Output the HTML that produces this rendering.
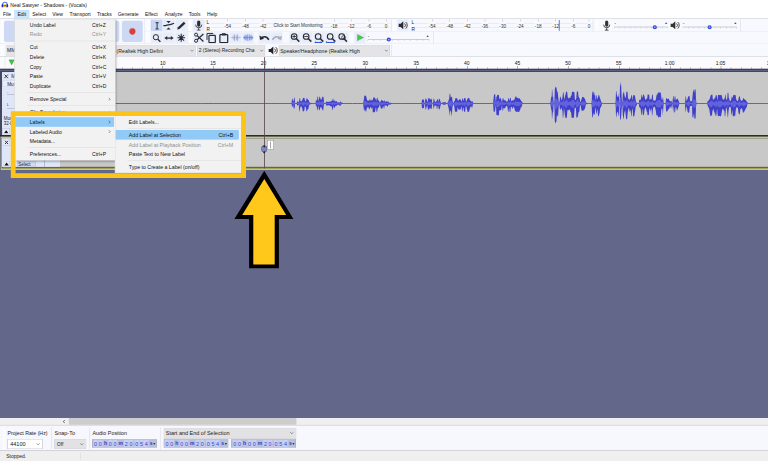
<!DOCTYPE html>
<html><head><meta charset="utf-8"><title>Audacity</title>
<style>
html,body{margin:0;padding:0;width:768px;height:461px;overflow:hidden;background:#636789;}
#a{position:absolute;left:0;top:0;width:1920px;height:1153px;transform:scale(.4);transform-origin:0 0;font-family:"Liberation Sans",sans-serif;overflow:hidden;}
#a div,#a svg{position:absolute;}
</style></head><body><div id="a">
<div style="left:0px;top:0px;width:1920px;height:46.5px;background:#fff;"></div>
<div style="left:0px;top:46.5px;width:1920px;height:95px;background:#F8F9FE;"></div>
<div style="left:0px;top:46px;width:1920px;height:1.25px;background:#d9d9de;"></div>
<div style="left:360px;top:77.75px;width:1560px;height:1.5px;background:#e4e5ec;"></div>
<div style="left:0px;top:108.5px;width:1920px;height:1.75px;background:#e4e5ec;"></div>
<div style="left:0px;top:140.75px;width:1920px;height:1px;background:#d5d6de;"></div>
<div style="left:0px;top:141.75px;width:1920px;height:30.25px;background:#fbfbfe;"></div>
<div style="left:0px;top:171.75px;width:1920px;height:3.5px;background:#3f415b;"></div>
<div style="left:0px;top:175.25px;width:1920px;height:869.5px;background:#636789;"></div>
<svg style="left:1.5px;top:1.5px;" width="20.5" height="19" viewBox="0 0 9.4 8.7"><path d="M2 5V4.4A2.7 2.7 0 0 1 7.4 4.4V5" fill="none" stroke="#5a7ae8" stroke-width="1.3"/><rect x=".9" y="3.9" width="2.3" height="3.6" rx="1" fill="#2222c8"/><rect x="6.2" y="3.9" width="2.3" height="3.6" rx="1" fill="#2222c8"/><rect x="3.2" y="3.9" width="3" height="3.4" fill="#ffd21e"/><rect x="3.2" y="5" width="3" height="1.2" fill="#e03a1c"/></svg>
<div style="left:25.75px;top:7.12px;font-size:12.64px;line-height:15.17px;color:#111;white-space:nowrap;">Neal Sawyer - Shadows - (Vocals)</div>
<div style="left:35.5px;top:25px;width:37.25px;height:21px;background:#cce6fa;border:1px solid #b5d9f5;box-sizing:border-box;"></div>
<div style="left:7.43px;top:30.45px;font-size:12.50px;line-height:15.00px;color:#111;white-space:nowrap;">File</div>
<div style="left:43.6px;top:30.45px;font-size:12.50px;line-height:15.00px;color:#111;white-space:nowrap;">Edit</div>
<div style="left:80.5px;top:30.45px;font-size:12.50px;line-height:15.00px;color:#111;white-space:nowrap;">Select</div>
<div style="left:130.57px;top:30.45px;font-size:12.50px;line-height:15.00px;color:#111;white-space:nowrap;">View</div>
<div style="left:173.86px;top:30.45px;font-size:12.50px;line-height:15.00px;color:#111;white-space:nowrap;">Transport</div>
<div style="left:242.48px;top:30.45px;font-size:12.50px;line-height:15.00px;color:#111;white-space:nowrap;">Tracks</div>
<div style="left:294.32px;top:30.45px;font-size:12.50px;line-height:15.00px;color:#111;white-space:nowrap;">Generate</div>
<div style="left:362.51px;top:30.45px;font-size:12.50px;line-height:15.00px;color:#111;white-space:nowrap;">Effect</div>
<div style="left:412.01px;top:30.45px;font-size:12.50px;line-height:15.00px;color:#111;white-space:nowrap;">Analyze</div>
<div style="left:472.03px;top:30.45px;font-size:12.50px;line-height:15.00px;color:#111;white-space:nowrap;">Tools</div>
<div style="left:517.65px;top:30.45px;font-size:12.50px;line-height:15.00px;color:#111;white-space:nowrap;">Help</div>
<div style="left:1.5px;top:51.25px;width:7.5px;height:55px;background-image:linear-gradient(#fff 0 1.2px,#d9dbe6 1.2px 2px,transparent 2px);background-size:100% 4px;opacity:.95"></div>
<div style="left:304.75px;top:52px;width:52.5px;height:53px;background:#cdd8f4;border-radius:5px;"></div>
<div style="left:245.75px;top:52px;width:52.5px;height:53px;background:#cdd8f4;border-radius:5px;"></div>
<div style="left:186.75px;top:52px;width:52.5px;height:53px;background:#cdd8f4;border-radius:5px;"></div>
<div style="left:127.75px;top:52px;width:52.5px;height:53px;background:#cdd8f4;border-radius:5px;"></div>
<div style="left:68.75px;top:52px;width:52.5px;height:53px;background:#cdd8f4;border-radius:5px;"></div>
<div style="left:9.75px;top:52px;width:52.5px;height:53px;background:#cdd8f4;border-radius:5px;"></div>
<div style="left:323.75px;top:71px;width:14.5px;height:14.5px;background:#e23b3b;border-radius:50%;box-shadow:0 0 0 0.8px #b98a6a;"></div>
<div style="left:360.75px;top:47.5px;width:1px;height:62px;background:#dcdde6;"></div>
<div style="left:366.5px;top:51.25px;width:7.5px;height:55.75px;background-image:linear-gradient(#fff 0 1.2px,#d9dbe6 1.2px 2px,transparent 2px);background-size:100% 4px;opacity:.95"></div>
<div style="left:376.5px;top:48.75px;width:29px;height:28.25px;background:#c9d6f4;box-shadow:inset 0 0 0 1px #aebde6;"></div>
<div style="left:407.12px;top:48.75px;width:29px;height:28.25px;background:#e7ecfb;box-shadow:inset 0 0 0 1px #f3f5fd;"></div>
<div style="left:437.75px;top:48.75px;width:29px;height:28.25px;background:#e7ecfb;box-shadow:inset 0 0 0 1px #f3f5fd;"></div>
<div style="left:376.5px;top:80px;width:29px;height:27.75px;background:#e7ecfb;box-shadow:inset 0 0 0 1px #f3f5fd;"></div>
<div style="left:407.12px;top:80px;width:29px;height:27.75px;background:#e7ecfb;box-shadow:inset 0 0 0 1px #f3f5fd;"></div>
<div style="left:437.75px;top:80px;width:29px;height:27.75px;background:#e7ecfb;box-shadow:inset 0 0 0 1px #f3f5fd;"></div>
<svg style="left:375px;top:47.5px;" width="95" height="62.5" viewBox="150 19 38 25"><path d="M155.5 22.5H158.7M155.5 28.8H158.7M157.1 22.5V28.8" stroke="#2b2b2f" stroke-width=".95" fill="none"/><path d="M166.4 20.9H170.7L168.55 23.1Z M166.4 29.3H170.7L168.55 27.2Z" fill="#2b2b2f"/><path d="M163.3 25.5C166 25.7 167.3 24.6 168.6 24.6S172 24 174.1 23.1" stroke="#2b2b2f" stroke-width="1.25" fill="none"/><path d="M177.2 29.2L177.9 27L183.8 21.5L185.5 23.2L179.5 28.7Z" fill="#2b2b2f"/><circle cx="155.9" cy="37" r="2.6" stroke="#2b2b2f" stroke-width="1" fill="none"/><path d="M157.8 39L160.4 41.5" stroke="#2b2b2f" stroke-width="1.3"/><path d="M166 37.9H172" stroke="#2b2b2f" stroke-width="1.3"/><path d="M164.4 37.9L167.2 35.9V39.9Z M173.6 37.9L170.8 35.9V39.9Z" fill="#2b2b2f"/><path d="M181.2 33.6V41.6M177.4 37.6H185M178.4 34.8L184 40.4M184 34.8L178.4 40.4" stroke="#2b2b2f" stroke-width="1.05"/></svg>
<div style="left:468.25px;top:47.5px;width:1px;height:62px;background:#dcdde6;"></div>
<div style="left:472px;top:50.75px;width:7.5px;height:25.75px;background-image:linear-gradient(#fff 0 1.2px,#d9dbe6 1.2px 2px,transparent 2px);background-size:100% 4px;opacity:.95"></div>
<div style="left:482px;top:48.75px;width:29.5px;height:28.5px;background:#e7ecfb;box-shadow:inset 0 0 0 1px #f3f5fd;"></div>
<svg style="left:482px;top:48.75px;" width="29.5" height="28.5" viewBox="1.06 1.03 9.68 9.35"><rect x="4.6" y="1.8" width="2.6" height="5" rx="1.3" fill="#2b2b2f"/><path d="M3.4 5.2A2.5 2.5 0 0 0 8.4 5.2M5.9 7.8V9.6M4.4 9.7H7.4" stroke="#2b2b2f" stroke-width=".7" fill="none"/></svg>
<div style="left:516.5px;top:49.24px;font-size:12.00px;line-height:14.40px;color:#222;white-space:nowrap;">L</div>
<div style="left:516.5px;top:65.74px;font-size:12.00px;line-height:14.40px;color:#222;white-space:nowrap;">R</div>
<div style="left:527.5px;top:58px;width:447.5px;height:1px;background:#d8dae4;"></div>
<div style="left:527.5px;top:68.25px;width:447.5px;height:1px;background:#d8dae4;"></div>
<div style="left:560.87px;top:58.22px;font-size:11.60px;line-height:13.92px;color:#333;white-space:nowrap;background:#F8F9FE;">-54</div>
<div style="left:568.75px;top:48.5px;width:1px;height:4px;background:#888;"></div>
<div style="left:605.37px;top:58.22px;font-size:11.60px;line-height:13.92px;color:#333;white-space:nowrap;background:#F8F9FE;">-48</div>
<div style="left:613.25px;top:48.5px;width:1px;height:4px;background:#888;"></div>
<div style="left:649.12px;top:58.22px;font-size:11.60px;line-height:13.92px;color:#333;white-space:nowrap;background:#F8F9FE;">-42</div>
<div style="left:657px;top:48.5px;width:1px;height:4px;background:#888;"></div>
<div style="left:826.62px;top:58.22px;font-size:11.60px;line-height:13.92px;color:#333;white-space:nowrap;background:#F8F9FE;">-18</div>
<div style="left:834.5px;top:48.5px;width:1px;height:4px;background:#888;"></div>
<div style="left:869.87px;top:58.22px;font-size:11.60px;line-height:13.92px;color:#333;white-space:nowrap;background:#F8F9FE;">-12</div>
<div style="left:877.75px;top:48.5px;width:1px;height:4px;background:#888;"></div>
<div style="left:917.34px;top:58.22px;font-size:11.60px;line-height:13.92px;color:#333;white-space:nowrap;background:#F8F9FE;">-6</div>
<div style="left:922px;top:48.5px;width:1px;height:4px;background:#888;"></div>
<div style="left:961.77px;top:58.22px;font-size:11.60px;line-height:13.92px;color:#333;white-space:nowrap;background:#F8F9FE;">0</div>
<div style="left:964.5px;top:48.5px;width:1px;height:4px;background:#888;"></div>
<div style="left:683.75px;top:58.23px;font-size:11.59px;line-height:13.90px;color:#333;white-space:nowrap;background:#F8F9FE;">Click to Start Monitoring</div>
<div style="left:978px;top:47.5px;width:1px;height:30.75px;background:#cfd0da;"></div>
<div style="left:981.5px;top:50.75px;width:7.5px;height:25.75px;background-image:linear-gradient(#fff 0 1.2px,#d9dbe6 1.2px 2px,transparent 2px);background-size:100% 4px;opacity:.95"></div>
<div style="left:992.5px;top:48.75px;width:28.25px;height:28.5px;background:#e7ecfb;box-shadow:inset 0 0 0 1px #f3f5fd;"></div>
<svg style="left:992px;top:48.75px;" width="29.5" height="28.5" viewBox="1.06 1.03 9.68 9.35"><path d="M2.6 4.4H4.2L6.4 2.4V9H6.4L4.2 7H2.6Z" fill="#2b2b2f"/><path d="M7.4 4.2A2 2 0 0 1 7.4 7.2M8.4 3A3.6 3.6 0 0 1 8.4 8.4" stroke="#2b2b2f" stroke-width=".7" fill="none"/></svg>
<div style="left:1028.5px;top:49.24px;font-size:12.00px;line-height:14.40px;color:#222;white-space:nowrap;">L</div>
<div style="left:1028.5px;top:65.74px;font-size:12.00px;line-height:14.40px;color:#222;white-space:nowrap;">R</div>
<div style="left:1037.5px;top:58px;width:440px;height:1px;background:#d8dae4;"></div>
<div style="left:1037.5px;top:68.25px;width:440px;height:1px;background:#d8dae4;"></div>
<div style="left:1072.37px;top:58.22px;font-size:11.60px;line-height:13.92px;color:#333;white-space:nowrap;background:#F8F9FE;">-54</div>
<div style="left:1080.25px;top:48.5px;width:1px;height:4px;background:#888;"></div>
<div style="left:1116.12px;top:58.22px;font-size:11.60px;line-height:13.92px;color:#333;white-space:nowrap;background:#F8F9FE;">-48</div>
<div style="left:1124px;top:48.5px;width:1px;height:4px;background:#888;"></div>
<div style="left:1159.87px;top:58.22px;font-size:11.60px;line-height:13.92px;color:#333;white-space:nowrap;background:#F8F9FE;">-42</div>
<div style="left:1167.75px;top:48.5px;width:1px;height:4px;background:#888;"></div>
<div style="left:1203.62px;top:58.22px;font-size:11.60px;line-height:13.92px;color:#333;white-space:nowrap;background:#F8F9FE;">-36</div>
<div style="left:1211.5px;top:48.5px;width:1px;height:4px;background:#888;"></div>
<div style="left:1248.37px;top:58.22px;font-size:11.60px;line-height:13.92px;color:#333;white-space:nowrap;background:#F8F9FE;">-30</div>
<div style="left:1256.25px;top:48.5px;width:1px;height:4px;background:#888;"></div>
<div style="left:1292.37px;top:58.22px;font-size:11.60px;line-height:13.92px;color:#333;white-space:nowrap;background:#F8F9FE;">-24</div>
<div style="left:1300.25px;top:48.5px;width:1px;height:4px;background:#888;"></div>
<div style="left:1337.12px;top:58.22px;font-size:11.60px;line-height:13.92px;color:#333;white-space:nowrap;background:#F8F9FE;">-18</div>
<div style="left:1345px;top:48.5px;width:1px;height:4px;background:#888;"></div>
<div style="left:1380.87px;top:58.22px;font-size:11.60px;line-height:13.92px;color:#333;white-space:nowrap;background:#F8F9FE;">-12</div>
<div style="left:1388.75px;top:48.5px;width:1px;height:4px;background:#888;"></div>
<div style="left:1427.84px;top:58.22px;font-size:11.60px;line-height:13.92px;color:#333;white-space:nowrap;background:#F8F9FE;">-6</div>
<div style="left:1432.5px;top:48.5px;width:1px;height:4px;background:#888;"></div>
<div style="left:1469.27px;top:58.22px;font-size:11.60px;line-height:13.92px;color:#333;white-space:nowrap;background:#F8F9FE;">0</div>
<div style="left:1472px;top:48.5px;width:1px;height:4px;background:#888;"></div>
<div style="left:1397.25px;top:49.5px;width:1.5px;height:27.5px;background:#3a55d8;"></div>
<div style="left:1481.5px;top:47.5px;width:1px;height:30.75px;background:#cfd0da;"></div>
<div style="left:1489px;top:50.75px;width:7.5px;height:25.75px;background-image:linear-gradient(#fff 0 1.2px,#d9dbe6 1.2px 2px,transparent 2px);background-size:100% 4px;opacity:.95"></div>
<svg style="left:1502px;top:49px;" width="29.5" height="28.5" viewBox="1.06 1.03 9.68 9.35"><rect x="4.6" y="1.8" width="2.6" height="5" rx="1.3" fill="#333"/><path d="M3.4 5.2A2.5 2.5 0 0 0 8.4 5.2M5.9 7.8V9.6M4.4 9.7H7.4" stroke="#333" stroke-width=".7" fill="none"/></svg>
<div style="left:1536.25px;top:67px;width:132.5px;height:1.12px;background:#8a8c98;"></div>
<div style="left:1535.88px;top:67.5px;width:0.75px;height:3.25px;background:#a5a7b2;"></div>
<div style="left:1549.12px;top:67.5px;width:0.75px;height:3.25px;background:#a5a7b2;"></div>
<div style="left:1562.38px;top:67.5px;width:0.75px;height:3.25px;background:#a5a7b2;"></div>
<div style="left:1575.62px;top:67.5px;width:0.75px;height:3.25px;background:#a5a7b2;"></div>
<div style="left:1588.88px;top:67.5px;width:0.75px;height:3.25px;background:#a5a7b2;"></div>
<div style="left:1602.12px;top:67.5px;width:0.75px;height:3.25px;background:#a5a7b2;"></div>
<div style="left:1615.38px;top:67.5px;width:0.75px;height:3.25px;background:#a5a7b2;"></div>
<div style="left:1628.62px;top:67.5px;width:0.75px;height:3.25px;background:#a5a7b2;"></div>
<div style="left:1641.88px;top:67.5px;width:0.75px;height:3.25px;background:#a5a7b2;"></div>
<div style="left:1655.13px;top:67.5px;width:0.75px;height:3.25px;background:#a5a7b2;"></div>
<div style="left:1668.38px;top:67.5px;width:0.75px;height:3.25px;background:#a5a7b2;"></div>
<div style="left:1536.25px;top:52.40px;font-size:10.00px;line-height:12.00px;color:#000;white-space:nowrap;font-weight:bold;">-</div>
<div style="left:1662.75px;top:52.98px;font-size:9.00px;line-height:10.80px;color:#000;white-space:nowrap;font-weight:bold;">+</div>
<div style="left:1631.75px;top:62.75px;width:10px;height:10px;background:#8e9af2;border-radius:50%;box-shadow:inset 0 0 0 2.6px #3444d8;"></div>
<svg style="left:1672px;top:49px;" width="29.5" height="28.5" viewBox="1.06 1.03 9.68 9.35"><path d="M2.6 4.4H4.2L6.4 2.4V9H6.4L4.2 7H2.6Z" fill="#333"/><path d="M7.4 4.2A2 2 0 0 1 7.4 7.2M8.4 3A3.6 3.6 0 0 1 8.4 8.4" stroke="#333" stroke-width=".7" fill="none"/></svg>
<div style="left:1707.5px;top:67px;width:134.25px;height:1.12px;background:#8a8c98;"></div>
<div style="left:1707.12px;top:67.5px;width:0.75px;height:3.25px;background:#a5a7b2;"></div>
<div style="left:1720.55px;top:67.5px;width:0.75px;height:3.25px;background:#a5a7b2;"></div>
<div style="left:1733.98px;top:67.5px;width:0.75px;height:3.25px;background:#a5a7b2;"></div>
<div style="left:1747.4px;top:67.5px;width:0.75px;height:3.25px;background:#a5a7b2;"></div>
<div style="left:1760.83px;top:67.5px;width:0.75px;height:3.25px;background:#a5a7b2;"></div>
<div style="left:1774.25px;top:67.5px;width:0.75px;height:3.25px;background:#a5a7b2;"></div>
<div style="left:1787.68px;top:67.5px;width:0.75px;height:3.25px;background:#a5a7b2;"></div>
<div style="left:1801.1px;top:67.5px;width:0.75px;height:3.25px;background:#a5a7b2;"></div>
<div style="left:1814.53px;top:67.5px;width:0.75px;height:3.25px;background:#a5a7b2;"></div>
<div style="left:1827.95px;top:67.5px;width:0.75px;height:3.25px;background:#a5a7b2;"></div>
<div style="left:1841.38px;top:67.5px;width:0.75px;height:3.25px;background:#a5a7b2;"></div>
<div style="left:1707.5px;top:52.40px;font-size:10.00px;line-height:12.00px;color:#000;white-space:nowrap;font-weight:bold;">-</div>
<div style="left:1835.75px;top:52.98px;font-size:9.00px;line-height:10.80px;color:#000;white-space:nowrap;font-weight:bold;">+</div>
<div style="left:1769.25px;top:62.75px;width:10px;height:10px;background:#8e9af2;border-radius:50%;box-shadow:inset 0 0 0 2.6px #3444d8;"></div>
<div style="left:1849.5px;top:47.5px;width:1px;height:30.75px;background:#cfd0da;"></div>
<div style="left:472px;top:82.5px;width:7.5px;height:25px;background-image:linear-gradient(#fff 0 1.2px,#d9dbe6 1.2px 2px,transparent 2px);background-size:100% 4px;opacity:.95"></div>
<div style="left:482.5px;top:80.25px;width:29px;height:28px;background:#e7ecfb;box-shadow:inset 0 0 0 1px #f3f5fd;"></div>
<div style="left:513.5px;top:80.25px;width:29px;height:28px;background:#e7ecfb;box-shadow:inset 0 0 0 1px #f3f5fd;"></div>
<div style="left:544.5px;top:80.25px;width:29px;height:28px;background:#e7ecfb;box-shadow:inset 0 0 0 1px #f3f5fd;"></div>
<div style="left:575.25px;top:80.25px;width:29px;height:28px;background:#e7ecfb;box-shadow:inset 0 0 0 1px #f3f5fd;"></div>
<div style="left:605.75px;top:80.25px;width:29px;height:28px;background:#e7ecfb;box-shadow:inset 0 0 0 1px #f3f5fd;"></div>
<svg style="left:482.5px;top:80.25px;" width="29" height="28" viewBox="1.04 1.01 9.51 9.18"><circle cx="3.4" cy="8.2" r="1.25" stroke="#2b2b2f" stroke-width=".8" fill="none"/><circle cx="3.4" cy="3.2" r="1.25" stroke="#2b2b2f" stroke-width=".8" fill="none"/><path d="M4.3 7.4L9.4 2.6M4.3 4L9.4 8.8" stroke="#2b2b2f" stroke-width="1"/></svg>
<svg style="left:513.5px;top:80.25px;" width="29" height="28" viewBox="1.04 1.01 9.51 9.18"><path d="M2.2 7.5V2.2H7.2" stroke="#2b2b2f" stroke-width=".8" fill="none"/><rect x="3.8" y="3.8" width="5.2" height="6" rx=".6" stroke="#2b2b2f" stroke-width="1" fill="none"/></svg>
<svg style="left:544.5px;top:80.25px;" width="29" height="28" viewBox="1.04 1.01 9.51 9.18"><rect x="2.6" y="3.2" width="6.4" height="6.6" rx=".6" stroke="#2b2b2f" stroke-width="1" fill="none"/><rect x="4.3" y="2" width="3" height="1.8" fill="#2b2b2f"/></svg>
<svg style="left:575.25px;top:80.25px;" width="29" height="28" viewBox="1.04 1.01 9.51 9.18"><path d="M1.6 5.6H10M3.2 4.6V6.6M4.2 3.8V7.4M5.2 4.4V6.8M6.4 3.6V7.6M7.4 4.2V7M8.4 4.8V6.4" stroke="#9fb2e6" stroke-width=".5"/><path d="M4.6 3V8.2M7 3V8.2" stroke="#8c94ad" stroke-width=".6"/></svg>
<svg style="left:605.75px;top:80.25px;" width="29" height="28" viewBox="1.04 1.01 9.51 9.18"><path d="M1.6 5.6H10M2.6 4.2V7M3.4 3.4V7.8M4.2 4.2V7M7.4 4.2V7M8.2 3.4V7.8M9 4.2V7" stroke="#5f86ea" stroke-width=".6"/><path d="M5 3V8.2M6.6 3V8.2" stroke="#6a7cc0" stroke-width=".7"/></svg>
<div style="left:646.5px;top:80.25px;width:29.25px;height:28px;background:#e7ecfb;box-shadow:inset 0 0 0 1px #f3f5fd;"></div>
<div style="left:677px;top:80.25px;width:29.25px;height:28px;background:#e7ecfb;box-shadow:inset 0 0 0 1px #f3f5fd;"></div>
<svg style="left:646.5px;top:80.25px;" width="29.25" height="28" viewBox="1.05 1.01 9.59 9.18"><path d="M2.6 6.4C4 4.4 7.6 4 9.2 7.4" stroke="#2b2b2f" stroke-width="1.3" fill="none"/><path d="M1.6 3.8L2 7.6L5.4 6.6Z" fill="#2b2b2f"/></svg>
<svg style="left:677px;top:80.25px;" width="29.25" height="28" viewBox="1.05 1.01 9.59 9.18"><path d="M9.1 6.4C7.7 4.4 4.1 4 2.5 7.4" stroke="#a9adb8" stroke-width="1.3" fill="none"/><path d="M10.1 3.8L9.7 7.6L6.3 6.6Z" fill="#a9adb8"/></svg>
<div style="left:723px;top:80.25px;width:28.75px;height:28px;background:#e7ecfb;box-shadow:inset 0 0 0 1px #f3f5fd;"></div>
<svg style="left:723px;top:80.25px;" width="28.75" height="28" viewBox="1.04 1.01 9.43 9.18"><circle cx="5.1" cy="4.7" r="2.3" stroke="#2b2b2f" stroke-width=".9" fill="none"/><path d="M6.8 6.4L9.3 8.9" stroke="#2b2b2f" stroke-width="1.2"/><path d="M3.6 4.7H6.6M5.1 3.2V6.2" stroke="#2b2b2f" stroke-width=".7"/></svg>
<div style="left:753px;top:80.25px;width:28.75px;height:28px;background:#e7ecfb;box-shadow:inset 0 0 0 1px #f3f5fd;"></div>
<svg style="left:753px;top:80.25px;" width="28.75" height="28" viewBox="1.04 1.01 9.43 9.18"><circle cx="5.1" cy="4.7" r="2.3" stroke="#2b2b2f" stroke-width=".9" fill="none"/><path d="M6.8 6.4L9.3 8.9" stroke="#2b2b2f" stroke-width="1.2"/><path d="M3.6 4.7H6.6" stroke="#2b2b2f" stroke-width=".7"/></svg>
<div style="left:782.75px;top:80.25px;width:28.75px;height:28px;background:#e7ecfb;box-shadow:inset 0 0 0 1px #f3f5fd;"></div>
<svg style="left:782.75px;top:80.25px;" width="28.75" height="28" viewBox="1.04 1.01 9.43 9.18"><circle cx="5.1" cy="4.7" r="2.3" stroke="#2b2b2f" stroke-width=".9" fill="none"/><path d="M6.8 6.4L9.3 8.9" stroke="#2b2b2f" stroke-width="1.2"/><path d="M2.6 9.6H8" stroke="#2c50e0" stroke-width=".8"/><path d="M2 9.6L3.4 8.6V10.6ZM8.6 9.6L7.2 8.6V10.6Z" fill="#2c50e0"/></svg>
<div style="left:812.5px;top:80.25px;width:28.75px;height:28px;background:#e7ecfb;box-shadow:inset 0 0 0 1px #f3f5fd;"></div>
<svg style="left:812.5px;top:80.25px;" width="28.75" height="28" viewBox="1.04 1.01 9.43 9.18"><circle cx="5.1" cy="4.7" r="2.3" stroke="#2b2b2f" stroke-width=".9" fill="none"/><path d="M6.8 6.4L9.3 8.9" stroke="#2b2b2f" stroke-width="1.2"/><path d="M2.2 9.6H8.4" stroke="#2c50e0" stroke-width=".8"/><path d="M2 8.4V10.8M8.6 8.4V10.8" stroke="#2c50e0" stroke-width=".6"/></svg>
<div style="left:842.25px;top:80.25px;width:28.75px;height:28px;background:#e7ecfb;box-shadow:inset 0 0 0 1px #f3f5fd;"></div>
<svg style="left:842.25px;top:80.25px;" width="28.75" height="28" viewBox="1.04 1.01 9.43 9.18"><circle cx="5.1" cy="4.7" r="2.3" stroke="#2b2b2f" stroke-width=".9" fill="none"/><path d="M6.8 6.4L9.3 8.9" stroke="#2b2b2f" stroke-width="1.2"/><circle cx="6.6" cy="5.6" r="1.6" stroke="#2b2b2f" stroke-width=".6" fill="none"/></svg>
<div style="left:875px;top:82.5px;width:7.5px;height:25px;background-image:linear-gradient(#fff 0 1.2px,#d9dbe6 1.2px 2px,transparent 2px);background-size:100% 4px;opacity:.95"></div>
<div style="left:885.5px;top:80.25px;width:28px;height:28px;background:#e7ecfb;box-shadow:inset 0 0 0 1px #f3f5fd;"></div>
<svg style="left:885.5px;top:80.25px;" width="28" height="28" viewBox="0 0 11.2 11.2"><path d="M3 2.4L9.2 5.6L3 8.8Z" fill="#48c848" stroke="#2f9e2f" stroke-width=".3"/></svg>
<div style="left:919.5px;top:98.5px;width:153px;height:1.13px;background:#8a8c98;"></div>
<div style="left:919.13px;top:99px;width:0.75px;height:3.25px;background:#a5a7b2;"></div>
<div style="left:934.43px;top:99px;width:0.75px;height:3.25px;background:#a5a7b2;"></div>
<div style="left:949.73px;top:99px;width:0.75px;height:3.25px;background:#a5a7b2;"></div>
<div style="left:965.03px;top:99px;width:0.75px;height:3.25px;background:#a5a7b2;"></div>
<div style="left:980.33px;top:99px;width:0.75px;height:3.25px;background:#a5a7b2;"></div>
<div style="left:995.62px;top:99px;width:0.75px;height:3.25px;background:#a5a7b2;"></div>
<div style="left:1010.92px;top:99px;width:0.75px;height:3.25px;background:#a5a7b2;"></div>
<div style="left:1026.22px;top:99px;width:0.75px;height:3.25px;background:#a5a7b2;"></div>
<div style="left:1041.53px;top:99px;width:0.75px;height:3.25px;background:#a5a7b2;"></div>
<div style="left:1056.83px;top:99px;width:0.75px;height:3.25px;background:#a5a7b2;"></div>
<div style="left:1072.12px;top:99px;width:0.75px;height:3.25px;background:#a5a7b2;"></div>
<div style="left:919.5px;top:83.90px;font-size:10.00px;line-height:12.00px;color:#000;white-space:nowrap;font-weight:bold;">-</div>
<div style="left:1066.5px;top:84.48px;font-size:9.00px;line-height:10.80px;color:#000;white-space:nowrap;font-weight:bold;">+</div>
<div style="left:966.5px;top:94.25px;width:10px;height:10px;background:#8e9af2;border-radius:50%;box-shadow:inset 0 0 0 2.6px #3444d8;"></div>
<div style="left:1082.5px;top:79.25px;width:1px;height:30.25px;background:#cfd0da;"></div>
<div style="left:1.5px;top:113.75px;width:7.5px;height:25px;background-image:linear-gradient(#fff 0 1.2px,#d9dbe6 1.2px 2px,transparent 2px);background-size:100% 4px;opacity:.95"></div>
<div style="left:13.5px;top:112.5px;width:61.5px;height:26.5px;background:#e4e4e6;box-shadow:inset 0 0 0 1px #c3c4cc;"></div>
<svg style="left:61px;top:121.5px;" width="10" height="9.5" viewBox="0 0 4 3.8"><path d="M.6 1L2 2.5L3.4 1" stroke="#444" stroke-width=".5" fill="none"/></svg>
<div style="left:17.75px;top:119.95px;font-size:12.50px;line-height:15.00px;color:#222;white-space:nowrap;">MME</div>
<svg style="left:77.5px;top:111.75px;" width="29.5" height="28.5" viewBox="1.06 1.03 9.68 9.35"><rect x="4.6" y="1.8" width="2.6" height="5" rx="1.3" fill="#333"/><path d="M3.4 5.2A2.5 2.5 0 0 0 8.4 5.2M5.9 7.8V9.6M4.4 9.7H7.4" stroke="#333" stroke-width=".7" fill="none"/></svg>
<div style="left:107.5px;top:112.5px;width:381.5px;height:26.5px;background:#e4e4e6;box-shadow:inset 0 0 0 1px #c3c4cc;"></div>
<svg style="left:475px;top:121.5px;" width="10" height="9.5" viewBox="0 0 4 3.8"><path d="M.6 1L2 2.5L3.4 1" stroke="#444" stroke-width=".5" fill="none"/></svg>
<div style="left:219.62px;top:119.65px;font-size:13.02px;line-height:15.62px;color:#222;white-space:nowrap;">Microphone (Realtek High Defini</div>
<div style="left:493px;top:112.5px;width:169.5px;height:26.5px;background:#e4e4e6;box-shadow:inset 0 0 0 1px #c3c4cc;"></div>
<div style="left:497px;top:120.12px;font-size:12.20px;line-height:14.64px;color:#222;white-space:nowrap;">2 (Stereo) Recording Cha</div>
<svg style="left:648.5px;top:121.5px;" width="10" height="9.5" viewBox="0 0 4 3.8"><path d="M.6 1L2 2.5L3.4 1" stroke="#444" stroke-width=".5" fill="none"/></svg>
<svg style="left:666.5px;top:111.75px;" width="29.5" height="28.5" viewBox="1.06 1.03 9.68 9.35"><path d="M2.6 4.4H4.2L6.4 2.4V9H6.4L4.2 7H2.6Z" fill="#222"/><path d="M7.4 4.2A2 2 0 0 1 7.4 7.2M8.4 3A3.6 3.6 0 0 1 8.4 8.4" stroke="#222" stroke-width=".7" fill="none"/></svg>
<div style="left:696.5px;top:112.5px;width:278px;height:26.5px;background:#e4e4e6;box-shadow:inset 0 0 0 1px #c3c4cc;"></div>
<div style="left:700.5px;top:119.76px;font-size:12.83px;line-height:15.40px;color:#222;white-space:nowrap;">Speaker/Headphone (Realtek High</div>
<svg style="left:960.5px;top:121.5px;" width="10" height="9.5" viewBox="0 0 4 3.8"><path d="M.6 1L2 2.5L3.4 1" stroke="#444" stroke-width=".5" fill="none"/></svg>
<div style="left:977.5px;top:111px;width:1px;height:29.75px;background:#cfd0da;"></div>
<div style="left:11.75px;top:142.5px;width:1px;height:28px;background:#d0d1da;"></div>
<svg style="left:20.5px;top:147px;" width="16" height="18.5" viewBox="0 0 6 7"><path d="M.4 1H5.6L3 5.8Z" fill="#3fc24a" stroke="#2a9434" stroke-width=".3"/></svg>
<div style="left:152.5px;top:165px;width:1px;height:7px;background:#444;"></div>
<div style="left:177.87px;top:168.25px;width:1px;height:3.75px;background:#666;"></div>
<div style="left:203.25px;top:168.25px;width:1px;height:3.75px;background:#666;"></div>
<div style="left:228.62px;top:168.25px;width:1px;height:3.75px;background:#666;"></div>
<div style="left:254px;top:168.25px;width:1px;height:3.75px;background:#666;"></div>
<div style="left:279.37px;top:165px;width:1px;height:7px;background:#444;"></div>
<div style="left:304.75px;top:168.25px;width:1px;height:3.75px;background:#666;"></div>
<div style="left:330.12px;top:168.25px;width:1px;height:3.75px;background:#666;"></div>
<div style="left:355.5px;top:168.25px;width:1px;height:3.75px;background:#666;"></div>
<div style="left:380.88px;top:168.25px;width:1px;height:3.75px;background:#666;"></div>
<div style="left:406.25px;top:165px;width:1px;height:7px;background:#444;"></div>
<div style="left:431.62px;top:168.25px;width:1px;height:3.75px;background:#666;"></div>
<div style="left:457px;top:168.25px;width:1px;height:3.75px;background:#666;"></div>
<div style="left:482.38px;top:168.25px;width:1px;height:3.75px;background:#666;"></div>
<div style="left:507.75px;top:168.25px;width:1px;height:3.75px;background:#666;"></div>
<div style="left:533.12px;top:165px;width:1px;height:7px;background:#444;"></div>
<div style="left:558.5px;top:168.25px;width:1px;height:3.75px;background:#666;"></div>
<div style="left:583.88px;top:168.25px;width:1px;height:3.75px;background:#666;"></div>
<div style="left:609.25px;top:168.25px;width:1px;height:3.75px;background:#666;"></div>
<div style="left:634.62px;top:168.25px;width:1px;height:3.75px;background:#666;"></div>
<div style="left:660px;top:165px;width:1px;height:7px;background:#444;"></div>
<div style="left:685.38px;top:168.25px;width:1px;height:3.75px;background:#666;"></div>
<div style="left:710.75px;top:168.25px;width:1px;height:3.75px;background:#666;"></div>
<div style="left:736.12px;top:168.25px;width:1px;height:3.75px;background:#666;"></div>
<div style="left:761.5px;top:168.25px;width:1px;height:3.75px;background:#666;"></div>
<div style="left:786.88px;top:165px;width:1px;height:7px;background:#444;"></div>
<div style="left:812.25px;top:168.25px;width:1px;height:3.75px;background:#666;"></div>
<div style="left:837.62px;top:168.25px;width:1px;height:3.75px;background:#666;"></div>
<div style="left:863px;top:168.25px;width:1px;height:3.75px;background:#666;"></div>
<div style="left:888.37px;top:168.25px;width:1px;height:3.75px;background:#666;"></div>
<div style="left:913.75px;top:165px;width:1px;height:7px;background:#444;"></div>
<div style="left:939.13px;top:168.25px;width:1px;height:3.75px;background:#666;"></div>
<div style="left:964.5px;top:168.25px;width:1px;height:3.75px;background:#666;"></div>
<div style="left:989.88px;top:168.25px;width:1px;height:3.75px;background:#666;"></div>
<div style="left:1015.25px;top:168.25px;width:1px;height:3.75px;background:#666;"></div>
<div style="left:1040.62px;top:165px;width:1px;height:7px;background:#444;"></div>
<div style="left:1066px;top:168.25px;width:1px;height:3.75px;background:#666;"></div>
<div style="left:1091.38px;top:168.25px;width:1px;height:3.75px;background:#666;"></div>
<div style="left:1116.75px;top:168.25px;width:1px;height:3.75px;background:#666;"></div>
<div style="left:1142.12px;top:168.25px;width:1px;height:3.75px;background:#666;"></div>
<div style="left:1167.5px;top:165px;width:1px;height:7px;background:#444;"></div>
<div style="left:1192.88px;top:168.25px;width:1px;height:3.75px;background:#666;"></div>
<div style="left:1218.25px;top:168.25px;width:1px;height:3.75px;background:#666;"></div>
<div style="left:1243.62px;top:168.25px;width:1px;height:3.75px;background:#666;"></div>
<div style="left:1269px;top:168.25px;width:1px;height:3.75px;background:#666;"></div>
<div style="left:1294.38px;top:165px;width:1px;height:7px;background:#444;"></div>
<div style="left:1319.75px;top:168.25px;width:1px;height:3.75px;background:#666;"></div>
<div style="left:1345.12px;top:168.25px;width:1px;height:3.75px;background:#666;"></div>
<div style="left:1370.5px;top:168.25px;width:1px;height:3.75px;background:#666;"></div>
<div style="left:1395.87px;top:168.25px;width:1px;height:3.75px;background:#666;"></div>
<div style="left:1421.25px;top:165px;width:1px;height:7px;background:#444;"></div>
<div style="left:1446.62px;top:168.25px;width:1px;height:3.75px;background:#666;"></div>
<div style="left:1472px;top:168.25px;width:1px;height:3.75px;background:#666;"></div>
<div style="left:1497.37px;top:168.25px;width:1px;height:3.75px;background:#666;"></div>
<div style="left:1522.75px;top:168.25px;width:1px;height:3.75px;background:#666;"></div>
<div style="left:1548.12px;top:165px;width:1px;height:7px;background:#444;"></div>
<div style="left:1573.5px;top:168.25px;width:1px;height:3.75px;background:#666;"></div>
<div style="left:1598.88px;top:168.25px;width:1px;height:3.75px;background:#666;"></div>
<div style="left:1624.25px;top:168.25px;width:1px;height:3.75px;background:#666;"></div>
<div style="left:1649.62px;top:168.25px;width:1px;height:3.75px;background:#666;"></div>
<div style="left:1675px;top:165px;width:1px;height:7px;background:#444;"></div>
<div style="left:1700.37px;top:168.25px;width:1px;height:3.75px;background:#666;"></div>
<div style="left:1725.75px;top:168.25px;width:1px;height:3.75px;background:#666;"></div>
<div style="left:1751.12px;top:168.25px;width:1px;height:3.75px;background:#666;"></div>
<div style="left:1776.5px;top:168.25px;width:1px;height:3.75px;background:#666;"></div>
<div style="left:1801.88px;top:165px;width:1px;height:7px;background:#444;"></div>
<div style="left:1827.25px;top:168.25px;width:1px;height:3.75px;background:#666;"></div>
<div style="left:1852.62px;top:168.25px;width:1px;height:3.75px;background:#666;"></div>
<div style="left:1878px;top:168.25px;width:1px;height:3.75px;background:#666;"></div>
<div style="left:1903.37px;top:168.25px;width:1px;height:3.75px;background:#666;"></div>
<div style="left:399.85px;top:151.51px;font-size:12.40px;line-height:14.88px;color:#111;white-space:nowrap;">10</div>
<div style="left:525.6px;top:151.51px;font-size:12.40px;line-height:14.88px;color:#111;white-space:nowrap;">15</div>
<div style="left:651.85px;top:151.51px;font-size:12.40px;line-height:14.88px;color:#111;white-space:nowrap;">20</div>
<div style="left:778.85px;top:151.51px;font-size:12.40px;line-height:14.88px;color:#111;white-space:nowrap;">25</div>
<div style="left:906.1px;top:151.51px;font-size:12.40px;line-height:14.88px;color:#111;white-space:nowrap;">30</div>
<div style="left:1033.6px;top:151.51px;font-size:12.40px;line-height:14.88px;color:#111;white-space:nowrap;">35</div>
<div style="left:1160.1px;top:151.51px;font-size:12.40px;line-height:14.88px;color:#111;white-space:nowrap;">40</div>
<div style="left:1286.85px;top:151.51px;font-size:12.40px;line-height:14.88px;color:#111;white-space:nowrap;">45</div>
<div style="left:1413.1px;top:151.51px;font-size:12.40px;line-height:14.88px;color:#111;white-space:nowrap;">50</div>
<div style="left:1539.85px;top:151.51px;font-size:12.40px;line-height:14.88px;color:#111;white-space:nowrap;">55</div>
<div style="left:1662.18px;top:151.51px;font-size:12.40px;line-height:14.88px;color:#111;white-space:nowrap;">1:00</div>
<div style="left:1789.18px;top:151.51px;font-size:12.40px;line-height:14.88px;color:#111;white-space:nowrap;">1:05</div>
<div style="left:1916.68px;top:151.51px;font-size:12.40px;line-height:14.88px;color:#111;white-space:nowrap;">1:10</div>
<div style="left:0px;top:177.25px;width:1920px;height:162.5px;background:#45475f;"></div>
<div style="left:5px;top:180px;width:145px;height:158px;background:#dfe6fa;"></div>
<div style="left:150px;top:180px;width:1770px;height:158px;background:#c8c8c8;"></div>
<div style="left:110.75px;top:180px;width:1.25px;height:158px;background:#7a7e96;"></div>
<div style="left:6.5px;top:180.75px;width:16.5px;height:17.25px;background:#e6ebfb;box-shadow:inset 0 0 0 1px #b6bdd6;"></div>
<svg style="left:6px;top:181.5px;" width="17.5" height="17" viewBox="2.4 72.6 7.0 6.800000000000011"><path d="M4.6 74.4L7.8 77.8M7.8 74.4L4.6 77.8" stroke="#222" stroke-width=".9"/></svg>
<div style="left:23.5px;top:181.5px;width:86.5px;height:17px;background:#e6ebfb;box-shadow:inset 0 0 0 1px #b6bdd6;"></div>
<div style="left:28px;top:184.48px;font-size:11.59px;line-height:13.91px;color:#111;white-space:nowrap;">My Track</div>
<div style="left:6px;top:200.5px;width:50.25px;height:17px;background:#e9edfb;box-shadow:inset 0 0 0 1px #b6bdd6;"></div>
<div style="left:18px;top:203.98px;font-size:11.58px;line-height:13.90px;color:#111;white-space:nowrap;">Mute</div>
<div style="left:57.5px;top:200.5px;width:52.5px;height:17px;background:#e9edfb;box-shadow:inset 0 0 0 1px #b6bdd6;"></div>
<div style="left:70px;top:204.18px;font-size:11.24px;line-height:13.49px;color:#111;white-space:nowrap;">Solo</div>
<div style="left:17.5px;top:223.98px;font-size:9.00px;line-height:10.80px;color:#333;white-space:nowrap;">-</div>
<div style="left:17px;top:235.5px;width:83px;height:1px;background:#8d90a0;"></div>
<div style="left:17.5px;top:257.51px;font-size:8.09px;line-height:9.71px;color:#222;white-space:nowrap;">L</div>
<div style="left:17px;top:270.5px;width:83px;height:1px;background:#8d90a0;"></div>
<div style="left:9.5px;top:289.15px;font-size:11.30px;line-height:13.56px;color:#222;white-space:nowrap;">Mono, 44100Hz</div>
<div style="left:9.5px;top:302.65px;font-size:11.30px;line-height:13.56px;color:#222;white-space:nowrap;">32-bit float</div>
<div style="left:6px;top:320px;width:19px;height:16.5px;background:#e6ebfb;box-shadow:inset 0 0 0 1px #b6bdd6;"></div>
<svg style="left:9px;top:323.5px;" width="13" height="10" viewBox="0 0 5.2 4"><path d="M.4 3.6L2.6 .6L4.8 3.6Z" fill="#111"/></svg>
<div style="left:2.25px;top:340.5px;width:1917.75px;height:84px;background:#cbcb6c;"></div>
<div style="left:4.25px;top:345.25px;width:1915.75px;height:75.75px;background:#66663c;"></div>
<div style="left:5px;top:345.5px;width:1915px;height:71.75px;background:#c8c8c8;"></div>
<div style="left:5px;top:345.5px;width:145px;height:71.75px;background:#dfe6fa;"></div>
<div style="left:110.75px;top:345.5px;width:1.25px;height:71.75px;background:#7a7e96;"></div>
<div style="left:0px;top:337.5px;width:1920px;height:3px;background:#1d1d22;"></div>
<div style="left:6.5px;top:347px;width:18.5px;height:18px;background:#e6ebfb;box-shadow:inset 0 0 0 1px #b6bdd6;"></div>
<svg style="left:6.5px;top:347px;" width="18.5" height="18" viewBox="2.6 138.8 7.4 7.199999999999989"><path d="M4.8 140.8L7.8 144M7.8 140.8L4.8 144" stroke="#222" stroke-width=".9"/></svg>
<div style="left:6.5px;top:401.5px;width:18.5px;height:16px;background:#e6ebfb;box-shadow:inset 0 0 0 1px #b6bdd6;"></div>
<svg style="left:9.5px;top:404.5px;" width="13" height="10" viewBox="0 0 5.2 4"><path d="M.4 3.6L2.6 .6L4.8 3.6Z" fill="#111"/></svg>
<div style="left:43px;top:402.5px;width:46.5px;height:14px;background:#d3dbf3;box-shadow:inset 0 0 0 1px #a9b1cc;"></div>
<div style="left:45.5px;top:404.23px;font-size:11.15px;line-height:13.38px;color:#222;white-space:nowrap;">Select</div>
<svg style="left:150px;top:180px;" width="1770" height="158" viewBox="60 72 708 63.19999999999999"><polygon points="60.0,103.01 60.4,103.01 60.8,103.03 61.2,103.02 61.6,103.04 62.0,102.96 62.4,103.08 62.8,103.11 63.2,102.96 63.6,103.08 64.0,103.03 64.4,103.11 64.8,103.08 65.2,103.08 65.6,103.11 66.0,102.98 66.4,103.03 66.8,103.09 67.2,103.05 67.6,103.02 68.0,103.07 68.4,103.09 68.8,103.06 69.2,103.13 69.6,102.97 70.0,103.03 70.4,103.08 70.8,103.08 71.2,103.10 71.6,102.97 72.0,103.12 72.4,103.05 72.8,103.11 73.2,102.96 73.6,103.10 74.0,103.07 74.4,103.02 74.8,102.98 75.2,103.00 75.6,102.99 76.0,102.99 76.4,102.97 76.8,102.97 77.2,102.99 77.6,103.04 78.0,103.03 78.4,102.99 78.8,103.02 79.2,103.05 79.6,103.00 80.0,103.06 80.4,103.06 80.8,102.99 81.2,103.04 81.6,103.10 82.0,103.10 82.4,103.03 82.8,102.96 83.2,102.98 83.6,102.96 84.0,103.05 84.4,103.13 84.8,103.03 85.2,102.96 85.6,103.03 86.0,103.04 86.4,103.01 86.8,103.07 87.2,103.07 87.6,103.01 88.0,103.11 88.4,103.06 88.8,103.03 89.2,102.96 89.6,103.05 90.0,102.95 90.4,103.03 90.8,103.10 91.2,102.95 91.6,103.04 92.0,102.97 92.4,102.98 92.8,102.97 93.2,103.10 93.6,103.04 94.0,103.10 94.4,103.02 94.8,103.07 95.2,103.02 95.6,103.06 96.0,103.07 96.4,103.13 96.8,102.98 97.2,103.01 97.6,103.04 98.0,103.08 98.4,103.03 98.8,103.03 99.2,103.11 99.6,102.99 100.0,103.11 100.4,103.04 100.8,103.02 101.2,103.12 101.6,102.99 102.0,103.00 102.4,103.10 102.8,103.11 103.2,103.03 103.6,103.05 104.0,103.12 104.4,103.03 104.8,103.05 105.2,103.09 105.6,102.96 106.0,103.07 106.4,102.98 106.8,103.02 107.2,103.04 107.6,103.09 108.0,103.00 108.4,103.07 108.8,103.04 109.2,103.09 109.6,103.07 110.0,102.96 110.4,103.03 110.8,103.03 111.2,103.06 111.6,103.11 112.0,103.07 112.4,103.10 112.8,103.09 113.2,103.01 113.6,103.10 114.0,103.11 114.4,102.98 114.8,103.05 115.2,102.99 115.6,103.00 116.0,103.09 116.4,103.09 116.8,103.00 117.2,103.02 117.6,103.02 118.0,103.11 118.4,103.08 118.8,103.01 119.2,103.06 119.6,102.98 120.0,103.11 120.4,103.04 120.8,103.07 121.2,103.00 121.6,102.97 122.0,102.97 122.4,103.12 122.8,103.07 123.2,103.00 123.6,103.07 124.0,103.11 124.4,103.00 124.8,103.10 125.2,103.06 125.6,103.02 126.0,103.03 126.4,103.05 126.8,103.13 127.2,103.08 127.6,103.02 128.0,103.11 128.4,102.97 128.8,103.00 129.2,102.98 129.6,102.96 130.0,103.01 130.4,103.02 130.8,103.00 131.2,102.96 131.6,103.12 132.0,103.08 132.4,103.02 132.8,103.12 133.2,103.09 133.6,103.00 134.0,103.09 134.4,102.96 134.8,102.97 135.2,103.07 135.6,102.99 136.0,103.02 136.4,102.98 136.8,103.07 137.2,103.08 137.6,103.05 138.0,103.05 138.4,103.12 138.8,102.99 139.2,102.95 139.6,103.04 140.0,103.03 140.4,103.01 140.8,103.01 141.2,103.11 141.6,102.98 142.0,103.02 142.4,103.10 142.8,103.00 143.2,102.98 143.6,103.03 144.0,103.09 144.4,103.02 144.8,102.97 145.2,103.04 145.6,103.03 146.0,103.10 146.4,103.11 146.8,102.94 147.2,102.98 147.6,103.05 148.0,103.04 148.4,103.05 148.8,102.97 149.2,103.05 149.6,103.09 150.0,103.05 150.4,102.97 150.8,103.02 151.2,103.01 151.6,103.03 152.0,103.01 152.4,102.97 152.8,103.01 153.2,103.01 153.6,103.06 154.0,103.06 154.4,102.97 154.8,102.97 155.2,103.03 155.6,103.03 156.0,103.11 156.4,103.12 156.8,103.05 157.2,103.00 157.6,102.95 158.0,102.98 158.4,102.96 158.8,103.11 159.2,102.94 159.6,103.02 160.0,103.00 160.4,103.02 160.8,102.96 161.2,103.00 161.6,103.01 162.0,103.06 162.4,103.00 162.8,103.11 163.2,103.11 163.6,103.08 164.0,102.98 164.4,103.13 164.8,103.10 165.2,103.01 165.6,102.97 166.0,102.91 166.4,103.07 166.8,102.97 167.2,103.10 167.6,103.06 168.0,102.98 168.4,103.02 168.8,103.09 169.2,103.12 169.6,103.05 170.0,103.07 170.4,103.07 170.8,102.95 171.2,103.01 171.6,103.04 172.0,103.03 172.4,103.12 172.8,102.97 173.2,103.02 173.6,102.99 174.0,103.01 174.4,103.00 174.8,103.07 175.2,103.12 175.6,102.95 176.0,103.09 176.4,103.11 176.8,103.05 177.2,103.08 177.6,103.08 178.0,103.03 178.4,102.96 178.8,103.10 179.2,103.07 179.6,102.97 180.0,102.97 180.4,103.13 180.8,103.00 181.2,103.09 181.6,103.01 182.0,102.96 182.4,102.98 182.8,103.11 183.2,102.97 183.6,103.09 184.0,103.01 184.4,103.07 184.8,103.12 185.2,103.04 185.6,103.05 186.0,103.03 186.4,103.02 186.8,103.11 187.2,102.99 187.6,103.05 188.0,103.03 188.4,103.07 188.8,103.00 189.2,103.07 189.6,103.05 190.0,102.91 190.4,103.04 190.8,103.06 191.2,102.92 191.6,103.11 192.0,103.03 192.4,103.06 192.8,103.00 193.2,103.12 193.6,102.95 194.0,103.07 194.4,103.07 194.8,103.00 195.2,103.06 195.6,103.03 196.0,102.96 196.4,103.08 196.8,103.09 197.2,103.01 197.6,103.09 198.0,102.97 198.4,102.99 198.8,103.07 199.2,103.10 199.6,103.05 200.0,103.09 200.4,102.99 200.8,102.97 201.2,103.13 201.6,103.13 202.0,103.00 202.4,103.01 202.8,102.96 203.2,102.95 203.6,102.99 204.0,103.04 204.4,103.11 204.8,103.07 205.2,103.04 205.6,103.10 206.0,103.00 206.4,103.07 206.8,103.07 207.2,102.97 207.6,103.10 208.0,103.12 208.4,102.92 208.8,103.01 209.2,103.03 209.6,102.97 210.0,103.07 210.4,103.06 210.8,102.94 211.2,103.02 211.6,103.02 212.0,103.09 212.4,102.99 212.8,103.01 213.2,103.03 213.6,103.13 214.0,103.04 214.4,103.09 214.8,103.06 215.2,103.04 215.6,103.07 216.0,103.09 216.4,102.97 216.8,103.04 217.2,103.10 217.6,103.04 218.0,103.09 218.4,103.05 218.8,102.97 219.2,103.06 219.6,103.11 220.0,103.11 220.4,103.04 220.8,103.06 221.2,103.05 221.6,102.99 222.0,103.06 222.4,103.06 222.8,103.13 223.2,103.12 223.6,103.08 224.0,102.98 224.4,102.98 224.8,102.99 225.2,103.12 225.6,103.00 226.0,103.01 226.4,103.06 226.8,103.10 227.2,103.06 227.6,103.12 228.0,103.04 228.4,102.99 228.8,103.05 229.2,103.06 229.6,103.05 230.0,102.98 230.4,103.06 230.8,103.03 231.2,103.11 231.6,102.98 232.0,102.99 232.4,103.01 232.8,103.12 233.2,103.02 233.6,102.97 234.0,103.04 234.4,103.08 234.8,103.08 235.2,103.04 235.6,103.08 236.0,102.98 236.4,103.12 236.8,103.05 237.2,103.06 237.6,102.96 238.0,103.07 238.4,103.03 238.8,102.99 239.2,102.99 239.6,102.96 240.0,103.12 240.4,103.12 240.8,103.02 241.2,103.03 241.6,103.01 242.0,103.09 242.4,102.96 242.8,103.11 243.2,103.06 243.6,102.97 244.0,103.12 244.4,102.98 244.8,103.03 245.2,103.10 245.6,102.98 246.0,102.95 246.4,103.06 246.8,103.03 247.2,103.00 247.6,103.11 248.0,102.96 248.4,103.04 248.8,102.99 249.2,103.11 249.6,103.02 250.0,103.10 250.4,102.98 250.8,103.12 251.2,103.07 251.6,103.12 252.0,103.09 252.4,102.99 252.8,103.03 253.2,102.99 253.6,103.12 254.0,103.01 254.4,103.07 254.8,103.10 255.2,103.07 255.6,103.04 256.0,102.97 256.4,103.03 256.8,103.10 257.2,103.06 257.6,103.09 258.0,102.97 258.4,103.13 258.8,102.99 259.2,103.09 259.6,103.08 260.0,103.04 260.4,103.11 260.8,103.02 261.2,103.12 261.6,102.95 262.0,103.01 262.4,102.98 262.8,103.13 263.2,103.06 263.6,103.00 264.0,103.07 264.4,103.09 264.8,102.95 265.2,103.04 265.6,102.99 266.0,103.02 266.4,103.11 266.8,103.10 267.2,103.00 267.6,102.96 268.0,102.98 268.4,103.05 268.8,102.97 269.2,103.03 269.6,102.96 270.0,102.98 270.4,103.05 270.8,102.97 271.2,103.06 271.6,103.01 272.0,103.06 272.4,102.98 272.8,102.91 273.2,103.04 273.6,102.98 274.0,103.05 274.4,103.07 274.8,103.08 275.2,103.00 275.6,102.98 276.0,103.12 276.4,103.08 276.8,103.09 277.2,102.97 277.6,102.96 278.0,103.10 278.4,103.04 278.8,102.96 279.2,103.08 279.6,103.03 280.0,103.06 280.4,103.01 280.8,103.05 281.2,103.01 281.6,103.04 282.0,103.04 282.4,103.12 282.8,103.03 283.2,102.97 283.6,103.12 284.0,102.96 284.4,103.02 284.8,103.06 285.2,103.08 285.6,103.03 286.0,103.01 286.4,103.06 286.8,103.01 287.2,103.03 287.6,103.07 288.0,102.97 288.4,103.10 288.8,103.08 289.2,102.96 289.6,102.96 290.0,103.05 290.4,103.08 290.8,103.06 291.2,103.08 291.6,102.97 292.0,99.12 292.4,98.43 292.8,100.32 293.2,101.53 293.6,101.13 294.0,97.75 294.4,97.40 294.8,99.44 295.2,103.08 295.6,103.12 296.0,103.03 296.4,102.96 296.8,102.75 297.2,101.82 297.6,101.34 298.0,101.07 298.4,102.11 298.8,102.64 299.2,100.53 299.6,98.20 300.0,98.03 300.4,100.72 300.8,101.22 301.2,101.27 301.6,101.60 302.0,100.46 302.4,100.21 302.8,98.47 303.2,97.97 303.6,98.11 304.0,98.11 304.4,97.98 304.8,99.76 305.2,100.95 305.6,101.39 306.0,101.32 306.4,99.23 306.8,97.96 307.2,98.42 307.6,99.00 308.0,100.32 308.4,99.67 308.8,100.34 309.2,102.11 309.6,102.55 310.0,102.85 310.4,103.02 310.8,102.98 311.2,102.85 311.6,103.08 312.0,103.05 312.4,102.98 312.8,102.98 313.2,103.09 313.6,103.07 314.0,103.03 314.4,102.99 314.8,102.98 315.2,103.03 315.6,102.99 316.0,99.42 316.4,99.98 316.8,101.16 317.2,99.30 317.6,96.52 318.0,96.34 318.4,100.68 318.8,101.09 319.2,97.48 319.6,96.81 320.0,96.46 320.4,98.77 320.8,99.62 321.2,99.99 321.6,98.91 322.0,98.06 322.4,96.65 322.8,96.73 323.2,96.44 323.6,97.65 324.0,101.84 324.4,103.00 324.8,103.09 325.2,102.97 325.6,103.02 326.0,102.23 326.4,101.53 326.8,101.55 327.2,101.91 327.6,101.68 328.0,101.85 328.4,101.96 328.8,101.66 329.2,101.76 329.6,101.85 330.0,101.52 330.4,101.80 330.8,101.26 331.2,101.23 331.6,100.70 332.0,100.69 332.4,100.42 332.8,98.73 333.2,98.52 333.6,100.93 334.0,101.03 334.4,100.93 334.8,99.45 335.2,101.14 335.6,101.62 336.0,101.72 336.4,100.94 336.8,101.36 337.2,102.34 337.6,102.47 338.0,102.24 338.4,102.24 338.8,102.41 339.2,102.64 339.6,102.65 340.0,101.69 340.4,101.62 340.8,101.85 341.2,102.25 341.6,102.82 342.0,102.61 342.4,103.03 342.8,102.95 343.2,103.06 343.6,102.98 344.0,103.00 344.4,103.11 344.8,102.99 345.2,103.12 345.6,102.96 346.0,103.01 346.4,103.02 346.8,103.08 347.2,103.13 347.6,103.11 348.0,103.00 348.4,102.98 348.8,103.04 349.2,102.99 349.6,102.97 350.0,102.98 350.4,102.98 350.8,103.02 351.2,102.99 351.6,103.12 352.0,103.08 352.4,103.13 352.8,103.13 353.2,102.98 353.6,103.11 354.0,103.09 354.4,103.11 354.8,103.03 355.2,103.11 355.6,102.98 356.0,103.11 356.4,103.08 356.8,103.10 357.2,102.95 357.6,103.13 358.0,103.11 358.4,103.02 358.8,103.05 359.2,103.02 359.6,102.97 360.0,102.99 360.4,102.98 360.8,103.12 361.2,102.98 361.6,102.97 362.0,102.96 362.4,103.00 362.8,103.08 363.2,103.07 363.6,101.28 364.0,98.30 364.4,95.33 364.8,95.90 365.2,95.69 365.6,95.59 366.0,95.73 366.4,97.26 366.8,99.13 367.2,100.32 367.6,100.76 368.0,100.64 368.4,100.74 368.8,100.62 369.2,100.83 369.6,99.53 370.0,98.85 370.4,100.28 370.8,101.03 371.2,100.99 371.6,99.02 372.0,100.16 372.4,100.19 372.8,100.29 373.2,97.52 373.6,97.49 374.0,97.76 374.4,97.52 374.8,97.76 375.2,98.20 375.6,99.07 376.0,100.50 376.4,100.80 376.8,97.89 377.2,97.82 377.6,98.25 378.0,100.32 378.4,100.09 378.8,100.64 379.2,101.01 379.6,102.50 380.0,102.86 380.4,101.96 380.8,101.06 381.2,100.57 381.6,99.63 382.0,100.19 382.4,100.20 382.8,100.71 383.2,101.33 383.6,101.62 384.0,100.77 384.4,100.05 384.8,101.46 385.2,102.29 385.6,101.69 386.0,100.97 386.4,101.33 386.8,101.73 387.2,101.92 387.6,101.50 388.0,100.81 388.4,102.11 388.8,102.58 389.2,102.69 389.6,102.76 390.0,102.77 390.4,102.77 390.8,102.71 391.2,102.88 391.6,103.08 392.0,103.00 392.4,103.11 392.8,103.10 393.2,103.05 393.6,103.12 394.0,103.05 394.4,103.03 394.8,103.09 395.2,103.03 395.6,102.96 396.0,103.11 396.4,103.04 396.8,103.10 397.2,103.09 397.6,103.08 398.0,103.05 398.4,103.12 398.8,103.07 399.2,103.01 399.6,103.11 400.0,103.04 400.4,103.13 400.8,103.04 401.2,103.05 401.6,103.03 402.0,103.04 402.4,103.01 402.8,102.99 403.2,103.00 403.6,103.06 404.0,103.10 404.4,103.02 404.8,103.12 405.2,103.12 405.6,103.10 406.0,103.00 406.4,102.96 406.8,103.01 407.2,102.96 407.6,103.04 408.0,102.96 408.4,102.95 408.8,103.09 409.2,103.09 409.6,103.05 410.0,102.96 410.4,103.06 410.8,103.01 411.2,103.06 411.6,102.98 412.0,103.02 412.4,103.05 412.8,103.00 413.2,103.09 413.6,102.96 414.0,103.11 414.4,103.03 414.8,103.12 415.2,103.10 415.6,103.05 416.0,102.97 416.4,102.98 416.8,103.08 417.2,103.06 417.6,102.97 418.0,103.13 418.4,103.08 418.8,102.97 419.2,103.03 419.6,102.98 420.0,103.04 420.4,103.09 420.8,103.02 421.2,102.97 421.6,103.10 422.0,99.48 422.4,99.33 422.8,99.90 423.2,99.93 423.6,99.21 424.0,99.53 424.4,103.05 424.8,102.99 425.2,100.78 425.6,98.05 426.0,98.85 426.4,98.89 426.8,100.06 427.2,101.84 427.6,101.68 428.0,100.03 428.4,98.22 428.8,98.02 429.2,98.29 429.6,98.27 430.0,99.68 430.4,99.47 430.8,99.07 431.2,98.97 431.6,98.47 432.0,101.31 432.4,103.13 432.8,103.10 433.2,102.23 433.6,98.52 434.0,98.61 434.4,100.18 434.8,101.17 435.2,101.91 435.6,101.93 436.0,101.53 436.4,101.52 436.8,100.55 437.2,98.84 437.6,99.37 438.0,100.68 438.4,101.65 438.8,99.41 439.2,98.89 439.6,98.48 440.0,99.90 440.4,101.03 440.8,102.49 441.2,103.08 441.6,103.11 442.0,102.96 442.4,102.58 442.8,102.42 443.2,102.37 443.6,102.21 444.0,102.13 444.4,102.18 444.8,102.15 445.2,102.24 445.6,102.10 446.0,102.75 446.4,103.00 446.8,102.99 447.2,103.11 447.6,102.84 448.0,102.03 448.4,101.15 448.8,99.60 449.2,98.73 449.6,94.10 450.0,93.40 450.4,95.08 450.8,97.66 451.2,96.47 451.6,97.40 452.0,96.14 452.4,100.48 452.8,101.63 453.2,102.67 453.6,102.95 454.0,101.81 454.4,100.96 454.8,100.84 455.2,98.99 455.6,97.96 456.0,98.34 456.4,98.15 456.8,98.22 457.2,98.14 457.6,99.86 458.0,100.91 458.4,100.77 458.8,99.89 459.2,99.37 459.6,99.23 460.0,99.77 460.4,99.12 460.8,100.20 461.2,100.57 461.6,101.94 462.0,100.32 462.4,98.17 462.8,98.25 463.2,100.05 463.6,101.28 464.0,98.26 464.4,97.92 464.8,98.26 465.2,98.33 465.6,98.50 466.0,101.62 466.4,102.01 466.8,100.29 467.2,99.86 467.6,98.41 468.0,98.34 468.4,98.03 468.8,97.95 469.2,97.92 469.6,99.60 470.0,99.72 470.4,101.08 470.8,100.64 471.2,101.19 471.6,101.99 472.0,101.04 472.4,101.27 472.8,102.06 473.2,102.95 473.6,103.10 474.0,102.98 474.4,103.03 474.8,102.99 475.2,102.97 475.6,103.07 476.0,102.98 476.4,103.06 476.8,103.07 477.2,103.11 477.6,102.97 478.0,103.02 478.4,102.99 478.8,102.96 479.2,102.95 479.6,102.99 480.0,103.08 480.4,103.06 480.8,103.11 481.2,103.07 481.6,103.07 482.0,102.98 482.4,103.10 482.8,103.00 483.2,103.01 483.6,102.97 484.0,103.05 484.4,102.99 484.8,102.97 485.2,103.07 485.6,103.11 486.0,103.13 486.4,103.09 486.8,103.12 487.2,103.09 487.6,103.06 488.0,102.96 488.4,103.02 488.8,103.05 489.2,103.00 489.6,102.97 490.0,103.11 490.4,102.98 490.8,103.04 491.2,102.97 491.6,103.09 492.0,103.06 492.4,103.00 492.8,102.97 493.2,101.91 493.6,98.54 494.0,94.82 494.4,94.20 494.8,94.60 495.2,94.27 495.6,99.74 496.0,102.50 496.4,96.72 496.8,96.40 497.2,95.16 497.6,94.81 498.0,94.96 498.4,94.87 498.8,94.63 499.2,97.55 499.6,99.81 500.0,98.83 500.4,97.92 500.8,97.72 501.2,99.97 501.6,100.89 502.0,102.44 502.4,99.49 502.8,98.18 503.2,98.02 503.6,99.48 504.0,100.57 504.4,100.11 504.8,100.36 505.2,100.32 505.6,100.53 506.0,101.24 506.4,101.86 506.8,101.60 507.2,101.70 507.6,101.53 508.0,99.74 508.4,97.76 508.8,98.40 509.2,100.43 509.6,100.75 510.0,97.85 510.4,97.96 510.8,98.17 511.2,100.80 511.6,101.24 512.0,101.01 512.4,100.74 512.8,99.82 513.2,99.92 513.6,100.44 514.0,100.59 514.4,99.23 514.8,98.48 515.2,97.16 515.6,96.40 516.0,96.35 516.4,96.68 516.8,98.02 517.2,98.02 517.6,98.00 518.0,97.75 518.4,99.00 518.8,97.82 519.2,97.94 519.6,98.60 520.0,99.18 520.4,99.59 520.8,100.05 521.2,101.25 521.6,101.23 522.0,101.80 522.4,102.45 522.8,103.05 523.2,103.11 523.6,102.99 524.0,103.07 524.4,103.04 524.8,102.97 525.2,103.03 525.6,103.01 526.0,103.07 526.4,103.02 526.8,103.08 527.2,103.06 527.6,102.97 528.0,103.08 528.4,102.98 528.8,103.01 529.2,103.10 529.6,102.98 530.0,103.09 530.4,103.08 530.8,103.00 531.2,102.96 531.6,102.96 532.0,102.96 532.4,103.10 532.8,102.98 533.2,103.11 533.6,102.99 534.0,102.95 534.4,103.12 534.8,103.13 535.2,103.02 535.6,103.10 536.0,103.02 536.4,102.96 536.8,102.95 537.2,103.06 537.6,103.09 538.0,102.95 538.4,103.10 538.8,103.10 539.2,103.00 539.6,103.03 540.0,103.12 540.4,102.99 540.8,103.05 541.2,103.02 541.6,103.06 542.0,102.98 542.4,103.03 542.8,103.10 543.2,103.01 543.6,102.99 544.0,103.04 544.4,102.99 544.8,103.01 545.2,103.00 545.6,102.96 546.0,102.96 546.4,103.07 546.8,103.08 547.2,102.99 547.6,102.98 548.0,103.01 548.4,102.99 548.8,103.02 549.2,102.98 549.6,103.08 550.0,103.12 550.4,102.99 550.8,99.92 551.2,95.78 551.6,98.59 552.0,88.40 552.4,91.40 552.8,97.59 553.2,96.62 553.6,103.08 554.0,103.01 554.4,103.04 554.8,89.15 555.2,87.47 555.6,86.47 556.0,87.90 556.4,87.01 556.8,89.92 557.2,91.80 557.6,91.47 558.0,94.48 558.4,98.43 558.8,103.12 559.2,103.03 559.6,100.85 560.0,97.02 560.4,96.38 560.8,97.40 561.2,98.62 561.6,100.56 562.0,99.42 562.4,97.70 562.8,94.17 563.2,92.25 563.6,92.27 564.0,97.14 564.4,99.95 564.8,97.17 565.2,95.35 565.6,94.57 566.0,91.80 566.4,91.55 566.8,91.81 567.2,91.91 567.6,95.56 568.0,98.43 568.4,98.86 568.8,97.51 569.2,97.45 569.6,98.05 570.0,98.09 570.4,97.47 570.8,96.24 571.2,96.12 571.6,94.52 572.0,92.22 572.4,92.00 572.8,91.32 573.2,91.76 573.6,91.98 574.0,92.05 574.4,92.17 574.8,98.83 575.2,100.09 575.6,99.93 576.0,99.61 576.4,97.46 576.8,91.66 577.2,91.73 577.6,91.33 578.0,91.33 578.4,95.58 578.8,97.53 579.2,98.06 579.6,97.71 580.0,100.65 580.4,102.37 580.8,101.85 581.2,100.09 581.6,99.30 582.0,97.39 582.4,96.86 582.8,96.91 583.2,97.28 583.6,96.90 584.0,97.41 584.4,98.10 584.8,98.99 585.2,99.58 585.6,101.58 586.0,102.09 586.4,102.63 586.8,103.03 587.2,102.82 587.6,102.95 588.0,103.02 588.4,103.10 588.8,103.03 589.2,102.97 589.6,103.10 590.0,103.10 590.4,102.99 590.8,103.04 591.2,103.03 591.6,103.03 592.0,95.58 592.4,92.09 592.8,91.62 593.2,91.62 593.6,92.65 594.0,95.50 594.4,95.19 594.8,92.12 595.2,95.67 595.6,99.44 596.0,99.97 596.4,95.69 596.8,94.88 597.2,97.91 597.6,99.34 598.0,97.58 598.4,95.14 598.8,94.84 599.2,95.51 599.6,96.66 600.0,98.06 600.4,99.13 600.8,100.45 601.2,101.88 601.6,102.17 602.0,102.87 602.4,103.05 602.8,103.11 603.2,103.13 603.6,103.06 604.0,103.11 604.4,102.95 604.8,103.08 605.2,103.09 605.6,103.01 606.0,103.10 606.4,103.03 606.8,102.96 607.2,103.04 607.6,103.10 608.0,103.04 608.4,103.08 608.8,102.98 609.2,103.10 609.6,103.11 610.0,103.00 610.4,102.95 610.8,103.00 611.2,103.11 611.6,103.12 612.0,103.00 612.4,103.00 612.8,103.00 613.2,102.95 613.6,103.13 614.0,103.00 614.4,103.02 614.8,102.97 615.2,103.11 615.6,103.01 616.0,91.23 616.4,91.04 616.8,94.71 617.2,96.09 617.6,97.00 618.0,96.76 618.4,96.51 618.8,93.09 619.2,103.07 619.6,103.04 620.0,83.72 620.4,86.40 620.8,81.40 621.2,85.80 621.6,96.78 622.0,101.29 622.4,103.04 622.8,94.36 623.2,93.75 623.6,91.96 624.0,91.50 624.4,94.82 624.8,96.43 625.2,98.14 625.6,97.63 626.0,95.60 626.4,91.54 626.8,91.66 627.2,91.64 627.6,92.33 628.0,98.51 628.4,98.85 628.8,99.30 629.2,100.40 629.6,99.43 630.0,97.65 630.4,98.94 630.8,98.33 631.2,96.30 631.6,94.71 632.0,95.57 632.4,98.33 632.8,100.41 633.2,95.35 633.6,95.13 634.0,94.69 634.4,95.25 634.8,95.60 635.2,97.32 635.6,99.84 636.0,101.74 636.4,102.39 636.8,102.42 637.2,102.99 637.6,103.01 638.0,103.10 638.4,103.01 638.8,103.08 639.2,100.17 639.6,99.81 640.0,99.59 640.4,100.33 640.8,99.57 641.2,97.32 641.6,94.72 642.0,94.81 642.4,97.75 642.8,97.29 643.2,94.17 643.6,94.40 644.0,95.36 644.4,95.95 644.8,97.81 645.2,99.36 645.6,100.11 646.0,99.62 646.4,99.06 646.8,98.51 647.2,98.41 647.6,95.06 648.0,94.06 648.4,94.51 648.8,94.90 649.2,94.82 649.6,99.62 650.0,100.35 650.4,98.70 650.8,98.69 651.2,99.16 651.6,99.38 652.0,95.24 652.4,94.61 652.8,94.42 653.2,100.10 653.6,100.56 654.0,100.57 654.4,100.97 654.8,100.48 655.2,100.86 655.6,100.11 656.0,98.76 656.4,95.88 656.8,94.55 657.2,94.23 657.6,94.19 658.0,92.13 658.4,92.67 658.8,92.18 659.2,92.38 659.6,92.69 660.0,92.22 660.4,92.63 660.8,92.76 661.2,96.58 661.6,99.08 662.0,100.05 662.4,99.91 662.8,97.10 663.2,98.36 663.6,102.99 664.0,103.09 664.4,102.98 664.8,102.99 665.2,103.05 665.6,102.98 666.0,99.30 666.4,97.94 666.8,97.90 667.2,99.18 667.6,99.35 668.0,98.86 668.4,98.56 668.8,98.83 669.2,100.03 669.6,100.85 670.0,101.07 670.4,101.34 670.8,101.40 671.2,100.61 671.6,101.48 672.0,102.68 672.4,102.97 672.8,99.29 673.2,96.20 673.6,95.83 674.0,101.08 674.4,98.84 674.8,95.97 675.2,96.30 675.6,98.91 676.0,100.51 676.4,99.27 676.8,99.17 677.2,98.81 677.6,98.43 678.0,99.47 678.4,100.38 678.8,101.32 679.2,102.43 679.6,102.97 680.0,103.09 680.4,103.00 680.8,103.06 681.2,103.10 681.6,103.05 682.0,102.99 682.4,103.00 682.8,102.98 683.2,103.08 683.6,103.04 684.0,103.03 684.4,103.05 684.8,102.99 685.2,100.66 685.6,96.44 686.0,96.31 686.4,100.40 686.8,101.08 687.2,99.82 687.6,98.50 688.0,97.61 688.4,96.11 688.8,96.30 689.2,95.79 689.6,96.60 690.0,100.27 690.4,101.32 690.8,101.35 691.2,101.07 691.6,100.97 692.0,101.51 692.4,97.39 692.8,93.40 693.2,89.49 693.6,89.90 694.0,92.60 694.4,91.77 694.8,89.03 695.2,89.69 695.6,88.91 696.0,99.01 696.4,103.12 696.8,103.11 697.2,103.11 697.6,103.08 698.0,103.05 698.4,102.99 698.8,103.11 699.2,103.13 699.6,103.11 700.0,102.99 700.4,103.09 700.8,102.99 701.2,102.96 701.6,103.07 702.0,102.96 702.4,103.05 702.8,102.99 703.2,103.04 703.6,103.06 704.0,103.06 704.4,103.03 704.8,103.03 705.2,103.03 705.6,103.12 706.0,102.97 706.4,103.13 706.8,103.02 707.2,103.05 707.6,101.34 708.0,100.75 708.4,100.91 708.8,100.35 709.2,99.95 709.6,98.79 710.0,98.23 710.4,96.24 710.8,95.16 711.2,94.75 711.6,94.82 712.0,94.65 712.4,94.82 712.8,98.96 713.2,98.99 713.6,100.18 714.0,99.60 714.4,98.37 714.8,98.34 715.2,97.70 715.6,96.16 716.0,94.80 716.4,95.31 716.8,95.55 717.2,100.42 717.6,98.43 718.0,95.28 718.4,95.06 718.8,94.68 719.2,94.95 719.6,95.37 720.0,94.67 720.4,94.93 720.8,95.35 721.2,95.31 721.6,94.83 722.0,96.38 722.4,98.29 722.8,99.56 723.2,99.70 723.6,99.56 724.0,99.49 724.4,98.81 724.8,97.95 725.2,95.36 725.6,94.12 726.0,98.49 726.4,99.51 726.8,100.08 727.2,98.89 727.6,92.90 728.0,92.40 728.4,93.35 728.8,98.11 729.2,98.63 729.6,100.28 730.0,101.16 730.4,100.98 730.8,100.84 731.2,99.85 731.6,97.11 732.0,96.23 732.4,98.01 732.8,97.56 733.2,95.24 733.6,94.88 734.0,94.95 734.4,94.71 734.8,95.19 735.2,95.24 735.6,94.83 736.0,98.46 736.4,99.84 736.8,100.41 737.2,101.12 737.6,100.91 738.0,100.90 738.4,99.30 738.8,97.43 739.2,96.39 739.6,95.95 740.0,97.22 740.4,99.61 740.8,100.37 741.2,100.48 741.6,100.94 742.0,100.98 742.4,100.13 742.8,99.83 743.2,98.03 743.6,98.07 744.0,98.99 744.4,99.15 744.8,99.51 745.2,99.70 745.6,100.09 746.0,100.53 746.4,101.09 746.8,101.66 747.2,102.07 747.6,102.84 748.0,103.01 748.4,103.09 748.8,103.13 749.2,103.00 749.6,103.04 750.0,103.08 750.4,103.06 750.8,102.97 751.2,102.98 751.6,103.00 752.0,103.00 752.4,102.98 752.8,103.03 753.2,103.06 753.6,103.00 754.0,102.99 754.4,103.02 754.8,102.98 755.2,103.07 755.6,103.06 756.0,103.07 756.4,102.96 756.8,103.01 757.2,102.99 757.6,103.05 758.0,103.07 758.4,103.02 758.8,103.09 759.2,102.97 759.6,103.11 760.0,103.07 760.4,102.95 760.8,102.99 761.2,103.10 761.6,103.10 762.0,103.05 762.4,103.04 762.8,102.96 763.2,102.98 763.6,103.02 764.0,103.08 764.4,103.06 764.8,103.04 765.2,103.02 765.6,103.09 766.0,103.13 766.4,103.12 766.8,102.98 767.2,102.96 767.6,103.02 768.0,103.13 768.0,103.74 767.6,103.77 767.2,103.82 766.8,103.80 766.4,103.75 766.0,103.69 765.6,103.73 765.2,103.85 764.8,103.73 764.4,103.79 764.0,103.76 763.6,103.71 763.2,103.81 762.8,103.74 762.4,103.74 762.0,103.67 761.6,103.68 761.2,103.84 760.8,103.78 760.4,103.75 760.0,103.84 759.6,103.76 759.2,103.69 758.8,103.79 758.4,103.82 758.0,103.69 757.6,103.81 757.2,103.75 756.8,103.84 756.4,103.79 756.0,103.80 755.6,103.69 755.2,103.84 754.8,103.77 754.4,103.84 754.0,103.78 753.6,103.77 753.2,103.70 752.8,103.72 752.4,103.70 752.0,103.77 751.6,103.82 751.2,103.67 750.8,103.69 750.4,103.85 750.0,103.84 749.6,103.71 749.2,103.77 748.8,103.69 748.4,103.72 748.0,104.25 747.6,104.02 747.2,104.72 746.8,106.88 746.4,107.61 746.0,108.31 745.6,109.07 745.2,109.75 744.8,110.44 744.4,111.31 744.0,112.25 743.6,111.82 743.2,113.16 742.8,112.30 742.4,109.26 742.0,109.61 741.6,108.34 741.2,108.11 740.8,108.98 740.4,109.00 740.0,112.63 739.6,114.58 739.2,114.45 738.8,113.56 738.4,112.16 738.0,108.43 737.6,107.22 737.2,107.90 736.8,106.62 736.4,108.19 736.0,108.26 735.6,111.35 735.2,115.96 734.8,116.14 734.4,115.61 734.0,115.50 733.6,116.37 733.2,116.60 732.8,116.13 732.4,109.54 732.0,112.38 731.6,115.31 731.2,113.60 730.8,107.54 730.4,106.98 730.0,106.56 729.6,107.12 729.2,107.49 728.8,109.01 728.4,112.40 728.0,117.49 727.6,116.40 727.2,111.19 726.8,109.15 726.4,107.39 726.0,107.85 725.6,112.49 725.2,116.29 724.8,116.41 724.4,110.48 724.0,111.19 723.6,110.03 723.2,108.93 722.8,109.29 722.4,108.87 722.0,111.01 721.6,113.09 721.2,115.40 720.8,116.51 720.4,116.25 720.0,115.76 719.6,115.93 719.2,115.90 718.8,115.69 718.4,116.53 718.0,116.02 717.6,114.38 717.2,108.66 716.8,110.45 716.4,115.45 716.0,115.73 715.6,115.73 715.2,113.32 714.8,113.74 714.4,111.49 714.0,111.94 713.6,109.17 713.2,109.02 712.8,110.17 712.4,111.09 712.0,115.43 711.6,115.48 711.2,115.54 710.8,116.06 710.4,116.35 710.0,113.96 709.6,111.28 709.2,109.00 708.8,107.68 708.4,107.58 708.0,105.46 707.6,105.73 707.2,103.69 706.8,103.82 706.4,103.78 706.0,103.85 705.6,103.74 705.2,103.83 704.8,103.71 704.4,103.75 704.0,103.79 703.6,103.83 703.2,103.70 702.8,103.82 702.4,103.75 702.0,103.76 701.6,103.68 701.2,103.74 700.8,103.74 700.4,103.68 700.0,103.85 699.6,103.80 699.2,103.73 698.8,103.71 698.4,103.80 698.0,103.74 697.6,103.72 697.2,103.76 696.8,103.72 696.4,103.71 696.0,107.40 695.6,118.05 695.2,118.70 694.8,118.90 694.4,117.99 694.0,113.08 693.6,115.40 693.2,117.63 692.8,117.40 692.4,116.77 692.0,106.48 691.6,105.87 691.2,105.64 690.8,106.09 690.4,106.13 690.0,105.81 689.6,108.33 689.2,112.75 688.8,112.60 688.4,112.86 688.0,112.49 687.6,111.67 687.2,108.94 686.8,107.05 686.4,106.42 686.0,110.27 685.6,112.37 685.2,107.55 684.8,103.72 684.4,103.67 684.0,103.71 683.6,103.74 683.2,103.78 682.8,103.69 682.4,103.73 682.0,103.71 681.6,103.76 681.2,103.84 680.8,103.76 680.4,103.79 680.0,103.73 679.6,103.73 679.2,104.36 678.8,105.39 678.4,107.12 678.0,108.52 677.6,109.34 677.2,110.82 676.8,109.98 676.4,107.90 676.0,106.98 675.6,107.30 675.2,111.57 674.8,112.63 674.4,112.37 674.0,106.38 673.6,107.70 673.2,112.69 672.8,108.56 672.4,103.85 672.0,104.54 671.6,106.53 671.2,108.13 670.8,108.24 670.4,106.28 670.0,106.24 669.6,108.01 669.2,108.43 668.8,109.31 668.4,109.63 668.0,108.92 667.6,111.20 667.2,111.28 666.8,111.03 666.4,112.43 666.0,110.19 665.6,103.79 665.2,103.84 664.8,103.74 664.4,103.77 664.0,103.75 663.6,103.77 663.2,110.27 662.8,115.68 662.4,109.15 662.0,107.99 661.6,109.10 661.2,110.25 660.8,116.74 660.4,117.24 660.0,117.30 659.6,116.62 659.2,117.01 658.8,117.28 658.4,117.65 658.0,116.44 657.6,115.33 657.2,115.43 656.8,115.17 656.4,115.41 656.0,111.96 655.6,109.65 655.2,108.09 654.8,106.74 654.4,106.70 654.0,106.94 653.6,106.63 653.2,108.17 652.8,110.18 652.4,115.61 652.0,115.31 651.6,109.73 651.2,108.12 650.8,109.72 650.4,111.94 650.0,109.42 649.6,107.61 649.2,110.33 648.8,115.01 648.4,115.14 648.0,115.00 647.6,115.37 647.2,111.93 646.8,111.90 646.4,109.80 646.0,108.87 645.6,107.76 645.2,107.27 644.8,108.47 644.4,110.66 644.0,113.97 643.6,115.33 643.2,115.18 642.8,114.39 642.4,108.59 642.0,111.04 641.6,115.26 641.2,114.41 640.8,110.08 640.4,108.03 640.0,108.08 639.6,107.31 639.2,107.11 638.8,103.71 638.4,103.78 638.0,103.67 637.6,103.78 637.2,103.73 636.8,105.14 636.4,106.07 636.0,105.30 635.6,107.79 635.2,110.69 634.8,112.44 634.4,116.33 634.0,115.91 633.6,116.42 633.2,116.42 632.8,110.83 632.4,107.74 632.0,111.02 631.6,115.93 631.2,116.42 630.8,112.11 630.4,109.72 630.0,110.91 629.6,112.34 629.2,108.51 628.8,108.35 628.4,108.89 628.0,110.91 627.6,113.42 627.2,118.81 626.8,119.35 626.4,119.38 626.0,117.67 625.6,114.06 625.2,110.04 624.8,111.31 624.4,112.43 624.0,115.22 623.6,119.46 623.2,118.03 622.8,115.01 622.4,103.71 622.0,105.74 621.6,109.04 621.2,115.40 620.8,118.40 620.4,120.40 620.0,118.84 619.6,103.78 619.2,103.74 618.8,115.87 618.4,115.73 618.0,112.35 617.6,112.29 617.2,111.88 616.8,113.59 616.4,117.84 616.0,115.62 615.6,103.67 615.2,103.74 614.8,103.80 614.4,103.70 614.0,103.83 613.6,103.69 613.2,103.75 612.8,103.72 612.4,103.74 612.0,103.73 611.6,103.77 611.2,103.73 610.8,103.81 610.4,103.68 610.0,103.77 609.6,103.79 609.2,103.76 608.8,103.76 608.4,103.84 608.0,103.82 607.6,103.79 607.2,103.76 606.8,103.69 606.4,103.85 606.0,103.68 605.6,103.75 605.2,103.74 604.8,103.79 604.4,103.73 604.0,103.79 603.6,103.71 603.2,103.71 602.8,103.83 602.4,103.79 602.0,104.04 601.6,105.34 601.2,106.44 600.8,107.01 600.4,107.92 600.0,108.88 599.6,113.35 599.2,113.89 598.8,115.91 598.4,116.49 598.0,115.77 597.6,110.15 597.2,109.09 596.8,114.29 596.4,113.24 596.0,111.12 595.6,106.91 595.2,109.43 594.8,113.66 594.4,115.21 594.0,114.22 593.6,112.84 593.2,115.24 592.8,117.47 592.4,117.38 592.0,113.45 591.6,103.67 591.2,103.74 590.8,103.77 590.4,103.70 590.0,103.78 589.6,103.70 589.2,103.72 588.8,103.73 588.4,103.80 588.0,103.79 587.6,103.85 587.2,104.17 586.8,103.88 586.4,104.08 586.0,104.41 585.6,105.24 585.2,107.73 584.8,108.87 584.4,109.38 584.0,109.96 583.6,110.47 583.2,110.53 582.8,110.41 582.4,110.81 582.0,110.69 581.6,110.80 581.2,108.67 580.8,106.10 580.4,104.64 580.0,105.38 579.6,108.85 579.2,112.57 578.8,112.11 578.4,112.94 578.0,115.97 577.6,117.23 577.2,117.31 576.8,117.39 576.4,118.06 576.0,108.89 575.6,107.21 575.2,108.01 574.8,107.56 574.4,111.27 574.0,116.94 573.6,117.64 573.2,118.21 572.8,117.09 572.4,118.20 572.0,118.10 571.6,117.70 571.2,113.19 570.8,111.83 570.4,112.02 570.0,110.33 569.6,109.88 569.2,108.87 568.8,110.86 568.4,109.76 568.0,109.90 567.6,109.75 567.2,112.97 566.8,118.05 566.4,117.75 566.0,118.21 565.6,118.12 565.2,116.51 564.8,114.81 564.4,110.77 564.0,107.83 563.6,113.33 563.2,118.00 562.8,117.15 562.4,110.62 562.0,109.94 561.6,107.86 561.2,108.26 560.8,108.51 560.4,109.73 560.0,110.60 559.6,107.01 559.2,103.80 558.8,103.85 558.4,111.34 558.0,117.48 557.6,115.58 557.2,115.25 556.8,115.51 556.4,122.17 556.0,121.40 555.6,123.64 555.2,122.59 554.8,121.14 554.4,103.80 554.0,103.69 553.6,103.80 553.2,111.97 552.8,112.19 552.4,116.20 552.0,119.40 551.6,109.91 551.2,109.54 550.8,106.67 550.4,103.70 550.0,103.84 549.6,103.84 549.2,103.76 548.8,103.70 548.4,103.72 548.0,103.73 547.6,103.85 547.2,103.81 546.8,103.83 546.4,103.74 546.0,103.78 545.6,103.84 545.2,103.74 544.8,103.77 544.4,103.74 544.0,103.67 543.6,103.81 543.2,103.67 542.8,103.74 542.4,103.70 542.0,103.83 541.6,103.84 541.2,103.73 540.8,103.83 540.4,103.77 540.0,103.75 539.6,103.79 539.2,103.68 538.8,103.73 538.4,103.70 538.0,103.80 537.6,103.85 537.2,103.72 536.8,103.75 536.4,103.73 536.0,103.79 535.6,103.70 535.2,103.69 534.8,103.80 534.4,103.69 534.0,103.68 533.6,103.78 533.2,103.83 532.8,103.74 532.4,103.80 532.0,103.75 531.6,103.69 531.2,103.77 530.8,103.83 530.4,103.80 530.0,103.68 529.6,103.70 529.2,103.68 528.8,103.67 528.4,103.70 528.0,103.73 527.6,103.77 527.2,103.74 526.8,103.74 526.4,103.81 526.0,103.74 525.6,103.76 525.2,103.84 524.8,103.73 524.4,103.74 524.0,103.76 523.6,103.67 523.2,103.83 522.8,103.87 522.4,103.97 522.0,105.40 521.6,106.68 521.2,107.63 520.8,107.02 520.4,109.30 520.0,110.05 519.6,110.81 519.2,112.03 518.8,111.68 518.4,112.08 518.0,111.86 517.6,111.52 517.2,111.95 516.8,111.74 516.4,111.72 516.0,111.96 515.6,110.40 515.2,111.87 514.8,109.70 514.4,108.13 514.0,107.05 513.6,106.24 513.2,107.61 512.8,108.90 512.4,108.31 512.0,107.57 511.6,106.72 511.2,106.75 510.8,107.17 510.4,111.91 510.0,111.51 509.6,112.04 509.2,106.89 508.8,110.09 508.4,112.14 508.0,111.62 507.6,107.43 507.2,106.23 506.8,105.63 506.4,105.91 506.0,106.36 505.6,106.89 505.2,108.06 504.8,107.79 504.4,108.70 504.0,108.15 503.6,107.85 503.2,109.67 502.8,111.36 502.4,109.21 502.0,104.98 501.6,107.32 501.2,110.11 500.8,109.90 500.4,110.10 500.0,110.93 499.6,110.49 499.2,109.81 498.8,115.90 498.4,115.06 498.0,115.48 497.6,115.11 497.2,115.28 496.8,114.90 496.4,114.69 496.0,105.28 495.6,106.26 495.2,109.83 494.8,111.58 494.4,112.03 494.0,111.82 493.6,111.37 493.2,105.11 492.8,103.68 492.4,103.69 492.0,103.84 491.6,103.74 491.2,103.79 490.8,103.74 490.4,103.76 490.0,103.78 489.6,103.77 489.2,103.73 488.8,103.83 488.4,103.83 488.0,103.73 487.6,103.81 487.2,103.75 486.8,103.80 486.4,103.68 486.0,103.81 485.6,103.73 485.2,103.71 484.8,103.71 484.4,103.81 484.0,103.73 483.6,103.77 483.2,103.68 482.8,103.79 482.4,103.84 482.0,103.83 481.6,103.82 481.2,103.82 480.8,103.77 480.4,103.82 480.0,103.79 479.6,103.82 479.2,103.80 478.8,103.81 478.4,103.71 478.0,103.83 477.6,103.74 477.2,103.71 476.8,103.74 476.4,103.74 476.0,103.72 475.6,103.82 475.2,103.84 474.8,103.78 474.4,103.67 474.0,103.83 473.6,103.75 473.2,103.99 472.8,104.68 472.4,107.05 472.0,108.50 471.6,106.65 471.2,106.25 470.8,106.53 470.4,106.82 470.0,108.43 469.6,109.03 469.2,111.54 468.8,111.78 468.4,112.11 468.0,111.61 467.6,112.18 467.2,110.01 466.8,109.09 466.4,106.66 466.0,106.04 465.6,107.00 465.2,111.49 464.8,112.01 464.4,111.44 464.0,111.48 463.6,108.69 463.2,106.98 462.8,109.06 462.4,111.90 462.0,110.87 461.6,107.14 461.2,106.24 460.8,108.38 460.4,109.60 460.0,110.23 459.6,109.06 459.2,110.10 458.8,109.56 458.4,109.46 458.0,107.60 457.6,107.34 457.2,111.78 456.8,111.97 456.4,111.82 456.0,111.31 455.6,111.77 455.2,112.15 454.8,110.46 454.4,106.97 454.0,105.82 453.6,104.18 453.2,104.32 452.8,105.65 452.4,107.04 452.0,113.80 451.6,116.40 451.2,112.44 450.8,110.84 450.4,111.74 450.0,109.40 449.6,116.30 449.2,112.53 448.8,108.71 448.4,107.32 448.0,105.51 447.6,104.05 447.2,103.79 446.8,103.71 446.4,103.81 446.0,103.93 445.6,104.45 445.2,104.70 444.8,104.69 444.4,104.68 444.0,104.61 443.6,104.71 443.2,104.66 442.8,104.46 442.4,104.06 442.0,103.99 441.6,103.70 441.2,103.68 440.8,104.42 440.4,106.14 440.0,107.84 439.6,109.54 439.2,109.06 438.8,109.55 438.4,106.73 438.0,105.31 437.6,106.96 437.2,109.04 436.8,109.12 436.4,105.84 436.0,105.95 435.6,105.54 435.2,105.40 434.8,105.46 434.4,105.71 434.0,107.98 433.6,109.36 433.2,106.00 432.8,103.74 432.4,103.79 432.0,105.61 431.6,109.26 431.2,108.72 430.8,109.33 430.4,107.64 430.0,108.06 429.6,108.06 429.2,109.53 428.8,109.48 428.4,109.80 428.0,109.84 427.6,106.89 427.2,105.09 426.8,106.45 426.4,107.56 426.0,109.51 425.6,109.79 425.2,106.60 424.8,103.67 424.4,103.79 424.0,108.18 423.6,107.73 423.2,108.24 422.8,107.47 422.4,108.75 422.0,108.16 421.6,103.68 421.2,103.84 420.8,103.81 420.4,103.79 420.0,103.69 419.6,103.79 419.2,103.82 418.8,103.75 418.4,103.84 418.0,103.72 417.6,103.69 417.2,103.68 416.8,103.84 416.4,103.84 416.0,103.79 415.6,103.74 415.2,103.78 414.8,103.71 414.4,103.83 414.0,103.76 413.6,103.70 413.2,103.69 412.8,103.69 412.4,103.77 412.0,103.72 411.6,103.67 411.2,103.70 410.8,103.67 410.4,103.73 410.0,103.73 409.6,103.71 409.2,103.85 408.8,103.82 408.4,103.78 408.0,103.76 407.6,103.76 407.2,103.71 406.8,103.67 406.4,103.74 406.0,103.77 405.6,103.70 405.2,103.75 404.8,103.71 404.4,103.83 404.0,103.71 403.6,103.83 403.2,103.82 402.8,103.84 402.4,103.70 402.0,103.78 401.6,103.71 401.2,103.80 400.8,103.67 400.4,103.79 400.0,103.70 399.6,103.85 399.2,103.74 398.8,103.71 398.4,103.75 398.0,103.80 397.6,103.84 397.2,103.68 396.8,103.83 396.4,103.71 396.0,103.84 395.6,103.82 395.2,103.83 394.8,103.80 394.4,103.68 394.0,103.84 393.6,103.74 393.2,103.69 392.8,103.71 392.4,103.76 392.0,103.69 391.6,103.96 391.2,103.93 390.8,104.16 390.4,104.65 390.0,104.74 389.6,104.45 389.2,104.49 388.8,104.56 388.4,105.04 388.0,105.78 387.6,106.86 387.2,106.40 386.8,105.33 386.4,105.44 386.0,106.22 385.6,105.82 385.2,105.06 384.8,105.14 384.4,107.10 384.0,109.51 383.6,106.77 383.2,106.24 382.8,106.87 382.4,109.02 382.0,107.67 381.6,108.68 381.2,108.87 380.8,108.24 380.4,106.48 380.0,104.00 379.6,104.87 379.2,106.29 378.8,107.69 378.4,107.73 378.0,107.61 377.6,109.07 377.2,112.00 376.8,112.21 376.4,110.76 376.0,107.08 375.6,108.32 375.2,110.66 374.8,112.72 374.4,112.08 374.0,111.92 373.6,112.11 373.2,112.53 372.8,112.48 372.4,107.05 372.0,108.31 371.6,108.23 371.2,108.46 370.8,106.50 370.4,106.89 370.0,108.12 369.6,109.71 369.2,108.72 368.8,108.44 368.4,107.35 368.0,107.01 367.6,106.74 367.2,107.94 366.8,108.24 366.4,110.13 366.0,112.65 365.6,110.41 365.2,110.57 364.8,108.40 364.4,110.99 364.0,111.05 363.6,106.76 363.2,103.69 362.8,103.73 362.4,103.72 362.0,103.75 361.6,103.70 361.2,103.75 360.8,103.79 360.4,103.80 360.0,103.83 359.6,103.80 359.2,103.79 358.8,103.74 358.4,103.76 358.0,103.79 357.6,103.68 357.2,103.81 356.8,103.78 356.4,103.81 356.0,103.74 355.6,103.82 355.2,103.80 354.8,103.73 354.4,103.85 354.0,103.75 353.6,103.79 353.2,103.75 352.8,103.82 352.4,103.80 352.0,103.74 351.6,103.77 351.2,103.68 350.8,103.78 350.4,103.76 350.0,103.77 349.6,103.67 349.2,103.83 348.8,103.69 348.4,103.70 348.0,103.70 347.6,103.85 347.2,103.81 346.8,103.70 346.4,103.84 346.0,103.84 345.6,103.71 345.2,103.71 344.8,103.68 344.4,103.85 344.0,103.68 343.6,103.78 343.2,103.81 342.8,103.74 342.4,103.95 342.0,103.92 341.6,103.91 341.2,104.61 340.8,104.99 340.4,105.84 340.0,106.11 339.6,105.96 339.2,104.40 338.8,104.51 338.4,104.92 338.0,104.98 337.6,104.65 337.2,104.97 336.8,105.11 336.4,106.37 336.0,106.37 335.6,105.41 335.2,106.38 334.8,107.48 334.4,108.61 334.0,106.84 333.6,106.12 333.2,107.64 332.8,109.89 332.4,109.84 332.0,107.42 331.6,106.76 331.2,106.03 330.8,106.21 330.4,106.16 330.0,105.53 329.6,105.48 329.2,105.49 328.8,105.30 328.4,105.32 328.0,105.29 327.6,105.68 327.2,105.34 326.8,105.41 326.4,105.76 326.0,104.52 325.6,103.72 325.2,103.80 324.8,103.67 324.4,103.68 324.0,104.76 323.6,107.07 323.2,110.53 322.8,110.26 322.4,110.03 322.0,108.61 321.6,108.48 321.2,106.81 320.8,107.08 320.4,107.62 320.0,108.70 319.6,110.20 319.2,110.21 318.8,109.36 318.4,105.80 318.0,107.39 317.6,110.05 317.2,110.23 316.8,106.47 316.4,105.75 316.0,106.57 315.6,103.68 315.2,103.68 314.8,103.82 314.4,103.71 314.0,103.71 313.6,103.73 313.2,103.78 312.8,103.69 312.4,103.68 312.0,103.77 311.6,103.68 311.2,104.04 310.8,104.43 310.4,104.23 310.0,104.32 309.6,104.59 309.2,104.86 308.8,106.53 308.4,108.72 308.0,109.52 307.6,108.80 307.2,110.87 306.8,111.00 306.4,111.39 306.0,107.74 305.6,106.56 305.2,106.87 304.8,106.48 304.4,110.26 304.0,111.11 303.6,111.20 303.2,111.40 302.8,111.28 302.4,108.75 302.0,107.66 301.6,106.93 301.2,106.05 300.8,106.09 300.4,107.37 300.0,108.23 299.6,111.61 299.2,110.98 298.8,104.80 298.4,104.80 298.0,105.09 297.6,105.70 297.2,105.57 296.8,103.93 296.4,103.72 296.0,103.73 295.6,103.82 295.2,103.81 294.8,107.12 294.4,108.66 294.0,108.58 293.6,108.24 293.2,105.02 292.8,105.63 292.4,106.90 292.0,106.73 291.6,103.75 291.2,103.71 290.8,103.84 290.4,103.74 290.0,103.69 289.6,103.71 289.2,103.70 288.8,103.74 288.4,103.73 288.0,103.70 287.6,103.70 287.2,103.82 286.8,103.72 286.4,103.84 286.0,103.81 285.6,103.75 285.2,103.81 284.8,103.80 284.4,103.77 284.0,103.83 283.6,103.73 283.2,103.80 282.8,103.75 282.4,103.82 282.0,103.74 281.6,103.79 281.2,103.78 280.8,103.84 280.4,103.68 280.0,103.84 279.6,103.83 279.2,103.73 278.8,103.75 278.4,103.67 278.0,103.82 277.6,103.76 277.2,103.74 276.8,103.83 276.4,103.84 276.0,103.82 275.6,103.69 275.2,103.75 274.8,103.69 274.4,103.82 274.0,103.73 273.6,103.75 273.2,103.67 272.8,103.89 272.4,103.73 272.0,103.69 271.6,103.84 271.2,103.81 270.8,103.79 270.4,103.71 270.0,103.71 269.6,103.81 269.2,103.84 268.8,103.72 268.4,103.82 268.0,103.81 267.6,103.83 267.2,103.69 266.8,103.84 266.4,103.80 266.0,103.82 265.6,103.78 265.2,103.81 264.8,103.81 264.4,103.73 264.0,103.70 263.6,103.79 263.2,103.69 262.8,103.84 262.4,103.75 262.0,103.82 261.6,103.68 261.2,103.71 260.8,103.81 260.4,103.77 260.0,103.72 259.6,103.68 259.2,103.81 258.8,103.77 258.4,103.84 258.0,103.76 257.6,103.69 257.2,103.71 256.8,103.77 256.4,103.69 256.0,103.69 255.6,103.70 255.2,103.82 254.8,103.70 254.4,103.74 254.0,103.69 253.6,103.76 253.2,103.78 252.8,103.69 252.4,103.72 252.0,103.80 251.6,103.73 251.2,103.84 250.8,103.78 250.4,103.71 250.0,103.72 249.6,103.77 249.2,103.76 248.8,103.76 248.4,103.72 248.0,103.85 247.6,103.82 247.2,103.75 246.8,103.69 246.4,103.79 246.0,103.74 245.6,103.70 245.2,103.83 244.8,103.73 244.4,103.72 244.0,103.80 243.6,103.79 243.2,103.79 242.8,103.81 242.4,103.71 242.0,103.82 241.6,103.79 241.2,103.81 240.8,103.70 240.4,103.83 240.0,103.75 239.6,103.75 239.2,103.78 238.8,103.72 238.4,103.73 238.0,103.77 237.6,103.77 237.2,103.81 236.8,103.76 236.4,103.77 236.0,103.72 235.6,103.83 235.2,103.75 234.8,103.82 234.4,103.72 234.0,103.67 233.6,103.70 233.2,103.85 232.8,103.79 232.4,103.80 232.0,103.77 231.6,103.69 231.2,103.71 230.8,103.81 230.4,103.68 230.0,103.79 229.6,103.76 229.2,103.76 228.8,103.75 228.4,103.67 228.0,103.76 227.6,103.81 227.2,103.79 226.8,103.84 226.4,103.77 226.0,103.82 225.6,103.72 225.2,103.75 224.8,103.78 224.4,103.71 224.0,103.69 223.6,103.73 223.2,103.70 222.8,103.71 222.4,103.73 222.0,103.76 221.6,103.70 221.2,103.76 220.8,103.85 220.4,103.75 220.0,103.73 219.6,103.70 219.2,103.82 218.8,103.83 218.4,103.79 218.0,103.70 217.6,103.76 217.2,103.84 216.8,103.76 216.4,103.76 216.0,103.78 215.6,103.78 215.2,103.78 214.8,103.80 214.4,103.78 214.0,103.78 213.6,103.80 213.2,103.73 212.8,103.73 212.4,103.83 212.0,103.69 211.6,103.74 211.2,103.84 210.8,103.89 210.4,103.74 210.0,103.75 209.6,103.80 209.2,103.79 208.8,103.79 208.4,103.87 208.0,103.76 207.6,103.72 207.2,103.80 206.8,103.71 206.4,103.76 206.0,103.76 205.6,103.79 205.2,103.69 204.8,103.83 204.4,103.67 204.0,103.71 203.6,103.79 203.2,103.68 202.8,103.80 202.4,103.69 202.0,103.69 201.6,103.83 201.2,103.69 200.8,103.85 200.4,103.83 200.0,103.83 199.6,103.77 199.2,103.79 198.8,103.76 198.4,103.82 198.0,103.83 197.6,103.77 197.2,103.72 196.8,103.71 196.4,103.72 196.0,103.78 195.6,103.74 195.2,103.83 194.8,103.68 194.4,103.83 194.0,103.81 193.6,103.76 193.2,103.81 192.8,103.84 192.4,103.70 192.0,103.70 191.6,103.68 191.2,103.85 190.8,103.85 190.4,103.79 190.0,103.86 189.6,103.72 189.2,103.81 188.8,103.81 188.4,103.80 188.0,103.79 187.6,103.77 187.2,103.69 186.8,103.70 186.4,103.80 186.0,103.85 185.6,103.67 185.2,103.78 184.8,103.78 184.4,103.68 184.0,103.74 183.6,103.73 183.2,103.79 182.8,103.70 182.4,103.83 182.0,103.78 181.6,103.71 181.2,103.78 180.8,103.71 180.4,103.70 180.0,103.72 179.6,103.68 179.2,103.81 178.8,103.77 178.4,103.78 178.0,103.84 177.6,103.73 177.2,103.70 176.8,103.75 176.4,103.67 176.0,103.71 175.6,103.76 175.2,103.73 174.8,103.77 174.4,103.76 174.0,103.72 173.6,103.83 173.2,103.74 172.8,103.81 172.4,103.77 172.0,103.84 171.6,103.72 171.2,103.72 170.8,103.68 170.4,103.67 170.0,103.67 169.6,103.77 169.2,103.70 168.8,103.83 168.4,103.68 168.0,103.74 167.6,103.76 167.2,103.82 166.8,103.81 166.4,103.70 166.0,103.89 165.6,103.77 165.2,103.74 164.8,103.77 164.4,103.69 164.0,103.77 163.6,103.70 163.2,103.84 162.8,103.77 162.4,103.68 162.0,103.80 161.6,103.82 161.2,103.73 160.8,103.83 160.4,103.83 160.0,103.75 159.6,103.71 159.2,103.87 158.8,103.81 158.4,103.77 158.0,103.74 157.6,103.80 157.2,103.81 156.8,103.83 156.4,103.74 156.0,103.76 155.6,103.71 155.2,103.72 154.8,103.72 154.4,103.77 154.0,103.69 153.6,103.77 153.2,103.74 152.8,103.75 152.4,103.68 152.0,103.72 151.6,103.84 151.2,103.78 150.8,103.82 150.4,103.85 150.0,103.84 149.6,103.69 149.2,103.77 148.8,103.70 148.4,103.79 148.0,103.75 147.6,103.72 147.2,103.82 146.8,103.88 146.4,103.68 146.0,103.75 145.6,103.68 145.2,103.70 144.8,103.84 144.4,103.82 144.0,103.68 143.6,103.74 143.2,103.73 142.8,103.73 142.4,103.81 142.0,103.82 141.6,103.72 141.2,103.67 140.8,103.72 140.4,103.78 140.0,103.67 139.6,103.75 139.2,103.77 138.8,103.69 138.4,103.67 138.0,103.74 137.6,103.69 137.2,103.71 136.8,103.71 136.4,103.69 136.0,103.75 135.6,103.70 135.2,103.82 134.8,103.70 134.4,103.73 134.0,103.76 133.6,103.79 133.2,103.73 132.8,103.73 132.4,103.77 132.0,103.77 131.6,103.80 131.2,103.69 130.8,103.75 130.4,103.75 130.0,103.80 129.6,103.75 129.2,103.72 128.8,103.74 128.4,103.80 128.0,103.81 127.6,103.68 127.2,103.68 126.8,103.82 126.4,103.79 126.0,103.80 125.6,103.70 125.2,103.68 124.8,103.71 124.4,103.68 124.0,103.83 123.6,103.78 123.2,103.71 122.8,103.74 122.4,103.79 122.0,103.69 121.6,103.81 121.2,103.72 120.8,103.71 120.4,103.72 120.0,103.77 119.6,103.73 119.2,103.69 118.8,103.77 118.4,103.81 118.0,103.76 117.6,103.71 117.2,103.74 116.8,103.72 116.4,103.75 116.0,103.84 115.6,103.74 115.2,103.70 114.8,103.82 114.4,103.69 114.0,103.72 113.6,103.80 113.2,103.73 112.8,103.68 112.4,103.72 112.0,103.71 111.6,103.82 111.2,103.68 110.8,103.74 110.4,103.69 110.0,103.72 109.6,103.70 109.2,103.70 108.8,103.81 108.4,103.83 108.0,103.71 107.6,103.74 107.2,103.84 106.8,103.84 106.4,103.72 106.0,103.83 105.6,103.82 105.2,103.68 104.8,103.78 104.4,103.84 104.0,103.83 103.6,103.74 103.2,103.73 102.8,103.83 102.4,103.72 102.0,103.73 101.6,103.73 101.2,103.67 100.8,103.82 100.4,103.82 100.0,103.70 99.6,103.69 99.2,103.70 98.8,103.74 98.4,103.85 98.0,103.79 97.6,103.77 97.2,103.71 96.8,103.78 96.4,103.72 96.0,103.79 95.6,103.81 95.2,103.68 94.8,103.85 94.4,103.78 94.0,103.70 93.6,103.76 93.2,103.72 92.8,103.75 92.4,103.85 92.0,103.79 91.6,103.69 91.2,103.82 90.8,103.73 90.4,103.82 90.0,103.73 89.6,103.78 89.2,103.76 88.8,103.83 88.4,103.77 88.0,103.74 87.6,103.76 87.2,103.84 86.8,103.78 86.4,103.74 86.0,103.76 85.6,103.85 85.2,103.81 84.8,103.76 84.4,103.68 84.0,103.83 83.6,103.71 83.2,103.82 82.8,103.73 82.4,103.69 82.0,103.77 81.6,103.72 81.2,103.75 80.8,103.82 80.4,103.73 80.0,103.77 79.6,103.72 79.2,103.75 78.8,103.74 78.4,103.83 78.0,103.75 77.6,103.84 77.2,103.78 76.8,103.67 76.4,103.69 76.0,103.80 75.6,103.76 75.2,103.80 74.8,103.76 74.4,103.82 74.0,103.79 73.6,103.73 73.2,103.80 72.8,103.71 72.4,103.80 72.0,103.74 71.6,103.75 71.2,103.68 70.8,103.81 70.4,103.85 70.0,103.76 69.6,103.71 69.2,103.73 68.8,103.78 68.4,103.76 68.0,103.71 67.6,103.75 67.2,103.77 66.8,103.80 66.4,103.79 66.0,103.78 65.6,103.77 65.2,103.71 64.8,103.74 64.4,103.69 64.0,103.70 63.6,103.75 63.2,103.76 62.8,103.78 62.4,103.79 62.0,103.72 61.6,103.75 61.2,103.72 60.8,103.84 60.4,103.72 60.0,103.72" fill="#3f3fcb"/><polygon points="60.0,103.28 60.4,103.28 60.8,103.29 61.2,103.29 61.6,103.29 62.0,103.27 62.4,103.30 62.8,103.31 63.2,103.27 63.6,103.30 64.0,103.29 64.4,103.31 64.8,103.30 65.2,103.30 65.6,103.31 66.0,103.27 66.4,103.29 66.8,103.31 67.2,103.29 67.6,103.29 68.0,103.30 68.4,103.31 68.8,103.30 69.2,103.32 69.6,103.27 70.0,103.29 70.4,103.30 70.8,103.30 71.2,103.31 71.6,103.27 72.0,103.32 72.4,103.30 72.8,103.31 73.2,103.27 73.6,103.31 74.0,103.30 74.4,103.29 74.8,103.27 75.2,103.28 75.6,103.28 76.0,103.28 76.4,103.27 76.8,103.27 77.2,103.28 77.6,103.29 78.0,103.29 78.4,103.28 78.8,103.29 79.2,103.29 79.6,103.28 80.0,103.30 80.4,103.30 80.8,103.28 81.2,103.29 81.6,103.31 82.0,103.31 82.4,103.29 82.8,103.27 83.2,103.27 83.6,103.27 84.0,103.30 84.4,103.32 84.8,103.29 85.2,103.27 85.6,103.29 86.0,103.29 86.4,103.28 86.8,103.30 87.2,103.30 87.6,103.28 88.0,103.31 88.4,103.30 88.8,103.29 89.2,103.27 89.6,103.30 90.0,103.27 90.4,103.29 90.8,103.31 91.2,103.27 91.6,103.29 92.0,103.27 92.4,103.27 92.8,103.27 93.2,103.31 93.6,103.29 94.0,103.31 94.4,103.28 94.8,103.30 95.2,103.28 95.6,103.30 96.0,103.30 96.4,103.32 96.8,103.27 97.2,103.28 97.6,103.29 98.0,103.30 98.4,103.29 98.8,103.29 99.2,103.31 99.6,103.28 100.0,103.31 100.4,103.29 100.8,103.29 101.2,103.32 101.6,103.28 102.0,103.28 102.4,103.31 102.8,103.31 103.2,103.29 103.6,103.29 104.0,103.32 104.4,103.29 104.8,103.30 105.2,103.31 105.6,103.27 106.0,103.30 106.4,103.27 106.8,103.29 107.2,103.29 107.6,103.31 108.0,103.28 108.4,103.30 108.8,103.29 109.2,103.31 109.6,103.30 110.0,103.27 110.4,103.29 110.8,103.29 111.2,103.30 111.6,103.31 112.0,103.30 112.4,103.31 112.8,103.31 113.2,103.28 113.6,103.31 114.0,103.31 114.4,103.27 114.8,103.30 115.2,103.28 115.6,103.28 116.0,103.31 116.4,103.31 116.8,103.28 117.2,103.29 117.6,103.29 118.0,103.31 118.4,103.30 118.8,103.28 119.2,103.30 119.6,103.27 120.0,103.31 120.4,103.29 120.8,103.30 121.2,103.28 121.6,103.27 122.0,103.27 122.4,103.32 122.8,103.30 123.2,103.28 123.6,103.30 124.0,103.31 124.4,103.28 124.8,103.31 125.2,103.30 125.6,103.28 126.0,103.29 126.4,103.30 126.8,103.32 127.2,103.30 127.6,103.29 128.0,103.31 128.4,103.27 128.8,103.28 129.2,103.27 129.6,103.27 130.0,103.28 130.4,103.29 130.8,103.28 131.2,103.27 131.6,103.32 132.0,103.30 132.4,103.28 132.8,103.32 133.2,103.31 133.6,103.28 134.0,103.31 134.4,103.27 134.8,103.27 135.2,103.30 135.6,103.28 136.0,103.29 136.4,103.27 136.8,103.30 137.2,103.30 137.6,103.29 138.0,103.29 138.4,103.32 138.8,103.28 139.2,103.27 139.6,103.29 140.0,103.29 140.4,103.28 140.8,103.28 141.2,103.31 141.6,103.27 142.0,103.28 142.4,103.31 142.8,103.28 143.2,103.27 143.6,103.29 144.0,103.31 144.4,103.29 144.8,103.27 145.2,103.29 145.6,103.29 146.0,103.31 146.4,103.31 146.8,103.26 147.2,103.27 147.6,103.30 148.0,103.29 148.4,103.30 148.8,103.27 149.2,103.30 149.6,103.31 150.0,103.29 150.4,103.27 150.8,103.29 151.2,103.28 151.6,103.29 152.0,103.28 152.4,103.27 152.8,103.28 153.2,103.28 153.6,103.30 154.0,103.30 154.4,103.27 154.8,103.27 155.2,103.29 155.6,103.29 156.0,103.31 156.4,103.31 156.8,103.30 157.2,103.28 157.6,103.27 158.0,103.27 158.4,103.27 158.8,103.31 159.2,103.26 159.6,103.29 160.0,103.28 160.4,103.29 160.8,103.27 161.2,103.28 161.6,103.28 162.0,103.30 162.4,103.28 162.8,103.31 163.2,103.31 163.6,103.31 164.0,103.27 164.4,103.32 164.8,103.31 165.2,103.28 165.6,103.27 166.0,103.25 166.4,103.30 166.8,103.27 167.2,103.31 167.6,103.30 168.0,103.27 168.4,103.29 168.8,103.31 169.2,103.32 169.6,103.29 170.0,103.30 170.4,103.30 170.8,103.27 171.2,103.28 171.6,103.29 172.0,103.29 172.4,103.32 172.8,103.27 173.2,103.28 173.6,103.28 174.0,103.28 174.4,103.28 174.8,103.30 175.2,103.32 175.6,103.27 176.0,103.31 176.4,103.31 176.8,103.29 177.2,103.30 177.6,103.30 178.0,103.29 178.4,103.27 178.8,103.31 179.2,103.30 179.6,103.27 180.0,103.27 180.4,103.32 180.8,103.28 181.2,103.31 181.6,103.28 182.0,103.27 182.4,103.28 182.8,103.31 183.2,103.27 183.6,103.31 184.0,103.28 184.4,103.30 184.8,103.32 185.2,103.29 185.6,103.29 186.0,103.29 186.4,103.29 186.8,103.31 187.2,103.28 187.6,103.30 188.0,103.29 188.4,103.30 188.8,103.28 189.2,103.30 189.6,103.29 190.0,103.25 190.4,103.29 190.8,103.30 191.2,103.25 191.6,103.31 192.0,103.29 192.4,103.30 192.8,103.28 193.2,103.32 193.6,103.27 194.0,103.30 194.4,103.30 194.8,103.28 195.2,103.30 195.6,103.29 196.0,103.27 196.4,103.31 196.8,103.31 197.2,103.28 197.6,103.31 198.0,103.27 198.4,103.28 198.8,103.30 199.2,103.31 199.6,103.29 200.0,103.31 200.4,103.28 200.8,103.27 201.2,103.32 201.6,103.32 202.0,103.28 202.4,103.28 202.8,103.27 203.2,103.27 203.6,103.28 204.0,103.29 204.4,103.31 204.8,103.30 205.2,103.29 205.6,103.31 206.0,103.28 206.4,103.30 206.8,103.30 207.2,103.27 207.6,103.31 208.0,103.32 208.4,103.26 208.8,103.28 209.2,103.29 209.6,103.27 210.0,103.30 210.4,103.30 210.8,103.26 211.2,103.29 211.6,103.29 212.0,103.31 212.4,103.28 212.8,103.28 213.2,103.29 213.6,103.32 214.0,103.29 214.4,103.31 214.8,103.30 215.2,103.29 215.6,103.30 216.0,103.31 216.4,103.27 216.8,103.29 217.2,103.31 217.6,103.29 218.0,103.31 218.4,103.29 218.8,103.27 219.2,103.30 219.6,103.31 220.0,103.31 220.4,103.29 220.8,103.30 221.2,103.29 221.6,103.28 222.0,103.30 222.4,103.30 222.8,103.32 223.2,103.32 223.6,103.30 224.0,103.27 224.4,103.27 224.8,103.28 225.2,103.32 225.6,103.28 226.0,103.28 226.4,103.30 226.8,103.31 227.2,103.30 227.6,103.32 228.0,103.29 228.4,103.28 228.8,103.29 229.2,103.30 229.6,103.30 230.0,103.27 230.4,103.30 230.8,103.29 231.2,103.31 231.6,103.27 232.0,103.28 232.4,103.28 232.8,103.32 233.2,103.29 233.6,103.27 234.0,103.29 234.4,103.30 234.8,103.31 235.2,103.29 235.6,103.30 236.0,103.27 236.4,103.32 236.8,103.29 237.2,103.30 237.6,103.27 238.0,103.30 238.4,103.29 238.8,103.28 239.2,103.28 239.6,103.27 240.0,103.32 240.4,103.32 240.8,103.29 241.2,103.29 241.6,103.28 242.0,103.31 242.4,103.27 242.8,103.31 243.2,103.30 243.6,103.27 244.0,103.32 244.4,103.27 244.8,103.29 245.2,103.31 245.6,103.27 246.0,103.27 246.4,103.30 246.8,103.29 247.2,103.28 247.6,103.31 248.0,103.27 248.4,103.29 248.8,103.28 249.2,103.31 249.6,103.29 250.0,103.31 250.4,103.27 250.8,103.32 251.2,103.30 251.6,103.32 252.0,103.31 252.4,103.28 252.8,103.29 253.2,103.28 253.6,103.32 254.0,103.28 254.4,103.30 254.8,103.31 255.2,103.30 255.6,103.29 256.0,103.27 256.4,103.29 256.8,103.31 257.2,103.30 257.6,103.31 258.0,103.27 258.4,103.32 258.8,103.28 259.2,103.31 259.6,103.30 260.0,103.29 260.4,103.31 260.8,103.29 261.2,103.32 261.6,103.27 262.0,103.28 262.4,103.28 262.8,103.32 263.2,103.30 263.6,103.28 264.0,103.30 264.4,103.31 264.8,103.27 265.2,103.29 265.6,103.28 266.0,103.29 266.4,103.31 266.8,103.31 267.2,103.28 267.6,103.27 268.0,103.27 268.4,103.30 268.8,103.27 269.2,103.29 269.6,103.27 270.0,103.27 270.4,103.29 270.8,103.27 271.2,103.30 271.6,103.28 272.0,103.30 272.4,103.27 272.8,103.25 273.2,103.29 273.6,103.28 274.0,103.29 274.4,103.30 274.8,103.30 275.2,103.28 275.6,103.28 276.0,103.32 276.4,103.30 276.8,103.31 277.2,103.27 277.6,103.27 278.0,103.31 278.4,103.29 278.8,103.27 279.2,103.31 279.6,103.29 280.0,103.30 280.4,103.28 280.8,103.30 281.2,103.28 281.6,103.29 282.0,103.29 282.4,103.32 282.8,103.29 283.2,103.27 283.6,103.32 284.0,103.27 284.4,103.29 284.8,103.30 285.2,103.30 285.6,103.29 286.0,103.28 286.4,103.30 286.8,103.28 287.2,103.29 287.6,103.30 288.0,103.27 288.4,103.31 288.8,103.30 289.2,103.27 289.6,103.27 290.0,103.30 290.4,103.30 290.8,103.30 291.2,103.30 291.6,103.27 292.0,102.12 292.4,101.91 292.8,102.47 293.2,102.84 293.6,102.72 294.0,101.70 294.4,101.60 294.8,102.21 295.2,103.30 295.6,103.32 296.0,103.29 296.4,103.27 296.8,103.21 297.2,102.93 297.6,102.78 298.0,102.70 298.4,103.01 298.8,103.17 299.2,102.54 299.6,101.84 300.0,101.79 300.4,102.60 300.8,102.75 301.2,102.76 301.6,102.86 302.0,102.52 302.4,102.44 302.8,101.92 303.2,101.77 303.6,101.81 304.0,101.81 304.4,101.77 304.8,102.31 305.2,102.66 305.6,102.80 306.0,102.78 306.4,102.15 306.8,101.77 307.2,101.91 307.6,102.08 308.0,102.48 308.4,102.28 308.8,102.48 309.2,103.01 309.6,103.15 310.0,103.23 310.4,103.29 310.8,103.27 311.2,103.23 311.6,103.30 312.0,103.29 312.4,103.28 312.8,103.27 313.2,103.31 313.6,103.30 314.0,103.29 314.4,103.28 314.8,103.27 315.2,103.29 315.6,103.28 316.0,102.21 316.4,102.38 316.8,102.73 317.2,102.17 317.6,101.34 318.0,101.28 318.4,102.58 318.8,102.71 319.2,101.62 319.6,101.42 320.0,101.32 320.4,102.01 320.8,102.27 321.2,102.38 321.6,102.05 322.0,101.80 322.4,101.38 322.8,101.40 323.2,101.31 323.6,101.68 324.0,102.93 324.4,103.28 324.8,103.31 325.2,103.27 325.6,103.28 326.0,103.05 326.4,102.84 326.8,102.85 327.2,102.95 327.6,102.88 328.0,102.93 328.4,102.97 328.8,102.88 329.2,102.91 329.6,102.93 330.0,102.84 330.4,102.92 330.8,102.76 331.2,102.75 331.6,102.59 332.0,102.59 332.4,102.51 332.8,102.00 333.2,101.94 333.6,102.66 334.0,102.69 334.4,102.66 334.8,102.22 335.2,102.72 335.6,102.87 336.0,102.89 336.4,102.66 336.8,102.79 337.2,103.08 337.6,103.12 338.0,103.05 338.4,103.05 338.8,103.10 339.2,103.17 339.6,103.17 340.0,102.89 340.4,102.86 340.8,102.94 341.2,103.06 341.6,103.23 342.0,103.16 342.4,103.29 342.8,103.27 343.2,103.30 343.6,103.27 344.0,103.28 344.4,103.31 344.8,103.28 345.2,103.32 345.6,103.27 346.0,103.28 346.4,103.28 346.8,103.30 347.2,103.32 347.6,103.31 348.0,103.28 348.4,103.28 348.8,103.29 349.2,103.28 349.6,103.27 350.0,103.27 350.4,103.27 350.8,103.29 351.2,103.28 351.6,103.32 352.0,103.30 352.4,103.32 352.8,103.32 353.2,103.28 353.6,103.31 354.0,103.31 354.4,103.31 354.8,103.29 355.2,103.31 355.6,103.27 356.0,103.31 356.4,103.30 356.8,103.31 357.2,103.27 357.6,103.32 358.0,103.31 358.4,103.29 358.8,103.29 359.2,103.29 359.6,103.27 360.0,103.28 360.4,103.27 360.8,103.32 361.2,103.27 361.6,103.27 362.0,103.27 362.4,103.28 362.8,103.30 363.2,103.30 363.6,102.76 364.0,101.87 364.4,100.98 364.8,101.15 365.2,101.09 365.6,101.06 366.0,101.10 366.4,101.56 366.8,102.12 367.2,102.47 367.6,102.61 368.0,102.57 368.4,102.60 368.8,102.57 369.2,102.63 369.6,102.24 370.0,102.03 370.4,102.46 370.8,102.69 371.2,102.68 371.6,102.08 372.0,102.43 372.4,102.44 372.8,102.47 373.2,101.64 373.6,101.63 374.0,101.71 374.4,101.64 374.8,101.71 375.2,101.84 375.6,102.10 376.0,102.53 376.4,102.62 376.8,101.75 377.2,101.73 377.6,101.86 378.0,102.48 378.4,102.41 378.8,102.57 379.2,102.68 379.6,103.13 380.0,103.24 380.4,102.97 380.8,102.70 381.2,102.55 381.6,102.27 382.0,102.44 382.4,102.44 382.8,102.59 383.2,102.78 383.6,102.87 384.0,102.61 384.4,102.39 384.8,102.82 385.2,103.07 385.6,102.89 386.0,102.67 386.4,102.78 386.8,102.90 387.2,102.96 387.6,102.83 388.0,102.62 388.4,103.01 388.8,103.15 389.2,103.19 389.6,103.21 390.0,103.21 390.4,103.21 390.8,103.19 391.2,103.24 391.6,103.30 392.0,103.28 392.4,103.31 392.8,103.31 393.2,103.30 393.6,103.32 394.0,103.29 394.4,103.29 394.8,103.31 395.2,103.29 395.6,103.27 396.0,103.31 396.4,103.29 396.8,103.31 397.2,103.31 397.6,103.30 398.0,103.29 398.4,103.31 398.8,103.30 399.2,103.28 399.6,103.31 400.0,103.29 400.4,103.32 400.8,103.29 401.2,103.29 401.6,103.29 402.0,103.29 402.4,103.28 402.8,103.28 403.2,103.28 403.6,103.30 404.0,103.31 404.4,103.29 404.8,103.31 405.2,103.32 405.6,103.31 406.0,103.28 406.4,103.27 406.8,103.28 407.2,103.27 407.6,103.29 408.0,103.27 408.4,103.27 408.8,103.31 409.2,103.31 409.6,103.29 410.0,103.27 410.4,103.30 410.8,103.28 411.2,103.30 411.6,103.27 412.0,103.29 412.4,103.29 412.8,103.28 413.2,103.31 413.6,103.27 414.0,103.31 414.4,103.29 414.8,103.32 415.2,103.31 415.6,103.29 416.0,103.27 416.4,103.27 416.8,103.30 417.2,103.30 417.6,103.27 418.0,103.32 418.4,103.30 418.8,103.27 419.2,103.29 419.6,103.28 420.0,103.29 420.4,103.31 420.8,103.29 421.2,103.27 421.6,103.31 422.0,102.22 422.4,102.18 422.8,102.35 423.2,102.36 423.6,102.14 424.0,102.24 424.4,103.29 424.8,103.28 425.2,102.61 425.6,101.79 426.0,102.04 426.4,102.05 426.8,102.40 427.2,102.93 427.6,102.88 428.0,102.39 428.4,101.85 428.8,101.78 429.2,101.87 429.6,101.86 430.0,102.29 430.4,102.22 430.8,102.10 431.2,102.07 431.6,101.92 432.0,102.77 432.4,103.32 432.8,103.31 433.2,103.05 433.6,101.94 434.0,101.96 434.4,102.43 434.8,102.73 435.2,102.95 435.6,102.96 436.0,102.84 436.4,102.84 436.8,102.55 437.2,102.03 437.6,102.19 438.0,102.58 438.4,102.87 438.8,102.20 439.2,102.05 439.6,101.92 440.0,102.35 440.4,102.69 440.8,103.13 441.2,103.31 441.6,103.31 442.0,103.27 442.4,103.15 442.8,103.10 443.2,103.09 443.6,103.04 444.0,103.02 444.4,103.03 444.8,103.03 445.2,103.05 445.6,103.01 446.0,103.20 446.4,103.28 446.8,103.28 447.2,103.31 447.6,103.23 448.0,102.99 448.4,102.72 448.8,102.26 449.2,102.00 449.6,100.61 450.0,100.40 450.4,100.91 450.8,101.68 451.2,101.32 451.6,101.60 452.0,101.22 452.4,102.52 452.8,102.87 453.2,103.18 453.6,103.27 454.0,102.92 454.4,102.67 454.8,102.63 455.2,102.08 455.6,101.77 456.0,101.88 456.4,101.82 456.8,101.85 457.2,101.82 457.6,102.34 458.0,102.65 458.4,102.61 458.8,102.35 459.2,102.19 459.6,102.15 460.0,102.31 460.4,102.12 460.8,102.44 461.2,102.55 461.6,102.96 462.0,102.48 462.4,101.83 462.8,101.86 463.2,102.39 463.6,102.77 464.0,101.86 464.4,101.76 464.8,101.86 465.2,101.88 465.6,101.93 466.0,102.87 466.4,102.98 466.8,102.47 467.2,102.34 467.6,101.90 468.0,101.88 468.4,101.79 468.8,101.76 469.2,101.76 469.6,102.26 470.0,102.30 470.4,102.71 470.8,102.57 471.2,102.74 471.6,102.98 472.0,102.69 472.4,102.76 472.8,103.00 473.2,103.27 473.6,103.31 474.0,103.27 474.4,103.29 474.8,103.28 475.2,103.27 475.6,103.30 476.0,103.27 476.4,103.30 476.8,103.30 477.2,103.31 477.6,103.27 478.0,103.28 478.4,103.28 478.8,103.27 479.2,103.27 479.6,103.28 480.0,103.31 480.4,103.30 480.8,103.31 481.2,103.30 481.6,103.30 482.0,103.27 482.4,103.31 482.8,103.28 483.2,103.28 483.6,103.27 484.0,103.29 484.4,103.28 484.8,103.27 485.2,103.30 485.6,103.31 486.0,103.32 486.4,103.31 486.8,103.32 487.2,103.31 487.6,103.30 488.0,103.27 488.4,103.28 488.8,103.29 489.2,103.28 489.6,103.27 490.0,103.31 490.4,103.27 490.8,103.29 491.2,103.27 491.6,103.31 492.0,103.30 492.4,103.28 492.8,103.27 493.2,102.95 493.6,101.94 494.0,100.83 494.4,100.64 494.8,100.76 495.2,100.66 495.6,102.30 496.0,103.13 496.4,101.40 496.8,101.30 497.2,100.93 497.6,100.82 498.0,100.87 498.4,100.84 498.8,100.77 499.2,101.64 499.6,102.32 500.0,102.03 500.4,101.76 500.8,101.69 501.2,102.37 501.6,102.65 502.0,103.11 502.4,102.23 502.8,101.83 503.2,101.79 503.6,102.22 504.0,102.55 504.4,102.41 504.8,102.49 505.2,102.47 505.6,102.54 506.0,102.75 506.4,102.94 506.8,102.86 507.2,102.89 507.6,102.84 508.0,102.30 508.4,101.71 508.8,101.90 509.2,102.51 509.6,102.61 510.0,101.73 510.4,101.77 510.8,101.83 511.2,102.62 511.6,102.75 512.0,102.68 512.4,102.60 512.8,102.33 513.2,102.36 513.6,102.51 514.0,102.56 514.4,102.15 514.8,101.92 515.2,101.53 515.6,101.30 516.0,101.28 516.4,101.38 516.8,101.78 517.2,101.79 517.6,101.78 518.0,101.71 518.4,102.08 518.8,101.73 519.2,101.76 519.6,101.96 520.0,102.13 520.4,102.26 520.8,102.40 521.2,102.76 521.6,102.75 522.0,102.92 522.4,103.11 522.8,103.30 523.2,103.31 523.6,103.28 524.0,103.30 524.4,103.29 524.8,103.27 525.2,103.29 525.6,103.28 526.0,103.30 526.4,103.29 526.8,103.30 527.2,103.30 527.6,103.27 528.0,103.30 528.4,103.27 528.8,103.28 529.2,103.31 529.6,103.28 530.0,103.31 530.4,103.30 530.8,103.28 531.2,103.27 531.6,103.27 532.0,103.27 532.4,103.31 532.8,103.27 533.2,103.31 533.6,103.28 534.0,103.27 534.4,103.32 534.8,103.32 535.2,103.28 535.6,103.31 536.0,103.29 536.4,103.27 536.8,103.27 537.2,103.30 537.6,103.31 538.0,103.27 538.4,103.31 538.8,103.31 539.2,103.28 539.6,103.29 540.0,103.32 540.4,103.28 540.8,103.29 541.2,103.29 541.6,103.30 542.0,103.27 542.4,103.29 542.8,103.31 543.2,103.28 543.6,103.28 544.0,103.29 544.4,103.28 544.8,103.28 545.2,103.28 545.6,103.27 546.0,103.27 546.4,103.30 546.8,103.30 547.2,103.28 547.6,103.27 548.0,103.28 548.4,103.28 548.8,103.29 549.2,103.27 549.6,103.30 550.0,103.31 550.4,103.28 550.8,102.36 551.2,101.11 551.6,101.96 552.0,98.90 552.4,99.80 552.8,101.66 553.2,101.37 553.6,103.31 554.0,103.28 554.4,103.29 554.8,99.13 555.2,98.62 555.6,98.32 556.0,98.75 556.4,98.48 556.8,99.36 557.2,99.92 557.6,99.82 558.0,100.73 558.4,101.91 558.8,103.32 559.2,103.29 559.6,102.64 560.0,101.49 560.4,101.29 560.8,101.60 561.2,101.96 561.6,102.55 562.0,102.21 562.4,101.69 562.8,100.63 563.2,100.05 563.6,100.06 564.0,101.52 564.4,102.37 564.8,101.53 565.2,100.99 565.6,100.75 566.0,99.92 566.4,99.85 566.8,99.92 567.2,99.95 567.6,101.05 568.0,101.91 568.4,102.04 568.8,101.63 569.2,101.62 569.6,101.79 570.0,101.81 570.4,101.62 570.8,101.25 571.2,101.22 571.6,100.74 572.0,100.05 572.4,99.98 572.8,99.78 573.2,99.91 573.6,99.97 574.0,100.00 574.4,100.03 574.8,102.03 575.2,102.41 575.6,102.36 576.0,102.26 576.4,101.62 576.8,99.88 577.2,99.90 577.6,99.78 578.0,99.78 578.4,101.05 578.8,101.64 579.2,101.80 579.6,101.69 580.0,102.57 580.4,103.09 580.8,102.93 581.2,102.41 581.6,102.17 582.0,101.60 582.4,101.44 582.8,101.45 583.2,101.56 583.6,101.45 584.0,101.60 584.4,101.81 584.8,102.08 585.2,102.25 585.6,102.85 586.0,103.01 586.4,103.17 586.8,103.29 587.2,103.22 587.6,103.27 588.0,103.29 588.4,103.31 588.8,103.29 589.2,103.27 589.6,103.31 590.0,103.31 590.4,103.28 590.8,103.29 591.2,103.29 591.6,103.29 592.0,101.06 592.4,100.01 592.8,99.87 593.2,99.87 593.6,100.17 594.0,101.03 594.4,100.94 594.8,100.02 595.2,101.08 595.6,102.21 596.0,102.37 596.4,101.09 596.8,100.84 597.2,101.75 597.6,102.18 598.0,101.65 598.4,100.92 598.8,100.83 599.2,101.03 599.6,101.38 600.0,101.80 600.4,102.12 600.8,102.51 601.2,102.95 601.6,103.03 602.0,103.24 602.4,103.30 602.8,103.31 603.2,103.32 603.6,103.30 604.0,103.31 604.4,103.27 604.8,103.30 605.2,103.31 605.6,103.28 606.0,103.31 606.4,103.29 606.8,103.27 607.2,103.29 607.6,103.31 608.0,103.29 608.4,103.30 608.8,103.28 609.2,103.31 609.6,103.31 610.0,103.28 610.4,103.27 610.8,103.28 611.2,103.31 611.6,103.32 612.0,103.28 612.4,103.28 612.8,103.28 613.2,103.27 613.6,103.32 614.0,103.28 614.4,103.28 614.8,103.27 615.2,103.31 615.6,103.28 616.0,99.75 616.4,99.69 616.8,100.79 617.2,101.21 617.6,101.48 618.0,101.41 618.4,101.33 618.8,100.31 619.2,103.30 619.6,103.29 620.0,97.50 620.4,98.30 620.8,96.80 621.2,98.12 621.6,101.41 622.0,102.77 622.4,103.29 622.8,100.69 623.2,100.50 623.6,99.97 624.0,99.83 624.4,100.82 624.8,101.31 625.2,101.82 625.6,101.67 626.0,101.06 626.4,99.84 626.8,99.88 627.2,99.87 627.6,100.08 628.0,101.93 628.4,102.04 628.8,102.17 629.2,102.50 629.6,102.21 630.0,101.67 630.4,102.06 630.8,101.88 631.2,101.27 631.6,100.79 632.0,101.05 632.4,101.88 632.8,102.50 633.2,100.99 633.6,100.92 634.0,100.79 634.4,100.95 634.8,101.06 635.2,101.57 635.6,102.33 636.0,102.90 636.4,103.10 636.8,103.10 637.2,103.28 637.6,103.28 638.0,103.31 638.4,103.28 638.8,103.30 639.2,102.43 639.6,102.32 640.0,102.26 640.4,102.48 640.8,102.25 641.2,101.58 641.6,100.80 642.0,100.82 642.4,101.71 642.8,101.57 643.2,100.63 643.6,100.70 644.0,100.99 644.4,101.16 644.8,101.72 645.2,102.19 645.6,102.41 646.0,102.27 646.4,102.10 646.8,101.93 647.2,101.90 647.6,100.90 648.0,100.60 648.4,100.73 648.8,100.85 649.2,100.83 649.6,102.27 650.0,102.49 650.4,101.99 650.8,101.99 651.2,102.13 651.6,102.19 652.0,100.95 652.4,100.76 652.8,100.71 653.2,102.41 653.6,102.55 654.0,102.55 654.4,102.67 654.8,102.52 655.2,102.64 655.6,102.41 656.0,102.01 656.4,101.14 656.8,100.75 657.2,100.65 657.6,100.64 658.0,100.02 658.4,100.18 658.8,100.04 659.2,100.09 659.6,100.19 660.0,100.05 660.4,100.17 660.8,100.21 661.2,101.35 661.6,102.10 662.0,102.39 662.4,102.35 662.8,101.51 663.2,101.89 663.6,103.28 664.0,103.31 664.4,103.27 664.8,103.28 665.2,103.29 665.6,103.27 666.0,102.17 666.4,101.76 666.8,101.75 667.2,102.13 667.6,102.19 668.0,102.04 668.4,101.95 668.8,102.03 669.2,102.39 669.6,102.63 670.0,102.70 670.4,102.78 670.8,102.80 671.2,102.56 671.6,102.83 672.0,103.19 672.4,103.27 672.8,102.17 673.2,101.24 673.6,101.13 674.0,102.70 674.4,102.03 674.8,101.17 675.2,101.27 675.6,102.05 676.0,102.53 676.4,102.16 676.8,102.13 677.2,102.02 677.6,101.91 678.0,102.22 678.4,102.49 678.8,102.78 679.2,103.11 679.6,103.27 680.0,103.31 680.4,103.28 680.8,103.30 681.2,103.31 681.6,103.29 682.0,103.28 682.4,103.28 682.8,103.28 683.2,103.30 683.6,103.29 684.0,103.29 684.4,103.30 684.8,103.28 685.2,102.58 685.6,101.31 686.0,101.27 686.4,102.50 686.8,102.70 687.2,102.33 687.6,101.93 688.0,101.66 688.4,101.21 688.8,101.27 689.2,101.12 689.6,101.36 690.0,102.46 690.4,102.78 690.8,102.79 691.2,102.70 691.6,102.67 692.0,102.83 692.4,101.60 692.8,100.40 693.2,99.23 693.6,99.35 694.0,100.16 694.4,99.91 694.8,99.09 695.2,99.29 695.6,99.05 696.0,102.08 696.4,103.32 696.8,103.31 697.2,103.31 697.6,103.31 698.0,103.29 698.4,103.28 698.8,103.31 699.2,103.32 699.6,103.31 700.0,103.28 700.4,103.31 700.8,103.28 701.2,103.27 701.6,103.30 702.0,103.27 702.4,103.30 702.8,103.28 703.2,103.29 703.6,103.30 704.0,103.30 704.4,103.29 704.8,103.29 705.2,103.29 705.6,103.31 706.0,103.27 706.4,103.32 706.8,103.28 707.2,103.29 707.6,102.78 708.0,102.61 708.4,102.65 708.8,102.48 709.2,102.36 709.6,102.02 710.0,101.85 710.4,101.25 710.8,100.93 711.2,100.81 711.6,100.82 712.0,100.78 712.4,100.83 712.8,102.07 713.2,102.08 713.6,102.44 714.0,102.26 714.4,101.89 714.8,101.88 715.2,101.69 715.6,101.23 716.0,100.82 716.4,100.97 716.8,101.04 717.2,102.51 717.6,101.91 718.0,100.96 718.4,100.90 718.8,100.78 719.2,100.87 719.6,100.99 720.0,100.78 720.4,100.86 720.8,100.98 721.2,100.97 721.6,100.83 722.0,101.29 722.4,101.87 722.8,102.25 723.2,102.29 723.6,102.25 724.0,102.23 724.4,102.02 724.8,101.76 725.2,100.99 725.6,100.62 726.0,101.93 726.4,102.23 726.8,102.41 727.2,102.05 727.6,100.25 728.0,100.10 728.4,100.39 728.8,101.81 729.2,101.97 729.6,102.46 730.0,102.73 730.4,102.67 730.8,102.63 731.2,102.34 731.6,101.51 732.0,101.25 732.4,101.78 732.8,101.65 733.2,100.95 733.6,100.84 734.0,100.87 734.4,100.79 734.8,100.94 735.2,100.95 735.6,100.83 736.0,101.92 736.4,102.33 736.8,102.50 737.2,102.72 737.6,102.65 738.0,102.65 738.4,102.17 738.8,101.61 739.2,101.30 739.6,101.17 740.0,101.55 740.4,102.26 740.8,102.49 741.2,102.53 741.6,102.66 742.0,102.67 742.4,102.42 742.8,102.33 743.2,101.79 743.6,101.80 744.0,102.08 744.4,102.13 744.8,102.23 745.2,102.29 745.6,102.41 746.0,102.54 746.4,102.71 746.8,102.88 747.2,103.00 747.6,103.23 748.0,103.28 748.4,103.31 748.8,103.32 749.2,103.28 749.6,103.29 750.0,103.30 750.4,103.30 750.8,103.27 751.2,103.27 751.6,103.28 752.0,103.28 752.4,103.28 752.8,103.29 753.2,103.30 753.6,103.28 754.0,103.28 754.4,103.29 754.8,103.28 755.2,103.30 755.6,103.30 756.0,103.30 756.4,103.27 756.8,103.28 757.2,103.28 757.6,103.29 758.0,103.30 758.4,103.29 758.8,103.31 759.2,103.27 759.6,103.31 760.0,103.30 760.4,103.27 760.8,103.28 761.2,103.31 761.6,103.31 762.0,103.29 762.4,103.29 762.8,103.27 763.2,103.27 763.6,103.29 764.0,103.30 764.4,103.30 764.8,103.29 765.2,103.29 765.6,103.31 766.0,103.32 766.4,103.32 766.8,103.27 767.2,103.27 767.6,103.29 768.0,103.32 768.0,103.50 767.6,103.51 767.2,103.53 766.8,103.52 766.4,103.50 766.0,103.49 765.6,103.50 765.2,103.53 764.8,103.50 764.4,103.52 764.0,103.51 763.6,103.49 763.2,103.52 762.8,103.50 762.4,103.50 762.0,103.48 761.6,103.49 761.2,103.53 760.8,103.52 760.4,103.51 760.0,103.53 759.6,103.51 759.2,103.49 758.8,103.52 758.4,103.52 758.0,103.49 757.6,103.52 757.2,103.51 756.8,103.53 756.4,103.52 756.0,103.52 755.6,103.49 755.2,103.53 754.8,103.51 754.4,103.53 754.0,103.51 753.6,103.51 753.2,103.49 752.8,103.50 752.4,103.49 752.0,103.51 751.6,103.52 751.2,103.48 750.8,103.49 750.4,103.53 750.0,103.53 749.6,103.49 749.2,103.51 748.8,103.49 748.4,103.49 748.0,103.66 747.6,103.59 747.2,103.80 746.8,104.44 746.4,104.66 746.0,104.87 745.6,105.10 745.2,105.30 744.8,105.51 744.4,105.77 744.0,106.05 743.6,105.93 743.2,106.33 742.8,106.07 742.4,105.16 742.0,105.26 741.6,104.88 741.2,104.81 740.8,105.08 740.4,105.08 740.0,106.17 739.6,106.76 739.2,106.71 738.8,106.45 738.4,106.03 738.0,104.91 737.6,104.54 737.2,104.75 736.8,104.37 736.4,104.84 736.0,104.86 735.6,105.79 735.2,107.17 734.8,107.22 734.4,107.06 734.0,107.03 733.6,107.29 733.2,107.36 732.8,107.22 732.4,105.24 732.0,106.09 731.6,106.97 731.2,106.46 730.8,104.64 730.4,104.47 730.0,104.35 729.6,104.52 729.2,104.63 728.8,105.08 728.4,106.10 728.0,107.63 727.6,107.30 727.2,105.74 726.8,105.13 726.4,104.60 726.0,104.73 725.6,106.13 725.2,107.27 724.8,107.30 724.4,105.52 724.0,105.74 723.6,105.39 723.2,105.06 722.8,105.17 722.4,105.04 722.0,105.68 721.6,106.31 721.2,107.00 720.8,107.33 720.4,107.26 720.0,107.11 719.6,107.16 719.2,107.15 718.8,107.09 718.4,107.34 718.0,107.19 717.6,106.69 717.2,104.98 716.8,105.52 716.4,107.02 716.0,107.10 715.6,107.10 715.2,106.38 714.8,106.50 714.4,105.83 714.0,105.96 713.6,105.13 713.2,105.09 712.8,105.43 712.4,105.71 712.0,107.01 711.6,107.02 711.2,107.04 710.8,107.20 710.4,107.28 710.0,106.57 709.6,105.77 709.2,105.08 708.8,104.68 708.4,104.65 708.0,104.02 707.6,104.10 707.2,103.49 706.8,103.53 706.4,103.51 706.0,103.53 705.6,103.50 705.2,103.53 704.8,103.49 704.4,103.51 704.0,103.52 703.6,103.53 703.2,103.49 702.8,103.53 702.4,103.50 702.0,103.51 701.6,103.48 701.2,103.50 700.8,103.50 700.4,103.48 700.0,103.53 699.6,103.52 699.2,103.50 698.8,103.49 698.4,103.52 698.0,103.50 697.6,103.50 697.2,103.51 696.8,103.49 696.4,103.49 696.0,104.60 695.6,107.79 695.2,107.99 694.8,108.05 694.4,107.78 694.0,106.30 693.6,107.00 693.2,107.67 692.8,107.60 692.4,107.41 692.0,104.33 691.6,104.14 691.2,104.07 690.8,104.21 690.4,104.22 690.0,104.12 689.6,104.88 689.2,106.20 688.8,106.16 688.4,106.24 688.0,106.13 687.6,105.88 687.2,105.06 686.8,104.49 686.4,104.31 686.0,105.46 685.6,106.09 685.2,104.65 684.8,103.49 684.4,103.48 684.0,103.49 683.6,103.50 683.2,103.52 682.8,103.49 682.4,103.50 682.0,103.49 681.6,103.51 681.2,103.53 680.8,103.51 680.4,103.52 680.0,103.50 679.6,103.50 679.2,103.69 678.8,104.00 678.4,104.52 678.0,104.94 677.6,105.18 677.2,105.63 676.8,105.37 676.4,104.75 676.0,104.47 675.6,104.57 675.2,105.85 674.8,106.17 674.4,106.09 674.0,104.29 673.6,104.69 673.2,106.19 672.8,104.95 672.4,103.53 672.0,103.74 671.6,104.34 671.2,104.82 670.8,104.85 670.4,104.26 670.0,104.25 669.6,104.78 669.2,104.91 668.8,105.17 668.4,105.27 668.0,105.05 667.6,105.74 667.2,105.76 666.8,105.69 666.4,106.11 666.0,105.44 665.6,103.52 665.2,103.53 664.8,103.50 664.4,103.51 664.0,103.50 663.6,103.51 663.2,105.46 662.8,107.08 662.4,105.12 662.0,104.78 661.6,105.11 661.2,105.45 660.8,107.40 660.4,107.55 660.0,107.57 659.6,107.37 659.2,107.48 658.8,107.56 658.4,107.67 658.0,107.31 657.6,106.98 657.2,107.01 656.8,106.93 656.4,107.00 656.0,105.97 655.6,105.27 655.2,104.81 654.8,104.40 654.4,104.39 654.0,104.46 653.6,104.37 653.2,104.83 652.8,105.43 652.4,107.06 652.0,106.97 651.6,105.30 651.2,104.82 650.8,105.30 650.4,105.96 650.0,105.21 649.6,104.66 649.2,105.48 648.8,106.88 648.4,106.92 648.0,106.88 647.6,106.99 647.2,105.96 646.8,105.95 646.4,105.32 646.0,105.04 645.6,104.71 645.2,104.56 644.8,104.92 644.4,105.58 644.0,106.57 643.6,106.98 643.2,106.93 642.8,106.70 642.4,104.96 642.0,105.69 641.6,106.96 641.2,106.70 640.8,105.41 640.4,104.79 640.0,104.80 639.6,104.57 639.2,104.51 638.8,103.49 638.4,103.51 638.0,103.48 637.6,103.51 637.2,103.50 636.8,103.92 636.4,104.20 636.0,103.97 635.6,104.72 635.2,105.59 634.8,106.11 634.4,107.28 634.0,107.15 633.6,107.31 633.2,107.31 632.8,105.63 632.4,104.70 632.0,105.69 631.6,107.16 631.2,107.31 630.8,106.01 630.4,105.30 630.0,105.65 629.6,106.08 629.2,104.93 628.8,104.88 628.4,105.05 628.0,105.65 627.6,106.41 627.2,108.02 626.8,108.19 626.4,108.19 626.0,107.68 625.6,106.60 625.2,105.39 624.8,105.77 624.4,106.11 624.0,106.95 623.6,108.22 623.2,107.79 622.8,106.88 622.4,103.49 622.0,104.10 621.6,105.09 621.2,107.00 620.8,107.90 620.4,108.50 620.0,108.03 619.6,103.51 619.2,103.50 618.8,107.14 618.4,107.10 618.0,106.08 617.6,106.07 617.2,105.94 616.8,106.46 616.4,107.73 616.0,107.06 615.6,103.48 615.2,103.50 614.8,103.52 614.4,103.49 614.0,103.53 613.6,103.49 613.2,103.50 612.8,103.50 612.4,103.50 612.0,103.50 611.6,103.51 611.2,103.50 610.8,103.52 610.4,103.48 610.0,103.51 609.6,103.52 609.2,103.51 608.8,103.51 608.4,103.53 608.0,103.52 607.6,103.52 607.2,103.51 606.8,103.49 606.4,103.53 606.0,103.48 605.6,103.50 605.2,103.50 604.8,103.52 604.4,103.50 604.0,103.52 603.6,103.49 603.2,103.49 602.8,103.53 602.4,103.52 602.0,103.59 601.6,103.98 601.2,104.31 600.8,104.48 600.4,104.76 600.0,105.05 599.6,106.39 599.2,106.55 598.8,107.15 598.4,107.33 598.0,107.11 597.6,105.43 597.2,105.11 596.8,106.67 596.4,106.35 596.0,105.72 595.6,104.45 595.2,105.21 594.8,106.48 594.4,106.94 594.0,106.65 593.6,106.23 593.2,106.95 592.8,107.62 592.4,107.60 592.0,106.41 591.6,103.48 591.2,103.50 590.8,103.51 590.4,103.49 590.0,103.51 589.6,103.49 589.2,103.49 588.8,103.50 588.4,103.52 588.0,103.52 587.6,103.53 587.2,103.63 586.8,103.55 586.4,103.61 586.0,103.70 585.6,103.95 585.2,104.70 584.8,105.04 584.4,105.19 584.0,105.37 583.6,105.52 583.2,105.54 582.8,105.50 582.4,105.62 582.0,105.59 581.6,105.62 581.2,104.98 580.8,104.21 580.4,103.77 580.0,104.00 579.6,105.04 579.2,106.15 578.8,106.01 578.4,106.26 578.0,107.17 577.6,107.55 577.2,107.57 576.8,107.60 576.4,107.80 576.0,105.05 575.6,104.54 575.2,104.78 574.8,104.65 574.4,105.76 574.0,107.46 573.6,107.67 573.2,107.84 572.8,107.51 572.4,107.84 572.0,107.81 571.6,107.69 571.2,106.34 570.8,105.93 570.4,105.99 570.0,105.48 569.6,105.35 569.2,105.04 568.8,105.64 568.4,105.31 568.0,105.35 567.6,105.31 567.2,106.27 566.8,107.80 566.4,107.71 566.0,107.84 565.6,107.82 565.2,107.33 564.8,106.82 564.4,105.61 564.0,104.73 563.6,106.38 563.2,107.78 562.8,107.53 562.4,105.57 562.0,105.36 561.6,104.74 561.2,104.86 560.8,104.93 560.4,105.30 560.0,105.56 559.6,104.48 559.2,103.52 558.8,103.53 558.4,105.78 558.0,107.63 557.6,107.05 557.2,106.96 556.8,107.03 556.4,109.03 556.0,108.80 555.6,109.47 555.2,109.16 554.8,108.72 554.4,103.52 554.0,103.49 553.6,103.52 553.2,105.97 552.8,106.04 552.4,107.24 552.0,108.20 551.6,105.35 551.2,105.24 550.8,104.38 550.4,103.49 550.0,103.53 549.6,103.53 549.2,103.51 548.8,103.49 548.4,103.50 548.0,103.50 547.6,103.53 547.2,103.52 546.8,103.53 546.4,103.50 546.0,103.51 545.6,103.53 545.2,103.50 544.8,103.51 544.4,103.50 544.0,103.48 543.6,103.52 543.2,103.48 542.8,103.50 542.4,103.49 542.0,103.53 541.6,103.53 541.2,103.50 540.8,103.53 540.4,103.51 540.0,103.50 539.6,103.52 539.2,103.48 538.8,103.50 538.4,103.49 538.0,103.52 537.6,103.53 537.2,103.49 536.8,103.50 536.4,103.50 536.0,103.52 535.6,103.49 535.2,103.49 534.8,103.52 534.4,103.49 534.0,103.48 533.6,103.51 533.2,103.53 532.8,103.50 532.4,103.52 532.0,103.50 531.6,103.49 531.2,103.51 530.8,103.53 530.4,103.52 530.0,103.48 529.6,103.49 529.2,103.48 528.8,103.48 528.4,103.49 528.0,103.50 527.6,103.51 527.2,103.50 526.8,103.50 526.4,103.52 526.0,103.50 525.6,103.51 525.2,103.53 524.8,103.50 524.4,103.50 524.0,103.51 523.6,103.48 523.2,103.53 522.8,103.54 522.4,103.57 522.0,104.00 521.6,104.38 521.2,104.67 520.8,104.49 520.4,105.17 520.0,105.39 519.6,105.62 519.2,105.99 518.8,105.89 518.4,106.00 518.0,105.94 517.6,105.84 517.2,105.97 516.8,105.90 516.4,105.90 516.0,105.97 515.6,105.50 515.2,105.94 514.8,105.29 514.4,104.82 514.0,104.49 513.6,104.25 513.2,104.66 512.8,105.05 512.4,104.87 512.0,104.65 511.6,104.40 511.2,104.41 510.8,104.53 510.4,105.95 510.0,105.83 509.6,105.99 509.2,104.45 508.8,105.41 508.4,106.02 508.0,105.87 507.6,104.61 507.2,104.25 506.8,104.07 506.4,104.15 506.0,104.29 505.6,104.45 505.2,104.80 504.8,104.72 504.4,104.99 504.0,104.82 503.6,104.74 503.2,105.28 502.8,105.79 502.4,105.14 502.0,103.87 501.6,104.58 501.2,105.41 500.8,105.35 500.4,105.41 500.0,105.66 499.6,105.53 499.2,105.32 498.8,107.15 498.4,106.90 498.0,107.02 497.6,106.91 497.2,106.96 496.8,106.85 496.4,106.79 496.0,103.96 495.6,104.26 495.2,105.33 494.8,105.85 494.4,105.99 494.0,105.93 493.6,105.79 493.2,103.91 492.8,103.48 492.4,103.49 492.0,103.53 491.6,103.50 491.2,103.52 490.8,103.50 490.4,103.51 490.0,103.51 489.6,103.51 489.2,103.50 488.8,103.53 488.4,103.53 488.0,103.50 487.6,103.52 487.2,103.51 486.8,103.52 486.4,103.48 486.0,103.52 485.6,103.50 485.2,103.49 484.8,103.49 484.4,103.52 484.0,103.50 483.6,103.51 483.2,103.48 482.8,103.52 482.4,103.53 482.0,103.53 481.6,103.53 481.2,103.53 480.8,103.51 480.4,103.53 480.0,103.52 479.6,103.52 479.2,103.52 478.8,103.52 478.4,103.49 478.0,103.53 477.6,103.50 477.2,103.49 476.8,103.50 476.4,103.50 476.0,103.50 475.6,103.53 475.2,103.53 474.8,103.51 474.4,103.48 474.0,103.53 473.6,103.50 473.2,103.58 472.8,103.78 472.4,104.49 472.0,104.93 471.6,104.38 471.2,104.26 470.8,104.34 470.4,104.42 470.0,104.91 469.6,105.09 469.2,105.84 468.8,105.91 468.4,106.01 468.0,105.86 467.6,106.03 467.2,105.38 466.8,105.11 466.4,104.38 466.0,104.19 465.6,104.48 465.2,105.83 464.8,105.98 464.4,105.81 464.0,105.82 463.6,104.99 463.2,104.48 462.8,105.10 462.4,105.95 462.0,105.64 461.6,104.52 461.2,104.25 460.8,104.89 460.4,105.26 460.0,105.45 459.6,105.10 459.2,105.41 458.8,105.25 458.4,105.22 458.0,104.66 457.6,104.58 457.2,105.91 456.8,105.97 456.4,105.93 456.0,105.77 455.6,105.91 455.2,106.02 454.8,105.52 454.4,104.47 454.0,104.13 453.6,103.63 453.2,103.68 452.8,104.07 452.4,104.49 452.0,106.52 451.6,107.30 451.2,106.11 450.8,105.63 450.4,105.90 450.0,105.20 449.6,107.27 449.2,106.14 448.8,104.99 448.4,104.58 448.0,104.03 447.6,103.60 447.2,103.52 446.8,103.49 446.4,103.52 446.0,103.56 445.6,103.71 445.2,103.79 444.8,103.79 444.4,103.78 444.0,103.76 443.6,103.79 443.2,103.78 442.8,103.72 442.4,103.60 442.0,103.58 441.6,103.49 441.2,103.48 440.8,103.71 440.4,104.22 440.0,104.73 439.6,105.24 439.2,105.10 438.8,105.25 438.4,104.40 438.0,103.97 437.6,104.47 437.2,105.09 436.8,105.12 436.4,104.13 436.0,104.16 435.6,104.04 435.2,104.00 434.8,104.02 434.4,104.09 434.0,104.77 433.6,105.19 433.2,104.18 432.8,103.50 432.4,103.52 432.0,104.06 431.6,105.16 431.2,105.00 430.8,105.18 430.4,104.67 430.0,104.80 429.6,104.80 429.2,105.24 428.8,105.22 428.4,105.32 428.0,105.33 427.6,104.45 427.2,103.91 426.8,104.31 426.4,104.65 426.0,105.23 425.6,105.32 425.2,104.36 424.8,103.48 424.4,103.52 424.0,104.83 423.6,104.70 423.2,104.85 422.8,104.62 422.4,105.00 422.0,104.83 421.6,103.49 421.2,103.53 420.8,103.52 420.4,103.52 420.0,103.49 419.6,103.52 419.2,103.53 418.8,103.50 418.4,103.53 418.0,103.50 417.6,103.49 417.2,103.48 416.8,103.53 416.4,103.53 416.0,103.52 415.6,103.50 415.2,103.51 414.8,103.49 414.4,103.53 414.0,103.51 413.6,103.49 413.2,103.49 412.8,103.49 412.4,103.51 412.0,103.49 411.6,103.48 411.2,103.49 410.8,103.48 410.4,103.50 410.0,103.50 409.6,103.49 409.2,103.53 408.8,103.53 408.4,103.51 408.0,103.51 407.6,103.51 407.2,103.49 406.8,103.48 406.4,103.50 406.0,103.51 405.6,103.49 405.2,103.50 404.8,103.49 404.4,103.53 404.0,103.49 403.6,103.53 403.2,103.53 402.8,103.53 402.4,103.49 402.0,103.51 401.6,103.49 401.2,103.52 400.8,103.48 400.4,103.52 400.0,103.49 399.6,103.53 399.2,103.50 398.8,103.49 398.4,103.51 398.0,103.52 397.6,103.53 397.2,103.49 396.8,103.53 396.4,103.49 396.0,103.53 395.6,103.53 395.2,103.53 394.8,103.52 394.4,103.48 394.0,103.53 393.6,103.50 393.2,103.49 392.8,103.49 392.4,103.51 392.0,103.49 391.6,103.57 391.2,103.56 390.8,103.63 390.4,103.77 390.0,103.80 389.6,103.72 389.2,103.73 388.8,103.75 388.4,103.89 388.0,104.11 387.6,104.44 387.2,104.30 386.8,103.98 386.4,104.01 386.0,104.25 385.6,104.13 385.2,103.90 384.8,103.92 384.4,104.51 384.0,105.23 383.6,104.41 383.2,104.25 382.8,104.44 382.4,105.09 382.0,104.68 381.6,104.98 381.2,105.04 380.8,104.85 380.4,104.32 380.0,103.58 379.6,103.84 379.2,104.27 378.8,104.69 378.4,104.70 378.0,104.66 377.6,105.10 377.2,105.98 376.8,106.04 376.4,105.61 376.0,104.50 375.6,104.88 375.2,105.58 374.8,106.20 374.4,106.00 374.0,105.96 373.6,106.01 373.2,106.14 372.8,106.13 372.4,104.50 372.0,104.87 371.6,104.85 371.2,104.92 370.8,104.33 370.4,104.45 370.0,104.82 369.6,105.29 369.2,105.00 368.8,104.91 368.4,104.59 368.0,104.48 367.6,104.40 367.2,104.76 366.8,104.85 366.4,105.42 366.0,106.18 365.6,105.50 365.2,105.55 364.8,104.90 364.4,105.68 364.0,105.70 363.6,104.41 363.2,103.49 362.8,103.50 362.4,103.49 362.0,103.50 361.6,103.49 361.2,103.50 360.8,103.52 360.4,103.52 360.0,103.53 359.6,103.52 359.2,103.52 358.8,103.50 358.4,103.51 358.0,103.52 357.6,103.49 357.2,103.52 356.8,103.51 356.4,103.52 356.0,103.50 355.6,103.53 355.2,103.52 354.8,103.50 354.4,103.53 354.0,103.50 353.6,103.52 353.2,103.51 352.8,103.53 352.4,103.52 352.0,103.50 351.6,103.51 351.2,103.49 350.8,103.51 350.4,103.51 350.0,103.51 349.6,103.48 349.2,103.53 348.8,103.49 348.4,103.49 348.0,103.49 347.6,103.53 347.2,103.52 346.8,103.49 346.4,103.53 346.0,103.53 345.6,103.49 345.2,103.49 344.8,103.48 344.4,103.53 344.0,103.48 343.6,103.52 343.2,103.52 342.8,103.50 342.4,103.56 342.0,103.55 341.6,103.55 341.2,103.76 340.8,103.88 340.4,104.13 340.0,104.21 339.6,104.17 339.2,103.70 338.8,103.73 338.4,103.86 338.0,103.87 337.6,103.78 337.2,103.87 336.8,103.91 336.4,104.29 336.0,104.29 335.6,104.00 335.2,104.29 334.8,104.62 334.4,104.96 334.0,104.43 333.6,104.22 333.2,104.67 332.8,105.35 332.4,105.33 332.0,104.61 331.6,104.41 331.2,104.19 330.8,104.24 330.4,104.23 330.0,104.04 329.6,104.02 329.2,104.03 328.8,103.97 328.4,103.98 328.0,103.97 327.6,104.08 327.2,103.98 326.8,104.00 326.4,104.11 326.0,103.74 325.6,103.50 325.2,103.52 324.8,103.48 324.4,103.48 324.0,103.81 323.6,104.50 323.2,105.54 322.8,105.46 322.4,105.39 322.0,104.96 321.6,104.92 321.2,104.42 320.8,104.51 320.4,104.66 320.0,104.99 319.6,105.44 319.2,105.44 318.8,105.19 318.4,104.12 318.0,104.60 317.6,105.39 317.2,105.45 316.8,104.32 316.4,104.10 316.0,104.35 315.6,103.48 315.2,103.48 314.8,103.52 314.4,103.49 314.0,103.49 313.6,103.50 313.2,103.51 312.8,103.49 312.4,103.48 312.0,103.51 311.6,103.48 311.2,103.59 310.8,103.71 310.4,103.65 310.0,103.68 309.6,103.76 309.2,103.84 308.8,104.34 308.4,104.99 308.0,105.24 307.6,105.02 307.2,105.64 306.8,105.68 306.4,105.80 306.0,104.70 305.6,104.35 305.2,104.44 304.8,104.33 304.4,105.46 304.0,105.71 303.6,105.74 303.2,105.80 302.8,105.76 302.4,105.01 302.0,104.68 301.6,104.46 301.2,104.19 300.8,104.21 300.4,104.59 300.0,104.85 299.6,105.86 299.2,105.67 298.8,103.82 298.4,103.82 298.0,103.91 297.6,104.09 297.2,104.05 296.8,103.56 296.4,103.50 296.0,103.50 295.6,103.53 295.2,103.52 294.8,104.52 294.4,104.98 294.0,104.95 293.6,104.85 293.2,103.89 292.8,104.07 292.4,104.45 292.0,104.40 291.6,103.51 291.2,103.49 290.8,103.53 290.4,103.50 290.0,103.49 289.6,103.49 289.2,103.49 288.8,103.50 288.4,103.50 288.0,103.49 287.6,103.49 287.2,103.53 286.8,103.50 286.4,103.53 286.0,103.52 285.6,103.50 285.2,103.52 284.8,103.52 284.4,103.51 284.0,103.53 283.6,103.50 283.2,103.52 282.8,103.51 282.4,103.53 282.0,103.50 281.6,103.52 281.2,103.52 280.8,103.53 280.4,103.49 280.0,103.53 279.6,103.53 279.2,103.50 278.8,103.51 278.4,103.48 278.0,103.53 277.6,103.51 277.2,103.50 276.8,103.53 276.4,103.53 276.0,103.53 275.6,103.49 275.2,103.50 274.8,103.49 274.4,103.53 274.0,103.50 273.6,103.50 273.2,103.48 272.8,103.55 272.4,103.50 272.0,103.49 271.6,103.53 271.2,103.52 270.8,103.52 270.4,103.49 270.0,103.49 269.6,103.52 269.2,103.53 268.8,103.50 268.4,103.53 268.0,103.52 267.6,103.53 267.2,103.49 266.8,103.53 266.4,103.52 266.0,103.53 265.6,103.52 265.2,103.52 264.8,103.52 264.4,103.50 264.0,103.49 263.6,103.52 263.2,103.49 262.8,103.53 262.4,103.51 262.0,103.52 261.6,103.48 261.2,103.49 260.8,103.52 260.4,103.51 260.0,103.50 259.6,103.48 259.2,103.52 258.8,103.51 258.4,103.53 258.0,103.51 257.6,103.49 257.2,103.49 256.8,103.51 256.4,103.49 256.0,103.49 255.6,103.49 255.2,103.53 254.8,103.49 254.4,103.50 254.0,103.49 253.6,103.51 253.2,103.51 252.8,103.49 252.4,103.50 252.0,103.52 251.6,103.50 251.2,103.53 250.8,103.51 250.4,103.49 250.0,103.50 249.6,103.51 249.2,103.51 248.8,103.51 248.4,103.50 248.0,103.53 247.6,103.53 247.2,103.50 246.8,103.49 246.4,103.52 246.0,103.50 245.6,103.49 245.2,103.53 244.8,103.50 244.4,103.50 244.0,103.52 243.6,103.52 243.2,103.52 242.8,103.52 242.4,103.49 242.0,103.53 241.6,103.52 241.2,103.52 240.8,103.49 240.4,103.53 240.0,103.50 239.6,103.51 239.2,103.51 238.8,103.50 238.4,103.50 238.0,103.51 237.6,103.51 237.2,103.52 236.8,103.51 236.4,103.51 236.0,103.49 235.6,103.53 235.2,103.50 234.8,103.53 234.4,103.50 234.0,103.48 233.6,103.49 233.2,103.53 232.8,103.52 232.4,103.52 232.0,103.51 231.6,103.49 231.2,103.49 230.8,103.52 230.4,103.48 230.0,103.52 229.6,103.51 229.2,103.51 228.8,103.51 228.4,103.48 228.0,103.51 227.6,103.52 227.2,103.52 226.8,103.53 226.4,103.51 226.0,103.52 225.6,103.50 225.2,103.50 224.8,103.51 224.4,103.49 224.0,103.49 223.6,103.50 223.2,103.49 222.8,103.49 222.4,103.50 222.0,103.51 221.6,103.49 221.2,103.51 220.8,103.53 220.4,103.51 220.0,103.50 219.6,103.49 219.2,103.53 218.8,103.53 218.4,103.52 218.0,103.49 217.6,103.51 217.2,103.53 216.8,103.51 216.4,103.51 216.0,103.51 215.6,103.51 215.2,103.51 214.8,103.52 214.4,103.51 214.0,103.51 213.6,103.52 213.2,103.50 212.8,103.50 212.4,103.53 212.0,103.49 211.6,103.50 211.2,103.53 210.8,103.55 210.4,103.50 210.0,103.50 209.6,103.52 209.2,103.52 208.8,103.52 208.4,103.54 208.0,103.51 207.6,103.50 207.2,103.52 206.8,103.49 206.4,103.51 206.0,103.51 205.6,103.52 205.2,103.49 204.8,103.53 204.4,103.48 204.0,103.49 203.6,103.52 203.2,103.48 202.8,103.52 202.4,103.49 202.0,103.49 201.6,103.53 201.2,103.49 200.8,103.53 200.4,103.53 200.0,103.53 199.6,103.51 199.2,103.52 198.8,103.51 198.4,103.53 198.0,103.53 197.6,103.51 197.2,103.50 196.8,103.49 196.4,103.50 196.0,103.51 195.6,103.50 195.2,103.53 194.8,103.48 194.4,103.53 194.0,103.52 193.6,103.51 193.2,103.52 192.8,103.53 192.4,103.49 192.0,103.49 191.6,103.48 191.2,103.54 190.8,103.53 190.4,103.52 190.0,103.54 189.6,103.50 189.2,103.52 188.8,103.52 188.4,103.52 188.0,103.52 187.6,103.51 187.2,103.49 186.8,103.49 186.4,103.52 186.0,103.53 185.6,103.48 185.2,103.51 184.8,103.51 184.4,103.48 184.0,103.50 183.6,103.50 183.2,103.52 182.8,103.49 182.4,103.53 182.0,103.51 181.6,103.49 181.2,103.51 180.8,103.49 180.4,103.49 180.0,103.50 179.6,103.48 179.2,103.52 178.8,103.51 178.4,103.51 178.0,103.53 177.6,103.50 177.2,103.49 176.8,103.51 176.4,103.48 176.0,103.49 175.6,103.51 175.2,103.50 174.8,103.51 174.4,103.51 174.0,103.50 173.6,103.53 173.2,103.50 172.8,103.52 172.4,103.51 172.0,103.53 171.6,103.50 171.2,103.50 170.8,103.48 170.4,103.48 170.0,103.48 169.6,103.51 169.2,103.49 168.8,103.53 168.4,103.49 168.0,103.50 167.6,103.51 167.2,103.53 166.8,103.52 166.4,103.49 166.0,103.55 165.6,103.51 165.2,103.50 164.8,103.51 164.4,103.49 164.0,103.51 163.6,103.49 163.2,103.53 162.8,103.51 162.4,103.48 162.0,103.52 161.6,103.53 161.2,103.50 160.8,103.53 160.4,103.53 160.0,103.50 159.6,103.49 159.2,103.54 158.8,103.52 158.4,103.51 158.0,103.50 157.6,103.52 157.2,103.52 156.8,103.53 156.4,103.50 156.0,103.51 155.6,103.49 155.2,103.49 154.8,103.49 154.4,103.51 154.0,103.49 153.6,103.51 153.2,103.50 152.8,103.51 152.4,103.48 152.0,103.50 151.6,103.53 151.2,103.51 150.8,103.52 150.4,103.53 150.0,103.53 149.6,103.49 149.2,103.51 148.8,103.49 148.4,103.52 148.0,103.50 147.6,103.50 147.2,103.53 146.8,103.54 146.4,103.48 146.0,103.50 145.6,103.49 145.2,103.49 144.8,103.53 144.4,103.53 144.0,103.48 143.6,103.50 143.2,103.50 142.8,103.50 142.4,103.52 142.0,103.53 141.6,103.50 141.2,103.48 140.8,103.49 140.4,103.51 140.0,103.48 139.6,103.50 139.2,103.51 138.8,103.49 138.4,103.48 138.0,103.50 137.6,103.49 137.2,103.49 136.8,103.49 136.4,103.49 136.0,103.51 135.6,103.49 135.2,103.53 134.8,103.49 134.4,103.50 134.0,103.51 133.6,103.52 133.2,103.50 132.8,103.50 132.4,103.51 132.0,103.51 131.6,103.52 131.2,103.49 130.8,103.50 130.4,103.51 130.0,103.52 129.6,103.50 129.2,103.50 128.8,103.50 128.4,103.52 128.0,103.52 127.6,103.48 127.2,103.48 126.8,103.53 126.4,103.52 126.0,103.52 125.6,103.49 125.2,103.48 124.8,103.49 124.4,103.48 124.0,103.53 123.6,103.51 123.2,103.49 122.8,103.50 122.4,103.52 122.0,103.49 121.6,103.52 121.2,103.50 120.8,103.49 120.4,103.50 120.0,103.51 119.6,103.50 119.2,103.49 118.8,103.51 118.4,103.52 118.0,103.51 117.6,103.49 117.2,103.50 116.8,103.50 116.4,103.51 116.0,103.53 115.6,103.50 115.2,103.49 114.8,103.53 114.4,103.49 114.0,103.50 113.6,103.52 113.2,103.50 112.8,103.48 112.4,103.50 112.0,103.49 111.6,103.53 111.2,103.48 110.8,103.50 110.4,103.49 110.0,103.50 109.6,103.49 109.2,103.49 108.8,103.52 108.4,103.53 108.0,103.49 107.6,103.50 107.2,103.53 106.8,103.53 106.4,103.50 106.0,103.53 105.6,103.53 105.2,103.48 104.8,103.51 104.4,103.53 104.0,103.53 103.6,103.50 103.2,103.50 102.8,103.53 102.4,103.50 102.0,103.50 101.6,103.50 101.2,103.48 100.8,103.52 100.4,103.53 100.0,103.49 99.6,103.49 99.2,103.49 98.8,103.50 98.4,103.53 98.0,103.52 97.6,103.51 97.2,103.49 96.8,103.51 96.4,103.50 96.0,103.52 95.6,103.52 95.2,103.48 94.8,103.53 94.4,103.51 94.0,103.49 93.6,103.51 93.2,103.50 92.8,103.50 92.4,103.53 92.0,103.52 91.6,103.49 91.2,103.53 90.8,103.50 90.4,103.53 90.0,103.50 89.6,103.51 89.2,103.51 88.8,103.53 88.4,103.51 88.0,103.50 87.6,103.51 87.2,103.53 86.8,103.51 86.4,103.50 86.0,103.51 85.6,103.53 85.2,103.52 84.8,103.51 84.4,103.48 84.0,103.53 83.6,103.49 83.2,103.53 82.8,103.50 82.4,103.49 82.0,103.51 81.6,103.50 81.2,103.50 80.8,103.53 80.4,103.50 80.0,103.51 79.6,103.50 79.2,103.51 78.8,103.50 78.4,103.53 78.0,103.50 77.6,103.53 77.2,103.51 76.8,103.48 76.4,103.49 76.0,103.52 75.6,103.51 75.2,103.52 74.8,103.51 74.4,103.53 74.0,103.52 73.6,103.50 73.2,103.52 72.8,103.49 72.4,103.52 72.0,103.50 71.6,103.50 71.2,103.48 70.8,103.52 70.4,103.53 70.0,103.51 69.6,103.49 69.2,103.50 68.8,103.51 68.4,103.51 68.0,103.49 67.6,103.51 67.2,103.51 66.8,103.52 66.4,103.52 66.0,103.51 65.6,103.51 65.2,103.49 64.8,103.50 64.4,103.49 64.0,103.49 63.6,103.51 63.2,103.51 62.8,103.51 62.4,103.52 62.0,103.50 61.6,103.50 61.2,103.49 60.8,103.53 60.4,103.50 60.0,103.50" fill="#6262dc"/></svg>
<div style="left:660.38px;top:142.5px;width:1.13px;height:278.5px;background:#5a444c;"></div>
<div style="left:662.5px;top:162.5px;width:1.25px;height:8px;background:#999;"></div>
<div style="left:653.25px;top:364px;width:15px;height:16.5px;background:#8088c0;border-radius:50%;box-shadow:inset 0 0 0 1.5px #5a6296;"></div>
<svg style="left:653.25px;top:361.5px;" width="15" height="22" viewBox="261.3 144.6 6.0 8.800000000000011"><path d="M264.3 147.8L263.2 145.2H265.4Z M264.3 150.2L263.2 153H265.4Z" fill="#111"/></svg>
<div style="left:668.25px;top:350px;width:16.75px;height:24.25px;background:#fff;box-shadow:inset 0 0 0 1.3px #808080;"></div>
<div style="left:676px;top:353.5px;width:1.25px;height:17.5px;background:#222;"></div>
<div style="left:0px;top:1044.75px;width:1920px;height:17.75px;background:#efeff1;"></div>
<div style="left:171.75px;top:1045.25px;width:569.5px;height:17px;background:#cdcdcd;"></div>
<svg style="left:154.5px;top:1048.5px;" width="10" height="10" viewBox="0 0 4 4"><path d="M2.8 .6L1.2 2L2.8 3.4" stroke="#333" stroke-width=".7" fill="none"/></svg>
<div style="left:0px;top:1062.5px;width:1920px;height:63px;background:#f7f8fd;"></div>
<div style="left:0px;top:1062px;width:1920px;height:1px;background:#dcdce2;"></div>
<div style="left:0px;top:1125.5px;width:1920px;height:27px;background:#efeff0;"></div>
<div style="left:0px;top:1125px;width:1920px;height:1px;background:#dcdcde;"></div>
<div style="left:5.5px;top:1068.75px;width:7.5px;height:55px;background-image:linear-gradient(#fff 0 1.2px,#d9dbe6 1.2px 2px,transparent 2px);background-size:100% 4px;opacity:.95"></div>
<div style="left:127.5px;top:1068.75px;width:1px;height:55px;background:#cfd0d8;"></div>
<div style="left:222.5px;top:1068.75px;width:1px;height:55px;background:#cfd0d8;"></div>
<div style="left:400.5px;top:1068.75px;width:1px;height:55px;background:#cfd0d8;"></div>
<div style="left:18.75px;top:1076.14px;font-size:13.04px;line-height:15.65px;color:#222;white-space:nowrap;">Project Rate (Hz)</div>
<div style="left:136.25px;top:1075.72px;font-size:13.76px;line-height:16.51px;color:#222;white-space:nowrap;">Snap-To</div>
<div style="left:231.25px;top:1075.88px;font-size:13.49px;line-height:16.19px;color:#222;white-space:nowrap;">Audio Position</div>
<div style="left:408.5px;top:1070.75px;width:332.75px;height:26.25px;background:#e2e2e4;box-shadow:inset 0 0 0 1px #b9bac2;"></div>
<div style="left:414.5px;top:1076.25px;font-size:13.71px;line-height:16.45px;color:#222;white-space:nowrap;">Start and End of Selection</div>
<svg style="left:724px;top:1077.5px;" width="10.5" height="9.5" viewBox="0 0 4.2 3.8"><path d="M.6 1L2.1 2.6L3.6 1" stroke="#444" stroke-width=".5" fill="none"/></svg>
<div style="left:17.75px;top:1097.5px;width:88.75px;height:24.25px;background:#fff;box-shadow:inset 0 0 0 1px #9da0aa;"></div>
<div style="left:25.5px;top:1102.97px;font-size:13.75px;line-height:16.51px;color:#111;white-space:nowrap;">44100</div>
<svg style="left:90px;top:1106px;" width="10.5" height="9.5" viewBox="0 0 4.2 3.8"><path d="M.6 1L2.1 2.6L3.6 1" stroke="#444" stroke-width=".5" fill="none"/></svg>
<div style="left:136.25px;top:1097.5px;width:79.25px;height:24.25px;background:#e2e2e4;box-shadow:inset 0 0 0 1px #b9bac2;"></div>
<div style="left:142.5px;top:1104.12px;font-size:11.78px;line-height:14.14px;color:#111;white-space:nowrap;">Off</div>
<svg style="left:199px;top:1106px;" width="10.5" height="9.5" viewBox="0 0 4.2 3.8"><path d="M.6 1L2.1 2.6L3.6 1" stroke="#444" stroke-width=".5" fill="none"/></svg>
<div style="left:230.25px;top:1097.5px;width:161.75px;height:21.75px;background:#b9c0dc;box-shadow:inset 0 0 0 1px #9a9eb4;"></div>
<div style="left:233.75px;top:1099.75px;width:10.5px;height:17.5px;background:#c9d1f3;"></div>
<div style="left:235.27px;top:1101.93px;font-size:13.40px;line-height:16.08px;color:#3540c8;white-space:nowrap;">0</div>
<div style="left:245.5px;top:1099.75px;width:10.5px;height:17.5px;background:#c9d1f3;"></div>
<div style="left:247.02px;top:1101.93px;font-size:13.40px;line-height:16.08px;color:#3540c8;white-space:nowrap;">0</div>
<div style="left:259.75px;top:1102.39px;font-size:12.60px;line-height:15.12px;color:#2f3ab8;white-space:nowrap;font-weight:bold;">h</div>
<div style="left:270.5px;top:1099.75px;width:10.5px;height:17.5px;background:#c9d1f3;"></div>
<div style="left:272.02px;top:1101.93px;font-size:13.40px;line-height:16.08px;color:#3540c8;white-space:nowrap;">0</div>
<div style="left:282.25px;top:1099.75px;width:10.5px;height:17.5px;background:#c9d1f3;"></div>
<div style="left:283.77px;top:1101.93px;font-size:13.40px;line-height:16.08px;color:#3540c8;white-space:nowrap;">0</div>
<div style="left:296.25px;top:1102.39px;font-size:12.60px;line-height:15.12px;color:#2f3ab8;white-space:nowrap;font-weight:bold;">m</div>
<div style="left:310.25px;top:1099.75px;width:10.5px;height:17.5px;background:#c9d1f3;"></div>
<div style="left:311.77px;top:1101.93px;font-size:13.40px;line-height:16.08px;color:#3540c8;white-space:nowrap;">2</div>
<div style="left:322px;top:1099.75px;width:10.5px;height:17.5px;background:#c9d1f3;"></div>
<div style="left:323.52px;top:1101.93px;font-size:13.40px;line-height:16.08px;color:#3540c8;white-space:nowrap;">0</div>
<div style="left:332.87px;top:1102.39px;font-size:12.60px;line-height:15.12px;color:#2f3ab8;white-space:nowrap;">.</div>
<div style="left:336.75px;top:1099.75px;width:10.5px;height:17.5px;background:#c9d1f3;"></div>
<div style="left:338.27px;top:1101.93px;font-size:13.40px;line-height:16.08px;color:#3540c8;white-space:nowrap;">0</div>
<div style="left:348.5px;top:1099.75px;width:10.5px;height:17.5px;background:#c9d1f3;"></div>
<div style="left:350.02px;top:1101.93px;font-size:13.40px;line-height:16.08px;color:#3540c8;white-space:nowrap;">5</div>
<div style="left:360.25px;top:1099.75px;width:10.5px;height:17.5px;background:#c9d1f3;"></div>
<div style="left:361.77px;top:1101.93px;font-size:13.40px;line-height:16.08px;color:#3540c8;white-space:nowrap;">4</div>
<div style="left:374.47px;top:1102.39px;font-size:12.60px;line-height:15.12px;color:#2f3ab8;white-space:nowrap;font-weight:bold;">s</div>
<svg style="left:382.25px;top:1105.5px;" width="7.5" height="8" viewBox="0 0 3 3.2"><path d="M.3 .8H2.7L1.5 2.4Z" fill="#111"/></svg>
<div style="left:408.75px;top:1097.5px;width:161.75px;height:21.75px;background:#b9c0dc;box-shadow:inset 0 0 0 1px #9a9eb4;"></div>
<div style="left:412.25px;top:1099.75px;width:10.5px;height:17.5px;background:#c9d1f3;"></div>
<div style="left:413.77px;top:1101.93px;font-size:13.40px;line-height:16.08px;color:#3540c8;white-space:nowrap;">0</div>
<div style="left:424px;top:1099.75px;width:10.5px;height:17.5px;background:#c9d1f3;"></div>
<div style="left:425.52px;top:1101.93px;font-size:13.40px;line-height:16.08px;color:#3540c8;white-space:nowrap;">0</div>
<div style="left:438.25px;top:1102.39px;font-size:12.60px;line-height:15.12px;color:#2f3ab8;white-space:nowrap;font-weight:bold;">h</div>
<div style="left:449px;top:1099.75px;width:10.5px;height:17.5px;background:#c9d1f3;"></div>
<div style="left:450.52px;top:1101.93px;font-size:13.40px;line-height:16.08px;color:#3540c8;white-space:nowrap;">0</div>
<div style="left:460.75px;top:1099.75px;width:10.5px;height:17.5px;background:#c9d1f3;"></div>
<div style="left:462.27px;top:1101.93px;font-size:13.40px;line-height:16.08px;color:#3540c8;white-space:nowrap;">0</div>
<div style="left:474.75px;top:1102.39px;font-size:12.60px;line-height:15.12px;color:#2f3ab8;white-space:nowrap;font-weight:bold;">m</div>
<div style="left:488.75px;top:1099.75px;width:10.5px;height:17.5px;background:#c9d1f3;"></div>
<div style="left:490.27px;top:1101.93px;font-size:13.40px;line-height:16.08px;color:#3540c8;white-space:nowrap;">2</div>
<div style="left:500.5px;top:1099.75px;width:10.5px;height:17.5px;background:#c9d1f3;"></div>
<div style="left:502.02px;top:1101.93px;font-size:13.40px;line-height:16.08px;color:#3540c8;white-space:nowrap;">0</div>
<div style="left:511.37px;top:1102.39px;font-size:12.60px;line-height:15.12px;color:#2f3ab8;white-space:nowrap;">.</div>
<div style="left:515.25px;top:1099.75px;width:10.5px;height:17.5px;background:#c9d1f3;"></div>
<div style="left:516.77px;top:1101.93px;font-size:13.40px;line-height:16.08px;color:#3540c8;white-space:nowrap;">0</div>
<div style="left:527px;top:1099.75px;width:10.5px;height:17.5px;background:#c9d1f3;"></div>
<div style="left:528.52px;top:1101.93px;font-size:13.40px;line-height:16.08px;color:#3540c8;white-space:nowrap;">5</div>
<div style="left:538.75px;top:1099.75px;width:10.5px;height:17.5px;background:#c9d1f3;"></div>
<div style="left:540.27px;top:1101.93px;font-size:13.40px;line-height:16.08px;color:#3540c8;white-space:nowrap;">4</div>
<div style="left:552.97px;top:1102.39px;font-size:12.60px;line-height:15.12px;color:#2f3ab8;white-space:nowrap;font-weight:bold;">s</div>
<svg style="left:560.75px;top:1105.5px;" width="7.5" height="8" viewBox="0 0 3 3.2"><path d="M.3 .8H2.7L1.5 2.4Z" fill="#111"/></svg>
<div style="left:578.25px;top:1097.5px;width:161.75px;height:21.75px;background:#b9c0dc;box-shadow:inset 0 0 0 1px #9a9eb4;"></div>
<div style="left:581.75px;top:1099.75px;width:10.5px;height:17.5px;background:#c9d1f3;"></div>
<div style="left:583.27px;top:1101.93px;font-size:13.40px;line-height:16.08px;color:#3540c8;white-space:nowrap;">0</div>
<div style="left:593.5px;top:1099.75px;width:10.5px;height:17.5px;background:#c9d1f3;"></div>
<div style="left:595.02px;top:1101.93px;font-size:13.40px;line-height:16.08px;color:#3540c8;white-space:nowrap;">0</div>
<div style="left:607.75px;top:1102.39px;font-size:12.60px;line-height:15.12px;color:#2f3ab8;white-space:nowrap;font-weight:bold;">h</div>
<div style="left:618.5px;top:1099.75px;width:10.5px;height:17.5px;background:#c9d1f3;"></div>
<div style="left:620.02px;top:1101.93px;font-size:13.40px;line-height:16.08px;color:#3540c8;white-space:nowrap;">0</div>
<div style="left:630.25px;top:1099.75px;width:10.5px;height:17.5px;background:#c9d1f3;"></div>
<div style="left:631.77px;top:1101.93px;font-size:13.40px;line-height:16.08px;color:#3540c8;white-space:nowrap;">0</div>
<div style="left:644.25px;top:1102.39px;font-size:12.60px;line-height:15.12px;color:#2f3ab8;white-space:nowrap;font-weight:bold;">m</div>
<div style="left:658.25px;top:1099.75px;width:10.5px;height:17.5px;background:#c9d1f3;"></div>
<div style="left:659.77px;top:1101.93px;font-size:13.40px;line-height:16.08px;color:#3540c8;white-space:nowrap;">2</div>
<div style="left:670px;top:1099.75px;width:10.5px;height:17.5px;background:#c9d1f3;"></div>
<div style="left:671.52px;top:1101.93px;font-size:13.40px;line-height:16.08px;color:#3540c8;white-space:nowrap;">0</div>
<div style="left:680.87px;top:1102.39px;font-size:12.60px;line-height:15.12px;color:#2f3ab8;white-space:nowrap;">.</div>
<div style="left:684.75px;top:1099.75px;width:10.5px;height:17.5px;background:#c9d1f3;"></div>
<div style="left:686.27px;top:1101.93px;font-size:13.40px;line-height:16.08px;color:#3540c8;white-space:nowrap;">0</div>
<div style="left:696.5px;top:1099.75px;width:10.5px;height:17.5px;background:#c9d1f3;"></div>
<div style="left:698.02px;top:1101.93px;font-size:13.40px;line-height:16.08px;color:#3540c8;white-space:nowrap;">5</div>
<div style="left:708.25px;top:1099.75px;width:10.5px;height:17.5px;background:#c9d1f3;"></div>
<div style="left:709.77px;top:1101.93px;font-size:13.40px;line-height:16.08px;color:#3540c8;white-space:nowrap;">4</div>
<div style="left:722.47px;top:1102.39px;font-size:12.60px;line-height:15.12px;color:#2f3ab8;white-space:nowrap;font-weight:bold;">s</div>
<svg style="left:730.25px;top:1105.5px;" width="7.5" height="8" viewBox="0 0 3 3.2"><path d="M.3 .8H2.7L1.5 2.4Z" fill="#111"/></svg>
<div style="left:15.5px;top:1135.21px;font-size:12.49px;line-height:14.99px;color:#222;white-space:nowrap;">Stopped.</div>
<div style="left:199.5px;top:1131.25px;width:1px;height:20px;background:#d0d0d4;"></div>
<div style="left:35.75px;top:46.5px;width:253.5px;height:354.25px;background:#f2f2f2;box-shadow:0 0 0 1px #c9c9c9 inset, 3px 3px 4px rgba(0,0,0,.28);"></div>
<div style="left:74.5px;top:55.64px;font-size:12.60px;line-height:15.12px;color:#111;white-space:nowrap;">Undo Label</div>
<div style="left:230px;top:55.64px;font-size:12.60px;line-height:15.12px;color:#111;white-space:nowrap;">Ctrl+Z</div>
<div style="left:74.5px;top:79.89px;font-size:12.60px;line-height:15.12px;color:#8e8e8e;white-space:nowrap;">Redo</div>
<div style="left:230px;top:79.89px;font-size:12.60px;line-height:15.12px;color:#8e8e8e;white-space:nowrap;">Ctrl+Y</div>
<div style="left:68.75px;top:101.75px;width:218.75px;height:1px;background:#d4d4d4;"></div>
<div style="left:74.5px;top:112.39px;font-size:12.60px;line-height:15.12px;color:#111;white-space:nowrap;">Cut</div>
<div style="left:230px;top:112.39px;font-size:12.60px;line-height:15.12px;color:#111;white-space:nowrap;">Ctrl+X</div>
<div style="left:74.5px;top:136.64px;font-size:12.60px;line-height:15.12px;color:#111;white-space:nowrap;">Delete</div>
<div style="left:230px;top:136.64px;font-size:12.60px;line-height:15.12px;color:#111;white-space:nowrap;">Ctrl+K</div>
<div style="left:74.5px;top:160.89px;font-size:12.60px;line-height:15.12px;color:#111;white-space:nowrap;">Copy</div>
<div style="left:230px;top:160.89px;font-size:12.60px;line-height:15.12px;color:#111;white-space:nowrap;">Ctrl+C</div>
<div style="left:74.5px;top:185.14px;font-size:12.60px;line-height:15.12px;color:#111;white-space:nowrap;">Paste</div>
<div style="left:230px;top:185.14px;font-size:12.60px;line-height:15.12px;color:#111;white-space:nowrap;">Ctrl+V</div>
<div style="left:74.5px;top:209.39px;font-size:12.60px;line-height:15.12px;color:#111;white-space:nowrap;">Duplicate</div>
<div style="left:230px;top:209.39px;font-size:12.60px;line-height:15.12px;color:#111;white-space:nowrap;">Ctrl+D</div>
<div style="left:68.75px;top:231.25px;width:218.75px;height:1px;background:#d4d4d4;"></div>
<div style="left:74.5px;top:241.89px;font-size:12.60px;line-height:15.12px;color:#111;white-space:nowrap;">Remove Special</div>
<svg style="left:270.25px;top:243px;" width="7.5" height="10" viewBox="0 0 3 4"><path d="M.8 .6L2.2 2L.8 3.4" stroke="#333" stroke-width=".5" fill="none"/></svg>
<div style="left:68.75px;top:263.75px;width:218.75px;height:1px;background:#d4d4d4;"></div>
<div style="left:74.5px;top:274.39px;font-size:12.60px;line-height:15.12px;color:#111;white-space:nowrap;">Clip Boundaries</div>
<svg style="left:270.25px;top:275.5px;" width="7.5" height="10" viewBox="0 0 3 4"><path d="M.8 .6L2.2 2L.8 3.4" stroke="#333" stroke-width=".5" fill="none"/></svg>
<div style="left:38px;top:292.62px;width:246.5px;height:24.25px;background:#91c9f7;"></div>
<div style="left:74.5px;top:298.64px;font-size:12.60px;line-height:15.12px;color:#111;white-space:nowrap;">Labels</div>
<svg style="left:270.25px;top:299.75px;" width="7.5" height="10" viewBox="0 0 3 4"><path d="M.8 .6L2.2 2L.8 3.4" stroke="#333" stroke-width=".5" fill="none"/></svg>
<div style="left:74.5px;top:322.89px;font-size:12.60px;line-height:15.12px;color:#111;white-space:nowrap;">Labeled Audio</div>
<svg style="left:270.25px;top:324px;" width="7.5" height="10" viewBox="0 0 3 4"><path d="M.8 .6L2.2 2L.8 3.4" stroke="#333" stroke-width=".5" fill="none"/></svg>
<div style="left:74.5px;top:347.14px;font-size:12.60px;line-height:15.12px;color:#111;white-space:nowrap;">Metadata...</div>
<div style="left:68.75px;top:369px;width:218.75px;height:1px;background:#d4d4d4;"></div>
<div style="left:74.5px;top:379.64px;font-size:12.60px;line-height:15.12px;color:#111;white-space:nowrap;">Preferences...</div>
<div style="left:230px;top:379.64px;font-size:12.60px;line-height:15.12px;color:#111;white-space:nowrap;">Ctrl+P</div>
<div style="left:287px;top:289px;width:316.5px;height:143.5px;background:#f2f2f2;box-shadow:0 0 0 1px #c9c9c9 inset, 3px 3px 4px rgba(0,0,0,.28);"></div>
<div style="left:322px;top:297.88px;font-size:13.05px;line-height:15.66px;color:#111;white-space:nowrap;">Edit Labels...</div>
<div style="left:317.5px;top:320px;width:284px;height:1px;background:#d4d4d4;"></div>
<div style="left:288.75px;top:324.62px;width:307.75px;height:24.25px;background:#91c9f7;"></div>
<div style="left:322px;top:330.38px;font-size:13.05px;line-height:15.66px;color:#111;white-space:nowrap;">Add Label at Selection</div>
<div style="left:546.38px;top:330.38px;font-size:13.05px;line-height:15.66px;color:#111;white-space:nowrap;">Ctrl+B</div>
<div style="left:322px;top:354.63px;font-size:13.05px;line-height:15.66px;color:#8e8e8e;white-space:nowrap;">Add Label at Playback Position</div>
<div style="left:544.21px;top:354.63px;font-size:13.05px;line-height:15.66px;color:#8e8e8e;white-space:nowrap;">Ctrl+M</div>
<div style="left:322px;top:378.88px;font-size:13.05px;line-height:15.66px;color:#111;white-space:nowrap;">Paste Text to New Label</div>
<div style="left:317.5px;top:401px;width:284px;height:1px;background:#d4d4d4;"></div>
<div style="left:322px;top:411.38px;font-size:13.05px;line-height:15.66px;color:#111;white-space:nowrap;">Type to Create a Label (on/off)</div>
<div style="left:27.25px;top:277.5px;width:587.5px;height:167.37px;border:12.12px solid #fcc419;box-sizing:border-box;"></div>
<svg style="left:562.5px;top:412.5px;" width="200" height="275" viewBox="225 165 80 110"><polygon points="264.1,170.5 293.2,218.8 278.7,218.8 278.7,268.1 248.9,268.1 248.9,218.8 234.2,218.8" fill="#000"/><polygon points="264.1,178.7 286,214.9 274.5,214.9 274.5,264.2 253.1,264.2 253.1,214.9 242,214.9" fill="#ffc81a"/></svg>
</div></body></html>
